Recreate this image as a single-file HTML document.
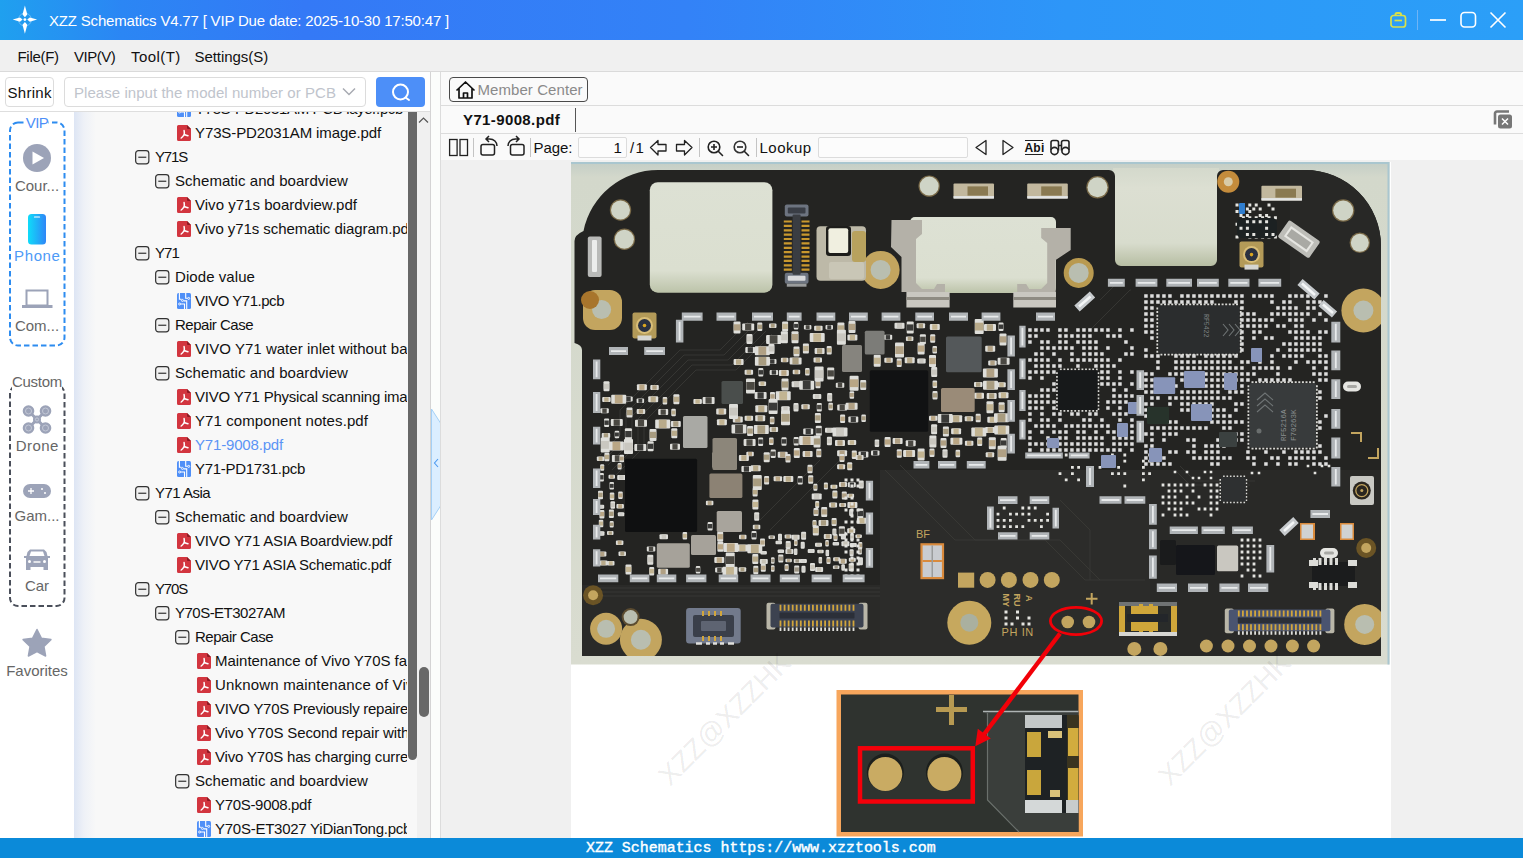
<!DOCTYPE html>
<html><head><meta charset="utf-8"><title>XZZ Schematics</title>
<style>
*{box-sizing:border-box;margin:0;padding:0}
html,body{width:1523px;height:858px;overflow:hidden;background:#f0f0f0;font-family:"Liberation Sans",sans-serif;font-size:15px;color:#111}
.abs{position:absolute}
#title{position:absolute;left:0;top:0;width:1523px;height:40px;background:linear-gradient(90deg,#1fa0ef 0,#2b86f4 8%,#3479f6 20%,#3382f7 45%,#2d96f8 70%,#2b9ff8 100%)}
#title .tx{position:absolute;left:49px;top:12px;color:#fff;font-size:15px;line-height:18px;white-space:nowrap;letter-spacing:-0.186px}
#menu{position:absolute;left:0;top:40px;width:1523px;height:32px;background:#f0f0f0;border-bottom:1px solid #dadada}
#menu span{position:absolute;top:8px;line-height:18px;font-size:15px;white-space:nowrap;color:#111}
#left{position:absolute;left:0;top:72px;width:430px;height:766px;background:#fff;overflow:hidden}
#ltool{position:absolute;left:0;top:0;width:430px;height:40px;background:#fff;border-bottom:1px solid #dedede}
#shrink{position:absolute;left:5px;top:5px;width:49px;height:30px;border:1px solid #dcdcdc;border-radius:4px;background:#fff;font-size:15px;line-height:28px;padding-top:1px;text-align:center;letter-spacing:.25px;text-indent:.25px}
#search{position:absolute;left:64px;top:5px;width:302px;height:30px;border:1px solid #dcdcdc;border-radius:4px;background:#fff}
#search span{position:absolute;left:9px;top:6px;line-height:18px;color:#c0c4cc;white-space:nowrap;letter-spacing:.05px}
#sbtn{position:absolute;left:376px;top:5px;width:49px;height:30px;border-radius:4px;background:#4d8ff8}
#side{position:absolute;left:0;top:40px;width:74px;height:726px;background:#fff}
#side .lbl{position:absolute;left:0;width:74px;text-align:center;font-size:15px;line-height:18px;color:#666;white-space:nowrap}
#tree{position:absolute;left:74px;top:40px;width:333px;height:726px;overflow:hidden;background:linear-gradient(90deg,#dde5f4 0,#eef1f7 10px,#f8f8f8 22px,#f8f8f8 100%)}
.tr{position:absolute;left:0;width:400px;height:24px}
.tr .tt{position:absolute;top:3px;line-height:18px;white-space:nowrap;color:#111}
.tr .tt.sel{color:#5b94f5}
.tr .ex{position:absolute;top:5px}
.tr .fi{position:absolute;top:4px}
#dbar{position:absolute;left:407.500px;top:40px;width:9.800px;height:648px;background:#686868;border-radius:0 0 5px 5px}
#vsb{position:absolute;left:417.300px;top:40px;width:12.700px;height:726px;background:#f0f0f0}
#vsb i{position:absolute;left:1.500px;top:555px;width:10px;height:49.500px;border-radius:5px;background:#686868}
#split{position:absolute;left:430px;top:72px;width:11px;height:766px;background:#fbfdfb;border-left:1px solid #d4d4d4}
#right{position:absolute;left:440px;top:72px;width:1083px;height:766px;background:#fafafa;border-left:1px solid #dcdcdc}
#mc{position:absolute;left:8px;top:5px;width:139px;height:25px;border:1px solid #4a4a4a;border-radius:4px;background:#fafafa}
#mc span{position:absolute;left:27.500px;letter-spacing:.07px;top:3px;line-height:18px;color:#8a8a8a;white-space:nowrap}
#tabs{position:absolute;left:0;top:33px;width:1082px;height:29px;border-top:1px solid #dcdcdc;border-bottom:1px solid #dcdcdc;background:#fafafa}
#tabs b{position:absolute;left:22px;top:5px;line-height:18px;font-size:15px;letter-spacing:.38px;white-space:nowrap;color:#111}
#tabs i{position:absolute;left:134px;top:2px;width:1px;height:24px;background:#555}
#ptool{position:absolute;left:0;top:61px;width:1082px;height:28px}
#ptool .t{position:absolute;top:6px;line-height:18px;white-space:nowrap;color:#111}
#ptool .sep{position:absolute;top:5px;width:1px;height:19px;background:#c8c8c8}
#ptool .inp{position:absolute;top:4px;height:21px;border:1px solid #dcdcdc;border-radius:2px;background:#fcfcfc}
#doc{position:absolute;left:0;top:88px;width:1082px;height:678px;background:#f0f0f0;overflow:hidden}
#page{position:absolute;left:130px;top:2px;width:820px;height:676px;background:#fff}
#status{position:absolute;left:0;top:838px;width:1523px;height:20px;background:#0b8ad9}
#status span{position:absolute;left:586px;top:1px;line-height:18px;font-family:"Liberation Mono",monospace;font-size:14.950px;color:#fff;white-space:pre;-webkit-text-stroke:.4px #fff}
</style></head><body>
<div id="title">
<svg class="abs" style="left:12px;top:5px" width="26" height="30" viewBox="0 0 26 30"><path d="M12.900 .4L15.300 9.500 12.900 12.300 10.500 9.500zM12.900 28.800L15.300 19.700 12.900 16.900 10.500 19.700zM.7 14.600L8 12.500 10.600 14.600 8 16.700zM25.100 14.600L17.800 12.500 15.200 14.600 17.800 16.700z" fill="#fff"/><circle cx="12.900" cy="14.600" r="1.400" fill="#fff"/><circle cx="12.900" cy="14.600" r="6.500" fill="none" stroke="#fff" stroke-opacity=".3" stroke-width="1"/></svg>
<span class="tx">XZZ Schematics V4.77 [ VIP Due date: 2025-10-30 17:50:47 ]</span>
<svg class="abs" style="left:1385px;top:8px" width="130" height="24" viewBox="0 0 130 24" fill="none">
<rect x="6" y="7.500" width="14.500" height="11.500" rx="2.500" stroke="#d8e04a" stroke-width="1.700"/><path d="M10.500 7.500v-1a1.500 1.500 0 0 1 1.500-1.500h2.500a1.500 1.500 0 0 1 1.500 1.500v1" stroke="#d8e04a" stroke-width="2"/><path d="M9.500 12.500h7.500" stroke="#d8e04a" stroke-width="1.700"/>
<path d="M32.500 2v20" stroke="#6fb4f6" stroke-width="1"/>
<path d="M45 12h16" stroke="#fff" stroke-width="1.700"/>
<rect x="76" y="4.500" width="14.500" height="14.500" rx="3.500" stroke="#fff" stroke-width="1.600"/>
<path d="M105.500 4.500l15 15M120.500 4.500l-15 15" stroke="#fff" stroke-width="1.600"/>
</svg>
</div>
<div id="menu"><span style="left:17.500px;letter-spacing:-.3px">File(F)</span><span style="left:74px;letter-spacing:-.5px">VIP(V)</span><span style="left:131px;letter-spacing:.45px">Tool(T)</span><span style="left:194.500px;letter-spacing:-.05px">Settings(S)</span></div>

<div id="left">
 <div id="side">
  <svg class="abs" style="left:0;top:0" width="74" height="600" viewBox="0 0 74 600" fill="none">
   <rect x="10" y="10.500" width="54.500" height="223" rx="8" stroke="#2d8cf0" stroke-width="2" stroke-dasharray="5.500 3"/>
   <rect x="26" y="3" width="22.500" height="14" fill="#fff"/>
   <circle cx="37" cy="46" r="14" fill="#9ca3b8"/><path d="M32.500 39.500L44 46 32.500 52.500z" fill="#fff"/>
   <defs><linearGradient id="pg" x1="0" x2="1"><stop offset="0" stop-color="#0fdcf9"/><stop offset="1" stop-color="#2f86f7"/></linearGradient></defs>
   <rect x="28" y="102" width="18" height="30.500" rx="3.500" fill="url(#pg)"/><path d="M34.500 105h5" stroke="#fff" stroke-width="1.200" stroke-linecap="round"/>
   <path d="M26.500 178.500h21v15h-21z" stroke="#9ca3b8" stroke-width="2"/><path d="M22 194.500h30.500" stroke="#9ca3b8" stroke-width="3"/>
   <rect x="10" y="273.500" width="54.500" height="220.500" rx="8" stroke="#4a4f5a" stroke-width="2" stroke-dasharray="5.500 3"/>
   <rect x="12" y="262" width="50" height="16" fill="#fff"/>
   <g stroke="#9ca3b8" stroke-width="3"><path d="M29 299.500l16 16M45 299.500l-16 16"/></g>
   <g fill="#9ca3b8"><circle cx="28.500" cy="299" r="5.800"/><circle cx="45.500" cy="299" r="5.800"/><circle cx="28.500" cy="316" r="5.800"/><circle cx="45.500" cy="316" r="5.800"/><circle cx="37" cy="307.500" r="4"/></g>
   <g fill="none" stroke="#c3c8d6" stroke-width="1"><circle cx="28.500" cy="299" r="3"/><circle cx="45.500" cy="299" r="3"/><circle cx="28.500" cy="316" r="3"/><circle cx="45.500" cy="316" r="3"/><circle cx="37" cy="307.500" r="1.600"/></g>
   <rect x="23" y="372" width="28" height="14" rx="7" fill="#9ca3b8"/><path d="M28 379h6M31 376v6" stroke="#fff" stroke-width="1.300"/><circle cx="42" cy="377" r="1" fill="#fff"/><circle cx="45" cy="381" r="1" fill="#fff"/>
   <path d="M27.500 440l2.500-2.500h14l2.500 2.500 1 4h2.500v2h-2v12h-4.500v-3h-13v3h-4.500v-12h-2v-2h2.500z" fill="#9ca3b8"/><path d="M29.500 444l1.500-4.500h12l1.500 4.500z" fill="#fff"/><circle cx="29.500" cy="449.500" r="1.500" fill="#fff"/><circle cx="44.500" cy="449.500" r="1.500" fill="#fff"/><path d="M33.500 450h7" stroke="#fafafa" stroke-width="1.500"/>
   <path d="M37 517.500l4.300 8.700 9.600 1.400-7 6.800 1.700 9.600L37 539.500l-8.600 4.500 1.700-9.600-7-6.800 9.600-1.400z" fill="#9ca3b8" stroke="#9ca3b8" stroke-width="1.500" stroke-linejoin="round"/>
  </svg>
  <div class="lbl" style="top:2px;color:#4d8ff8;letter-spacing:-.5px">VIP</div>
  <div class="lbl" style="top:65px">Cour...</div>
  <div class="lbl" style="top:135px;color:#4d9af7;letter-spacing:.6px;text-indent:.6px">Phone</div>
  <div class="lbl" style="top:205px">Com...</div>
  <div class="lbl" style="top:261px;letter-spacing:-.3px">Custom</div>
  <div class="lbl" style="top:325px;letter-spacing:.4px;text-indent:.4px">Drone</div>
  <div class="lbl" style="top:395px">Gam...</div>
  <div class="lbl" style="top:465px">Car</div>
  <div class="lbl" style="top:550px">Favorites</div>
 </div>
 <div id="tree">
<div class="tr" style="top:-15px"><svg class="fi" style="left:103px" width="14" height="16" viewBox="0 0 14 16"><rect width="14" height="16" rx="1.500" fill="#4f8ff7"/><path d="M2.400 0V6.300H4.400M8.700 0V5.200H10.800M3.600 11H7.500V16M6.500 7.900H9.700V16" fill="none" stroke="#fff" stroke-width="1.100"/><g fill="#4f8ff7" stroke="#fff" stroke-width=".9"><circle cx="5.400" cy="7.400" r="1"/><circle cx="11.700" cy="5.400" r="1"/><circle cx="2.600" cy="11" r="1"/></g></svg><span class="tt " style="left:121px;letter-spacing:-0.356px;">Y73S-PD2031AM PCB layer.pcb</span></div>
<div class="tr" style="top:9px"><svg class="fi" style="left:103px" width="14" height="16" viewBox="0 0 14 16"><path d="M1.500 0h8.500L14 4v10.500a1.500 1.500 0 0 1-1.500 1.500h-11A1.500 1.500 0 0 1 0 14.500v-13A1.500 1.500 0 0 1 1.500 0z" fill="#d2353f"/><path d="M10 0L14 4h-3a1 1 0 0 1-1-1z" fill="#8d1a24"/><path d="M7.100 5.600C7.400 7.200 7.400 8.300 7.200 9.300M7.200 9.300C6.500 10.800 5.400 12.200 4.200 13M7.200 9.300C8.400 10 9.700 10.500 11 10.700" fill="none" stroke="#fff" stroke-width="1.500" stroke-linecap="round"/></svg><span class="tt " style="left:121px;letter-spacing:-0.106px;">Y73S-PD2031AM image.pdf</span></div>
<div class="tr" style="top:33px"><svg class="ex" style="left:61px" width="15" height="15" viewBox="0 0 15 15"><rect x=".65" y=".65" width="13.200" height="13.200" rx="2.800" fill="#f0f0f0" stroke="#333" stroke-width="1.200"/><path d="M3.300 7.250h8" stroke="#333" stroke-width="1.200"/></svg><span class="tt " style="left:81px;letter-spacing:-1.173px;">Y71S</span></div>
<div class="tr" style="top:57px"><svg class="ex" style="left:81px" width="15" height="15" viewBox="0 0 15 15"><rect x=".65" y=".65" width="13.200" height="13.200" rx="2.800" fill="#f0f0f0" stroke="#333" stroke-width="1.200"/><path d="M3.300 7.250h8" stroke="#333" stroke-width="1.200"/></svg><span class="tt " style="left:101px;letter-spacing:0.054px;">Schematic and boardview</span></div>
<div class="tr" style="top:81px"><svg class="fi" style="left:103px" width="14" height="16" viewBox="0 0 14 16"><path d="M1.500 0h8.500L14 4v10.500a1.500 1.500 0 0 1-1.500 1.500h-11A1.500 1.500 0 0 1 0 14.500v-13A1.500 1.500 0 0 1 1.500 0z" fill="#d2353f"/><path d="M10 0L14 4h-3a1 1 0 0 1-1-1z" fill="#8d1a24"/><path d="M7.100 5.600C7.400 7.200 7.400 8.300 7.200 9.300M7.200 9.300C6.500 10.800 5.400 12.200 4.200 13M7.200 9.300C8.400 10 9.700 10.500 11 10.700" fill="none" stroke="#fff" stroke-width="1.500" stroke-linecap="round"/></svg><span class="tt " style="left:121px;letter-spacing:0.022px;">Vivo y71s boardview.pdf</span></div>
<div class="tr" style="top:105px"><svg class="fi" style="left:103px" width="14" height="16" viewBox="0 0 14 16"><path d="M1.500 0h8.500L14 4v10.500a1.500 1.500 0 0 1-1.500 1.500h-11A1.500 1.500 0 0 1 0 14.500v-13A1.500 1.500 0 0 1 1.500 0z" fill="#d2353f"/><path d="M10 0L14 4h-3a1 1 0 0 1-1-1z" fill="#8d1a24"/><path d="M7.100 5.600C7.400 7.200 7.400 8.300 7.200 9.300M7.200 9.300C6.500 10.800 5.400 12.200 4.200 13M7.200 9.300C8.400 10 9.700 10.500 11 10.700" fill="none" stroke="#fff" stroke-width="1.500" stroke-linecap="round"/></svg><span class="tt " style="left:121px;letter-spacing:-0.061px;">Vivo y71s schematic diagram.pdf</span></div>
<div class="tr" style="top:129px"><svg class="ex" style="left:61px" width="15" height="15" viewBox="0 0 15 15"><rect x=".65" y=".65" width="13.200" height="13.200" rx="2.800" fill="#f0f0f0" stroke="#333" stroke-width="1.200"/><path d="M3.300 7.250h8" stroke="#333" stroke-width="1.200"/></svg><span class="tt " style="left:81px;letter-spacing:-0.896px;">Y71</span></div>
<div class="tr" style="top:153px"><svg class="ex" style="left:81px" width="15" height="15" viewBox="0 0 15 15"><rect x=".65" y=".65" width="13.200" height="13.200" rx="2.800" fill="#f0f0f0" stroke="#333" stroke-width="1.200"/><path d="M3.300 7.250h8" stroke="#333" stroke-width="1.200"/></svg><span class="tt " style="left:101px;letter-spacing:0.071px;">Diode value</span></div>
<div class="tr" style="top:177px"><svg class="fi" style="left:103px" width="14" height="16" viewBox="0 0 14 16"><rect width="14" height="16" rx="1.500" fill="#4f8ff7"/><path d="M2.400 0V6.300H4.400M8.700 0V5.200H10.800M3.600 11H7.500V16M6.500 7.900H9.700V16" fill="none" stroke="#fff" stroke-width="1.100"/><g fill="#4f8ff7" stroke="#fff" stroke-width=".9"><circle cx="5.400" cy="7.400" r="1"/><circle cx="11.700" cy="5.400" r="1"/><circle cx="2.600" cy="11" r="1"/></g></svg><span class="tt " style="left:121px;letter-spacing:-0.482px;">VIVO Y71.pcb</span></div>
<div class="tr" style="top:201px"><svg class="ex" style="left:81px" width="15" height="15" viewBox="0 0 15 15"><rect x=".65" y=".65" width="13.200" height="13.200" rx="2.800" fill="#f0f0f0" stroke="#333" stroke-width="1.200"/><path d="M3.300 7.250h8" stroke="#333" stroke-width="1.200"/></svg><span class="tt " style="left:101px;letter-spacing:-0.488px;">Repair Case</span></div>
<div class="tr" style="top:225px"><svg class="fi" style="left:103px" width="14" height="16" viewBox="0 0 14 16"><path d="M1.500 0h8.500L14 4v10.500a1.500 1.500 0 0 1-1.500 1.500h-11A1.500 1.500 0 0 1 0 14.500v-13A1.500 1.500 0 0 1 1.500 0z" fill="#d2353f"/><path d="M10 0L14 4h-3a1 1 0 0 1-1-1z" fill="#8d1a24"/><path d="M7.100 5.600C7.400 7.200 7.400 8.300 7.200 9.300M7.200 9.300C6.500 10.800 5.400 12.200 4.200 13M7.200 9.300C8.400 10 9.700 10.500 11 10.700" fill="none" stroke="#fff" stroke-width="1.500" stroke-linecap="round"/></svg><span class="tt " style="left:121px;letter-spacing:0.032px;">VIVO Y71 water inlet without backlight.pdf</span></div>
<div class="tr" style="top:249px"><svg class="ex" style="left:81px" width="15" height="15" viewBox="0 0 15 15"><rect x=".65" y=".65" width="13.200" height="13.200" rx="2.800" fill="#f0f0f0" stroke="#333" stroke-width="1.200"/><path d="M3.300 7.250h8" stroke="#333" stroke-width="1.200"/></svg><span class="tt " style="left:101px;letter-spacing:0.054px;">Schematic and boardview</span></div>
<div class="tr" style="top:273px"><svg class="fi" style="left:103px" width="14" height="16" viewBox="0 0 14 16"><path d="M1.500 0h8.500L14 4v10.500a1.500 1.500 0 0 1-1.500 1.500h-11A1.500 1.500 0 0 1 0 14.500v-13A1.500 1.500 0 0 1 1.500 0z" fill="#d2353f"/><path d="M10 0L14 4h-3a1 1 0 0 1-1-1z" fill="#8d1a24"/><path d="M7.100 5.600C7.400 7.200 7.400 8.300 7.200 9.300M7.200 9.300C6.500 10.800 5.400 12.200 4.200 13M7.200 9.300C8.400 10 9.700 10.500 11 10.700" fill="none" stroke="#fff" stroke-width="1.500" stroke-linecap="round"/></svg><span class="tt " style="left:121px;letter-spacing:-0.217px;">VIVO Y71 Physical scanning image.pdf</span></div>
<div class="tr" style="top:297px"><svg class="fi" style="left:103px" width="14" height="16" viewBox="0 0 14 16"><path d="M1.500 0h8.500L14 4v10.500a1.500 1.500 0 0 1-1.500 1.500h-11A1.500 1.500 0 0 1 0 14.500v-13A1.500 1.500 0 0 1 1.500 0z" fill="#d2353f"/><path d="M10 0L14 4h-3a1 1 0 0 1-1-1z" fill="#8d1a24"/><path d="M7.100 5.600C7.400 7.200 7.400 8.300 7.200 9.300M7.200 9.300C6.500 10.800 5.400 12.200 4.200 13M7.200 9.300C8.400 10 9.700 10.500 11 10.700" fill="none" stroke="#fff" stroke-width="1.500" stroke-linecap="round"/></svg><span class="tt " style="left:121px;letter-spacing:0.089px;">Y71 component notes.pdf</span></div>
<div class="tr" style="top:321px"><svg class="fi" style="left:103px" width="14" height="16" viewBox="0 0 14 16"><path d="M1.500 0h8.500L14 4v10.500a1.500 1.500 0 0 1-1.500 1.500h-11A1.500 1.500 0 0 1 0 14.500v-13A1.500 1.500 0 0 1 1.500 0z" fill="#d2353f"/><path d="M10 0L14 4h-3a1 1 0 0 1-1-1z" fill="#8d1a24"/><path d="M7.100 5.600C7.400 7.200 7.400 8.300 7.200 9.300M7.200 9.300C6.500 10.800 5.400 12.200 4.200 13M7.200 9.300C8.400 10 9.700 10.500 11 10.700" fill="none" stroke="#fff" stroke-width="1.500" stroke-linecap="round"/></svg><span class="tt sel" style="left:121px;letter-spacing:-0.173px;">Y71-9008.pdf</span></div>
<div class="tr" style="top:345px"><svg class="fi" style="left:103px" width="14" height="16" viewBox="0 0 14 16"><rect width="14" height="16" rx="1.500" fill="#4f8ff7"/><path d="M2.400 0V6.300H4.400M8.700 0V5.200H10.800M3.600 11H7.500V16M6.500 7.900H9.700V16" fill="none" stroke="#fff" stroke-width="1.100"/><g fill="#4f8ff7" stroke="#fff" stroke-width=".9"><circle cx="5.400" cy="7.400" r="1"/><circle cx="11.700" cy="5.400" r="1"/><circle cx="2.600" cy="11" r="1"/></g></svg><span class="tt " style="left:121px;letter-spacing:-0.303px;">Y71-PD1731.pcb</span></div>
<div class="tr" style="top:369px"><svg class="ex" style="left:61px" width="15" height="15" viewBox="0 0 15 15"><rect x=".65" y=".65" width="13.200" height="13.200" rx="2.800" fill="#f0f0f0" stroke="#333" stroke-width="1.200"/><path d="M3.300 7.250h8" stroke="#333" stroke-width="1.200"/></svg><span class="tt " style="left:81px;letter-spacing:-0.526px;">Y71 Asia</span></div>
<div class="tr" style="top:393px"><svg class="ex" style="left:81px" width="15" height="15" viewBox="0 0 15 15"><rect x=".65" y=".65" width="13.200" height="13.200" rx="2.800" fill="#f0f0f0" stroke="#333" stroke-width="1.200"/><path d="M3.300 7.250h8" stroke="#333" stroke-width="1.200"/></svg><span class="tt " style="left:101px;letter-spacing:0.054px;">Schematic and boardview</span></div>
<div class="tr" style="top:417px"><svg class="fi" style="left:103px" width="14" height="16" viewBox="0 0 14 16"><path d="M1.500 0h8.500L14 4v10.500a1.500 1.500 0 0 1-1.500 1.500h-11A1.500 1.500 0 0 1 0 14.500v-13A1.500 1.500 0 0 1 1.500 0z" fill="#d2353f"/><path d="M10 0L14 4h-3a1 1 0 0 1-1-1z" fill="#8d1a24"/><path d="M7.100 5.600C7.400 7.200 7.400 8.300 7.200 9.300M7.200 9.300C6.500 10.800 5.400 12.200 4.200 13M7.200 9.300C8.400 10 9.700 10.500 11 10.700" fill="none" stroke="#fff" stroke-width="1.500" stroke-linecap="round"/></svg><span class="tt " style="left:121px;letter-spacing:-0.167px;">VIVO Y71 ASIA Boardview.pdf</span></div>
<div class="tr" style="top:441px"><svg class="fi" style="left:103px" width="14" height="16" viewBox="0 0 14 16"><path d="M1.500 0h8.500L14 4v10.500a1.500 1.500 0 0 1-1.500 1.500h-11A1.500 1.500 0 0 1 0 14.500v-13A1.500 1.500 0 0 1 1.500 0z" fill="#d2353f"/><path d="M10 0L14 4h-3a1 1 0 0 1-1-1z" fill="#8d1a24"/><path d="M7.100 5.600C7.400 7.200 7.400 8.300 7.200 9.300M7.200 9.300C6.500 10.800 5.400 12.200 4.200 13M7.200 9.300C8.400 10 9.700 10.500 11 10.700" fill="none" stroke="#fff" stroke-width="1.500" stroke-linecap="round"/></svg><span class="tt " style="left:121px;letter-spacing:-0.235px;">VIVO Y71 ASIA Schematic.pdf</span></div>
<div class="tr" style="top:465px"><svg class="ex" style="left:61px" width="15" height="15" viewBox="0 0 15 15"><rect x=".65" y=".65" width="13.200" height="13.200" rx="2.800" fill="#f0f0f0" stroke="#333" stroke-width="1.200"/><path d="M3.300 7.250h8" stroke="#333" stroke-width="1.200"/></svg><span class="tt " style="left:81px;letter-spacing:-1.173px;">Y70S</span></div>
<div class="tr" style="top:489px"><svg class="ex" style="left:81px" width="15" height="15" viewBox="0 0 15 15"><rect x=".65" y=".65" width="13.200" height="13.200" rx="2.800" fill="#f0f0f0" stroke="#333" stroke-width="1.200"/><path d="M3.300 7.250h8" stroke="#333" stroke-width="1.200"/></svg><span class="tt " style="left:101px;letter-spacing:-0.517px;">Y70S-ET3027AM</span></div>
<div class="tr" style="top:513px"><svg class="ex" style="left:101px" width="15" height="15" viewBox="0 0 15 15"><rect x=".65" y=".65" width="13.200" height="13.200" rx="2.800" fill="#f0f0f0" stroke="#333" stroke-width="1.200"/><path d="M3.300 7.250h8" stroke="#333" stroke-width="1.200"/></svg><span class="tt " style="left:121px;letter-spacing:-0.488px;">Repair Case</span></div>
<div class="tr" style="top:537px"><svg class="fi" style="left:123px" width="14" height="16" viewBox="0 0 14 16"><path d="M1.500 0h8.500L14 4v10.500a1.500 1.500 0 0 1-1.500 1.500h-11A1.500 1.500 0 0 1 0 14.500v-13A1.500 1.500 0 0 1 1.500 0z" fill="#d2353f"/><path d="M10 0L14 4h-3a1 1 0 0 1-1-1z" fill="#8d1a24"/><path d="M7.100 5.600C7.400 7.200 7.400 8.300 7.200 9.300M7.200 9.300C6.500 10.800 5.400 12.200 4.200 13M7.200 9.300C8.400 10 9.700 10.500 11 10.700" fill="none" stroke="#fff" stroke-width="1.500" stroke-linecap="round"/></svg><span class="tt " style="left:141px;letter-spacing:-0.034px;">Maintenance of Vivo Y70S fault.pdf</span></div>
<div class="tr" style="top:561px"><svg class="fi" style="left:123px" width="14" height="16" viewBox="0 0 14 16"><path d="M1.500 0h8.500L14 4v10.500a1.500 1.500 0 0 1-1.500 1.500h-11A1.500 1.500 0 0 1 0 14.500v-13A1.500 1.500 0 0 1 1.500 0z" fill="#d2353f"/><path d="M10 0L14 4h-3a1 1 0 0 1-1-1z" fill="#8d1a24"/><path d="M7.100 5.600C7.400 7.200 7.400 8.300 7.200 9.300M7.200 9.300C6.500 10.800 5.400 12.200 4.200 13M7.200 9.300C8.400 10 9.700 10.500 11 10.700" fill="none" stroke="#fff" stroke-width="1.500" stroke-linecap="round"/></svg><span class="tt " style="left:141px;letter-spacing:0.180px;">Unknown maintenance of Vivo.pdf</span></div>
<div class="tr" style="top:585px"><svg class="fi" style="left:123px" width="14" height="16" viewBox="0 0 14 16"><path d="M1.500 0h8.500L14 4v10.500a1.500 1.500 0 0 1-1.500 1.500h-11A1.500 1.500 0 0 1 0 14.500v-13A1.500 1.500 0 0 1 1.500 0z" fill="#d2353f"/><path d="M10 0L14 4h-3a1 1 0 0 1-1-1z" fill="#8d1a24"/><path d="M7.100 5.600C7.400 7.200 7.400 8.300 7.200 9.300M7.200 9.300C6.500 10.800 5.400 12.200 4.200 13M7.200 9.300C8.400 10 9.700 10.500 11 10.700" fill="none" stroke="#fff" stroke-width="1.500" stroke-linecap="round"/></svg><span class="tt " style="left:141px;letter-spacing:-0.271px;">VIVO Y70S Previously repaired.pdf</span></div>
<div class="tr" style="top:609px"><svg class="fi" style="left:123px" width="14" height="16" viewBox="0 0 14 16"><path d="M1.500 0h8.500L14 4v10.500a1.500 1.500 0 0 1-1.500 1.500h-11A1.500 1.500 0 0 1 0 14.500v-13A1.500 1.500 0 0 1 1.500 0z" fill="#d2353f"/><path d="M10 0L14 4h-3a1 1 0 0 1-1-1z" fill="#8d1a24"/><path d="M7.100 5.600C7.400 7.200 7.400 8.300 7.200 9.300M7.200 9.300C6.500 10.800 5.400 12.200 4.200 13M7.200 9.300C8.400 10 9.700 10.500 11 10.700" fill="none" stroke="#fff" stroke-width="1.500" stroke-linecap="round"/></svg><span class="tt " style="left:141px;letter-spacing:-0.132px;">Vivo Y70S Second repair without.pdf</span></div>
<div class="tr" style="top:633px"><svg class="fi" style="left:123px" width="14" height="16" viewBox="0 0 14 16"><path d="M1.500 0h8.500L14 4v10.500a1.500 1.500 0 0 1-1.500 1.500h-11A1.500 1.500 0 0 1 0 14.500v-13A1.500 1.500 0 0 1 1.500 0z" fill="#d2353f"/><path d="M10 0L14 4h-3a1 1 0 0 1-1-1z" fill="#8d1a24"/><path d="M7.100 5.600C7.400 7.200 7.400 8.300 7.200 9.300M7.200 9.300C6.500 10.800 5.400 12.200 4.200 13M7.200 9.300C8.400 10 9.700 10.500 11 10.700" fill="none" stroke="#fff" stroke-width="1.500" stroke-linecap="round"/></svg><span class="tt " style="left:141px;letter-spacing:-0.169px;">Vivo Y70S has charging current.pdf</span></div>
<div class="tr" style="top:657px"><svg class="ex" style="left:101px" width="15" height="15" viewBox="0 0 15 15"><rect x=".65" y=".65" width="13.200" height="13.200" rx="2.800" fill="#f0f0f0" stroke="#333" stroke-width="1.200"/><path d="M3.300 7.250h8" stroke="#333" stroke-width="1.200"/></svg><span class="tt " style="left:121px;letter-spacing:0.054px;">Schematic and boardview</span></div>
<div class="tr" style="top:681px"><svg class="fi" style="left:123px" width="14" height="16" viewBox="0 0 14 16"><path d="M1.500 0h8.500L14 4v10.500a1.500 1.500 0 0 1-1.500 1.500h-11A1.500 1.500 0 0 1 0 14.500v-13A1.500 1.500 0 0 1 1.500 0z" fill="#d2353f"/><path d="M10 0L14 4h-3a1 1 0 0 1-1-1z" fill="#8d1a24"/><path d="M7.100 5.600C7.400 7.200 7.400 8.300 7.200 9.300M7.200 9.300C6.500 10.800 5.400 12.200 4.200 13M7.200 9.300C8.400 10 9.700 10.500 11 10.700" fill="none" stroke="#fff" stroke-width="1.500" stroke-linecap="round"/></svg><span class="tt " style="left:141px;letter-spacing:-0.314px;">Y70S-9008.pdf</span></div>
<div class="tr" style="top:705px"><svg class="fi" style="left:123px" width="14" height="16" viewBox="0 0 14 16"><rect width="14" height="16" rx="1.500" fill="#4f8ff7"/><path d="M2.400 0V6.300H4.400M8.700 0V5.200H10.800M3.600 11H7.500V16M6.500 7.900H9.700V16" fill="none" stroke="#fff" stroke-width="1.100"/><g fill="#4f8ff7" stroke="#fff" stroke-width=".9"><circle cx="5.400" cy="7.400" r="1"/><circle cx="11.700" cy="5.400" r="1"/><circle cx="2.600" cy="11" r="1"/></g></svg><span class="tt " style="left:141px;letter-spacing:-0.252px;">Y70S-ET3027 YiDianTong.pcb</span></div>
 </div>
 <div class="abs" style="left:407px;top:40px;width:11px;height:726px;background:#f8f8f8"></div>
 <div id="dbar"></div>
 <div id="vsb"><svg class="abs" style="left:1px;top:4px" width="11" height="8" viewBox="0 0 11 8"><path d="M1 6.500L5.500 2 10 6.500" fill="none" stroke="#555" stroke-width="1.200"/></svg><i></i></div>
 <div id="ltool">
  <div id="shrink">Shrink</div>
  <div id="search"><span>Please input the model number or PCB</span><svg class="abs" style="left:277px;top:9px" width="14" height="9" viewBox="0 0 14 9"><path d="M1 1.500l6 6 6-6" fill="none" stroke="#a8abb2" stroke-width="1.500"/></svg></div>
  <div id="sbtn"><svg class="abs" style="left:14px;top:5px" width="22" height="21" viewBox="0 0 22 21"><circle cx="10.500" cy="10" r="7.500" fill="none" stroke="#fff" stroke-width="2"/><path d="M15.500 15.500l3.500 2.500" stroke="#fff" stroke-width="2" stroke-linecap="round"/></svg></div>
 </div>
</div>
<div id="split"><svg class="abs" style="left:0;top:337px" width="11" height="111" viewBox="0 0 11 111"><path d="M.5 0L9.500 14v83L.5 111z" fill="#dbeeff" stroke="#a4d0f6" stroke-width="1"/><path d="M7 50l-3.500 4 3.500 4" fill="none" stroke="#4d9af0" stroke-width="1.100"/></svg></div>
<div id="right">
 <div id="mc"><svg class="abs" style="left:5px;top:2px" width="21" height="20" viewBox="0 0 21 20"><path d="M1.500 10.500L10.500 2l9 8.500M4 8.500v9.500h13v-9.500M8.500 18v-5h4v5" fill="none" stroke="#111" stroke-width="1.700" stroke-linejoin="round"/></svg><span>Member Center</span></div>
 <div id="tabs"><b>Y71-9008.pdf</b><i></i><svg class="abs" style="left:1052px;top:4px" width="20" height="19" viewBox="0 0 20 19" fill="none"><path d="M2 14.500v-11a2 2 0 0 1 2-2h12" stroke="#777" stroke-width="2.600"/><rect x="5" y="4.500" width="14" height="14" rx="2.500" fill="#777"/><path d="M9 8.500l6 6M15 8.500l-6 6" stroke="#fff" stroke-width="1.500"/></svg></div>
 <div id="ptool">
  <svg class="abs" style="left:0;top:0" width="640" height="28" viewBox="441 133 640 28" fill="none" stroke="#222" stroke-width="1.300">
<rect x="449.600" y="139.500" width="7.500" height="16"/><rect x="460" y="139.500" width="7.500" height="16"/>
<path d="M473.500 138v19M530.500 138v19M699.500 138v19M756.500 138v19" stroke="#c4c4c4" stroke-width="1"/>
<g stroke-width="1.500"><rect x="481" y="144.500" width="13.500" height="10.500" rx="2"/><path d="M497 146c0-4-3-7-7.500-7h-3M489 136l-3 3 3 3"/>
<rect x="510.500" y="144.500" width="13.500" height="10.500" rx="2"/><path d="M508 146c0-4 3-7 7.500-7h3M516 136l3 3-3 3"/></g>
<path d="M650.500 147.500l7.500-7v4h8v6.500h-8v4z" stroke-linejoin="round"/>
<path d="M692 147.500l-7.500-7v4h-8v6.500h8v4z" stroke-linejoin="round"/>
<g stroke-width="1.600"><circle cx="714" cy="147" r="5.800"/><path d="M718.500 151.500l4 4" stroke-linecap="round"/><path d="M711 147h6M714 144v6"/>
<circle cx="740" cy="147" r="5.800" stroke="#333"/><path d="M744.500 151.500l4 4" stroke-linecap="round"/><path d="M737 147h6"/></g>
<path d="M986 140.500v14l-10-7z" stroke-linejoin="round"/><path d="M1003 140.500v14l10-7z" stroke-linejoin="round"/>
<path d="M1025 140.500h18M1025 154.500h18" stroke-width="1"/>
<g stroke-width="1.600"><circle cx="1054.500" cy="151" r="3.600"/><circle cx="1065.500" cy="151" r="3.600"/><path d="M1051 150v-7.500a2 2 0 0 1 2-2h3.500a2 2 0 0 1 2 2v8M1069 150v-7.500a2 2 0 0 0-2-2h-3.500a2 2 0 0 0-2 2v8M1058.500 145.500h3"/></g>
</svg>
<span class="t" style="left:92.500px;letter-spacing:-.05px">Page:</span>
<div class="inp" style="left:137px;width:49px"></div>
<span class="t" style="left:172.500px">1</span>
<span class="t" style="left:189px;letter-spacing:1.300px">/1</span>
<span class="t" style="left:318.500px;letter-spacing:.5px">Lookup</span>
<div class="inp" style="left:377px;width:150px"></div>
<span class="t" style="left:583.500px;top:7px;font-size:12px;font-weight:bold;letter-spacing:.2px;line-height:16px">Abi</span>

 </div>
 <div id="doc"><div id="page">
<svg class="abs" style="left:0;top:0" width="820" height="676" viewBox="571 162 820 676">
<defs><linearGradient id="cut" x1="0" x2="0" y1="0" y2="1"><stop offset="0" stop-color="#dde1d4"/><stop offset=".8" stop-color="#dbdfd0"/><stop offset="1" stop-color="#bcc3a9"/></linearGradient><linearGradient id="notch" x1="0" x2="0" y1="0" y2="1"><stop offset="0" stop-color="#d4d9cc"/><stop offset=".2" stop-color="#dcdfd2"/><stop offset=".75" stop-color="#d8dccd"/><stop offset="1" stop-color="#b4bb9f"/></linearGradient><linearGradient id="bed" x1="0" x2="0" y1="0" y2="1"><stop offset="0" stop-color="#c3cdc6"/><stop offset=".03" stop-color="#d3d8cb"/><stop offset="1" stop-color="#d9dcd0"/></linearGradient><clipPath id="bc"><path d="M658 170H1109a6 6 0 0 1 6 6V260a6 6 0 0 0 6 6h90a6 6 0 0 0 6-6V176a6 6 0 0 1 6-6h82A76 76 0 0 1 1381 246V656H582V350q0-5-7.500-7V241q0-6 9-10A76 76 0 0 1 658 170z"/></clipPath></defs>
<rect x="571" y="162" width="818.5" height="502.5" fill="url(#bed)"/>
<rect x="1113" y="168" width="106" height="100" fill="url(#notch)"/>
<path d="M571 163H1388.500V664.500" fill="none" stroke="#a9c6cf" stroke-width="2"/>
<path d="M658 170H1109a6 6 0 0 1 6 6V260a6 6 0 0 0 6 6h90a6 6 0 0 0 6-6V176a6 6 0 0 1 6-6h82A76 76 0 0 1 1381 246V656H582V350q0-5-7.500-7V241q0-6 9-10A76 76 0 0 1 658 170z" fill="#242422"/>
<g clip-path="url(#bc)">
<rect x="880" y="470" width="270" height="186" fill="#2c2c2a"/>
<rect x="1150" y="470" width="231" height="186" fill="#292927"/>
<rect x="582" y="585" width="298" height="71" fill="#2a2a28"/>
<rect x="1290" y="170" width="91" height="160" fill="#282826"/>
<g fill="none" stroke="#3b3b37" stroke-width=".8"><path d="M600 455l20-20v-25l60-60h40l28-28M604 460l22-22v-25l58-58h40l30-30M608 465l24-24v-25l56-56h40l32-32M612 470l26-26v-25l54-54h40l34-34M616 475l28-28v-25l52-52h40l36-36"/><path d="M590 588h290M596 592h284M602 596h278"/><path d="M885 470l70 70h90l40 40h60M900 465l75 75h85l40 40M1100 300l20-20M1090 330l40-40h1M760 520l60-60M770 530l70-70"/><path d="M1175 470l15 15h60M1180 466l15 15h60M1060 500l30 30v50"/></g>
<rect x="733.5" y="321.5" width="7" height="12" fill="#dededa" rx="1"/>
<rect x="733.8" y="324.3" width="6.4" height="6.2" fill="#b0a084"/>
<rect x="742.2" y="323.5" width="12" height="7" fill="#dededa" rx="1"/>
<rect x="745.1" y="323.8" width="6.2" height="6.4" fill="#4a4842"/>
<rect x="757.3" y="322.5" width="5" height="8.5" fill="#dededa" rx="1"/>
<rect x="757.6" y="324.6" width="4.4" height="4.4" fill="#a89c80"/>
<rect x="769" y="323.4" width="7.5" height="4.5" fill="#dededa" rx="1"/>
<rect x="770.8" y="323.7" width="3.9" height="3.9" fill="#a89c80"/>
<rect x="782.1" y="321.4" width="6" height="10" fill="#dededa" rx="1"/>
<rect x="782.4" y="323.8" width="5.4" height="5.2" fill="#c2b492"/>
<rect x="793.8" y="322.1" width="4.5" height="7.5" fill="#dededa" rx="1"/>
<rect x="794.1" y="323.9" width="3.9" height="3.9" fill="#3a3a38"/>
<rect x="803.9" y="324.9" width="7.5" height="4.5" fill="#dededa" rx="1"/>
<rect x="805.7" y="325.2" width="3.9" height="3.9" fill="#4a4842"/>
<rect x="814.1" y="325.8" width="8.5" height="5" fill="#dededa" rx="1"/>
<rect x="816.2" y="326.1" width="4.4" height="4.4" fill="#b8aa8a"/>
<rect x="825.5" y="325" width="7.5" height="4.5" fill="#dededa" rx="1"/>
<rect x="827.3" y="325.3" width="3.9" height="3.9" fill="#3a3a38"/>
<rect x="837.4" y="322.4" width="7" height="12" fill="#dededa" rx="1"/>
<rect x="837.7" y="325.3" width="6.4" height="6.2" fill="#b8aa8a"/>
<rect x="848.5" y="321" width="7" height="12" fill="#dededa" rx="1"/>
<rect x="848.8" y="323.8" width="6.4" height="6.2" fill="#b0a084"/>
<rect x="894.5" y="322.7" width="10" height="6" fill="#dededa" rx="1"/>
<rect x="896.9" y="323" width="5.2" height="5.4" fill="#c9c7c0"/>
<rect x="906.7" y="321.5" width="7" height="12" fill="#dededa" rx="1"/>
<rect x="907" y="324.4" width="6.4" height="6.2" fill="#3a3a38"/>
<rect x="916.6" y="323.2" width="8.5" height="5" fill="#dededa" rx="1"/>
<rect x="918.6" y="323.5" width="4.4" height="4.4" fill="#a89c80"/>
<rect x="929.8" y="324" width="10" height="6" fill="#dededa" rx="1"/>
<rect x="932.2" y="324.3" width="5.2" height="5.4" fill="#c2b492"/>
<rect x="974.7" y="319.1" width="9" height="15" fill="#dededa" rx="1"/>
<rect x="975" y="322.7" width="8.4" height="7.8" fill="#b8aa8a"/>
<rect x="984" y="324" width="12" height="7" fill="#dededa" rx="1"/>
<rect x="986.8" y="324.3" width="6.2" height="6.4" fill="#b8aa8a"/>
<rect x="998.5" y="322.5" width="5" height="8.5" fill="#dededa" rx="1"/>
<rect x="998.8" y="324.5" width="4.4" height="4.4" fill="#3a3a38"/>
<rect x="746.5" y="333.9" width="6" height="10" fill="#dededa" rx="1"/>
<rect x="746.8" y="336.3" width="5.4" height="5.2" fill="#c9c7c0"/>
<rect x="766.1" y="334.9" width="15" height="9" fill="#dededa" rx="1"/>
<rect x="769.7" y="335.2" width="7.8" height="8.4" fill="#4a4842"/>
<rect x="780.9" y="331.2" width="7" height="12" fill="#dededa" rx="1"/>
<rect x="781.2" y="334.1" width="6.4" height="6.2" fill="#c9c7c0"/>
<rect x="791.5" y="331.2" width="7" height="12" fill="#dededa" rx="1"/>
<rect x="791.8" y="334" width="6.4" height="6.2" fill="#b0a084"/>
<rect x="809.7" y="333.1" width="15" height="9" fill="#dededa" rx="1"/>
<rect x="813.3" y="333.4" width="7.8" height="8.4" fill="#c2b492"/>
<rect x="836.9" y="329.8" width="9" height="15" fill="#dededa" rx="1"/>
<rect x="837.2" y="333.4" width="8.4" height="7.8" fill="#c9c7c0"/>
<rect x="847.4" y="334.4" width="10" height="6" fill="#dededa" rx="1"/>
<rect x="849.8" y="334.7" width="5.2" height="5.4" fill="#c2b492"/>
<rect x="883.7" y="334.8" width="8.5" height="5" fill="#dededa" rx="1"/>
<rect x="885.7" y="335.1" width="4.4" height="4.4" fill="#3a3a38"/>
<rect x="905.9" y="336.4" width="7.5" height="4.5" fill="#dededa" rx="1"/>
<rect x="907.7" y="336.7" width="3.9" height="3.9" fill="#a89c80"/>
<rect x="919.9" y="334.3" width="6" height="10" fill="#dededa" rx="1"/>
<rect x="920.2" y="336.7" width="5.4" height="5.2" fill="#4a4842"/>
<rect x="930.2" y="334.3" width="5" height="8.5" fill="#dededa" rx="1"/>
<rect x="930.5" y="336.3" width="4.4" height="4.4" fill="#b9a685"/>
<rect x="999.5" y="333.4" width="7" height="12" fill="#dededa" rx="1"/>
<rect x="999.8" y="336.3" width="6.4" height="6.2" fill="#b0a084"/>
<rect x="745.3" y="346.9" width="10" height="6" fill="#dededa" rx="1"/>
<rect x="747.7" y="347.2" width="5.2" height="5.4" fill="#3a3a38"/>
<rect x="754.8" y="346.2" width="15" height="9" fill="#dededa" rx="1"/>
<rect x="758.4" y="346.5" width="7.8" height="8.4" fill="#b0a084"/>
<rect x="768.5" y="343.9" width="6" height="10" fill="#dededa" rx="1"/>
<rect x="768.8" y="346.3" width="5.4" height="5.2" fill="#c9c7c0"/>
<rect x="793.5" y="346.4" width="6" height="10" fill="#dededa" rx="1"/>
<rect x="793.8" y="348.8" width="5.4" height="5.2" fill="#b8aa8a"/>
<rect x="802.9" y="343.5" width="6" height="10" fill="#dededa" rx="1"/>
<rect x="803.2" y="345.9" width="5.4" height="5.2" fill="#b8aa8a"/>
<rect x="814.6" y="348" width="10" height="6" fill="#dededa" rx="1"/>
<rect x="817" y="348.3" width="5.2" height="5.4" fill="#a89c80"/>
<rect x="826.7" y="346" width="5" height="8.5" fill="#dededa" rx="1"/>
<rect x="827" y="348" width="4.4" height="4.4" fill="#b8aa8a"/>
<rect x="895" y="342.6" width="9" height="15" fill="#dededa" rx="1"/>
<rect x="895.3" y="346.2" width="8.4" height="7.8" fill="#b0a084"/>
<rect x="917.6" y="342.6" width="7" height="12" fill="#dededa" rx="1"/>
<rect x="917.9" y="345.5" width="6.4" height="6.2" fill="#b9a685"/>
<rect x="932.5" y="346.1" width="4.5" height="7.5" fill="#dededa" rx="1"/>
<rect x="932.8" y="347.9" width="3.9" height="3.9" fill="#a89c80"/>
<rect x="985.2" y="345.7" width="10" height="6" fill="#dededa" rx="1"/>
<rect x="987.6" y="346" width="5.2" height="5.4" fill="#b0a084"/>
<rect x="733.6" y="359" width="10" height="6" fill="#dededa" rx="1"/>
<rect x="736" y="359.3" width="5.2" height="5.4" fill="#b8aa8a"/>
<rect x="754.9" y="356.7" width="15" height="9" fill="#dededa" rx="1"/>
<rect x="758.5" y="357" width="7.8" height="8.4" fill="#a89c80"/>
<rect x="768" y="359" width="8.5" height="5" fill="#dededa" rx="1"/>
<rect x="770.1" y="359.3" width="4.4" height="4.4" fill="#3a3a38"/>
<rect x="780.9" y="357.8" width="7.5" height="4.5" fill="#dededa" rx="1"/>
<rect x="782.7" y="358.1" width="3.9" height="3.9" fill="#b9a685"/>
<rect x="789.6" y="357.4" width="12" height="7" fill="#dededa" rx="1"/>
<rect x="792.4" y="357.7" width="6.2" height="6.4" fill="#a89c80"/>
<rect x="813.5" y="357.6" width="8.5" height="5" fill="#dededa" rx="1"/>
<rect x="815.6" y="357.9" width="4.4" height="4.4" fill="#b8aa8a"/>
<rect x="873.7" y="354.8" width="7" height="12" fill="#dededa" rx="1"/>
<rect x="874" y="357.7" width="6.4" height="6.2" fill="#c2b492"/>
<rect x="884.3" y="357.7" width="8.5" height="5" fill="#dededa" rx="1"/>
<rect x="886.4" y="358" width="4.4" height="4.4" fill="#b9a685"/>
<rect x="896.7" y="358.5" width="5" height="8.5" fill="#dededa" rx="1"/>
<rect x="897" y="360.6" width="4.4" height="4.4" fill="#b9a685"/>
<rect x="904.7" y="357.3" width="10" height="6" fill="#dededa" rx="1"/>
<rect x="907.1" y="357.6" width="5.2" height="5.4" fill="#b8aa8a"/>
<rect x="917.2" y="358.4" width="8.5" height="5" fill="#dededa" rx="1"/>
<rect x="919.2" y="358.7" width="4.4" height="4.4" fill="#c9c7c0"/>
<rect x="929" y="355" width="7" height="12" fill="#dededa" rx="1"/>
<rect x="929.3" y="357.9" width="6.4" height="6.2" fill="#b9a685"/>
<rect x="988.2" y="360.4" width="8.5" height="5" fill="#dededa" rx="1"/>
<rect x="990.3" y="360.7" width="4.4" height="4.4" fill="#b0a084"/>
<rect x="997.6" y="357.8" width="12" height="7" fill="#dededa" rx="1"/>
<rect x="1000.5" y="358.1" width="6.2" height="6.4" fill="#4a4842"/>
<rect x="744.6" y="369.7" width="8.5" height="5" fill="#dededa" rx="1"/>
<rect x="746.6" y="370" width="4.4" height="4.4" fill="#b8aa8a"/>
<rect x="758.3" y="368" width="5" height="8.5" fill="#dededa" rx="1"/>
<rect x="758.6" y="370.1" width="4.4" height="4.4" fill="#3a3a38"/>
<rect x="769.6" y="369.9" width="8.5" height="5" fill="#dededa" rx="1"/>
<rect x="771.7" y="370.2" width="4.4" height="4.4" fill="#3a3a38"/>
<rect x="778.9" y="370" width="10" height="6" fill="#dededa" rx="1"/>
<rect x="781.3" y="370.3" width="5.2" height="5.4" fill="#b9a685"/>
<rect x="792.7" y="369.7" width="7.5" height="4.5" fill="#dededa" rx="1"/>
<rect x="794.5" y="370" width="3.9" height="3.9" fill="#b9a685"/>
<rect x="805.1" y="368" width="4.5" height="7.5" fill="#dededa" rx="1"/>
<rect x="805.4" y="369.8" width="3.9" height="3.9" fill="#b8aa8a"/>
<rect x="814.6" y="366.6" width="9" height="15" fill="#dededa" rx="1"/>
<rect x="814.9" y="370.2" width="8.4" height="7.8" fill="#c9c7c0"/>
<rect x="827.2" y="367.4" width="7" height="12" fill="#dededa" rx="1"/>
<rect x="827.5" y="370.3" width="6.4" height="6.2" fill="#4a4842"/>
<rect x="931.2" y="367.1" width="6" height="10" fill="#dededa" rx="1"/>
<rect x="931.5" y="369.5" width="5.4" height="5.2" fill="#c9c7c0"/>
<rect x="982.9" y="368.5" width="15" height="9" fill="#dededa" rx="1"/>
<rect x="986.5" y="368.8" width="7.8" height="8.4" fill="#b0a084"/>
<rect x="746" y="378.4" width="9" height="15" fill="#dededa" rx="1"/>
<rect x="746.3" y="382" width="8.4" height="7.8" fill="#4a4842"/>
<rect x="758.6" y="381.4" width="7.5" height="4.5" fill="#dededa" rx="1"/>
<rect x="760.4" y="381.7" width="3.9" height="3.9" fill="#c2b492"/>
<rect x="781.5" y="378.5" width="7" height="12" fill="#dededa" rx="1"/>
<rect x="781.8" y="381.4" width="6.4" height="6.2" fill="#a89c80"/>
<rect x="791.6" y="381.2" width="10" height="6" fill="#dededa" rx="1"/>
<rect x="794" y="381.5" width="5.2" height="5.4" fill="#c9c7c0"/>
<rect x="799.2" y="380.7" width="15" height="9" fill="#dededa" rx="1"/>
<rect x="802.8" y="381" width="7.8" height="8.4" fill="#3a3a38"/>
<rect x="815.5" y="379.7" width="5" height="8.5" fill="#dededa" rx="1"/>
<rect x="815.8" y="381.8" width="4.4" height="4.4" fill="#b0a084"/>
<rect x="835.8" y="382.7" width="8.5" height="5" fill="#dededa" rx="1"/>
<rect x="837.8" y="383" width="4.4" height="4.4" fill="#4a4842"/>
<rect x="849.6" y="375.7" width="9" height="15" fill="#dededa" rx="1"/>
<rect x="849.9" y="379.3" width="8.4" height="7.8" fill="#b9a685"/>
<rect x="860.2" y="380" width="6" height="10" fill="#dededa" rx="1"/>
<rect x="860.5" y="382.4" width="5.4" height="5.2" fill="#a89c80"/>
<rect x="932.6" y="380.5" width="4.5" height="7.5" fill="#dededa" rx="1"/>
<rect x="932.9" y="382.3" width="3.9" height="3.9" fill="#c2b492"/>
<rect x="974" y="382" width="8.5" height="5" fill="#dededa" rx="1"/>
<rect x="976" y="382.3" width="4.4" height="4.4" fill="#a89c80"/>
<rect x="983" y="380.8" width="15" height="9" fill="#dededa" rx="1"/>
<rect x="986.6" y="381.1" width="7.8" height="8.4" fill="#a89c80"/>
<rect x="997.3" y="382.2" width="8.5" height="5" fill="#dededa" rx="1"/>
<rect x="999.3" y="382.5" width="4.4" height="4.4" fill="#c2b492"/>
<rect x="754.6" y="392" width="12" height="7" fill="#dededa" rx="1"/>
<rect x="757.5" y="392.3" width="6.2" height="6.4" fill="#3a3a38"/>
<rect x="770" y="392.1" width="5" height="8.5" fill="#dededa" rx="1"/>
<rect x="770.3" y="394.2" width="4.4" height="4.4" fill="#b0a084"/>
<rect x="775.7" y="391.2" width="15" height="9" fill="#dededa" rx="1"/>
<rect x="779.3" y="391.5" width="7.8" height="8.4" fill="#c2b492"/>
<rect x="812.8" y="394.1" width="8.5" height="5" fill="#dededa" rx="1"/>
<rect x="814.9" y="394.4" width="4.4" height="4.4" fill="#c9c7c0"/>
<rect x="827.2" y="393" width="5" height="8.5" fill="#dededa" rx="1"/>
<rect x="827.5" y="395.1" width="4.4" height="4.4" fill="#c9c7c0"/>
<rect x="849.6" y="391.2" width="4.5" height="7.5" fill="#dededa" rx="1"/>
<rect x="849.9" y="393" width="3.9" height="3.9" fill="#b0a084"/>
<rect x="932.5" y="391.1" width="5" height="8.5" fill="#dededa" rx="1"/>
<rect x="932.8" y="393.1" width="4.4" height="4.4" fill="#a89c80"/>
<rect x="974" y="392.8" width="10" height="6" fill="#dededa" rx="1"/>
<rect x="976.4" y="393.1" width="5.2" height="5.4" fill="#b9a685"/>
<rect x="986.7" y="393" width="10" height="6" fill="#dededa" rx="1"/>
<rect x="989.1" y="393.3" width="5.2" height="5.4" fill="#a89c80"/>
<rect x="998.5" y="392.2" width="10" height="6" fill="#dededa" rx="1"/>
<rect x="1000.9" y="392.5" width="5.2" height="5.4" fill="#c2b492"/>
<rect x="755.3" y="405.3" width="12" height="7" fill="#dededa" rx="1"/>
<rect x="758.2" y="405.6" width="6.2" height="6.4" fill="#b8aa8a"/>
<rect x="768.6" y="399.1" width="9" height="15" fill="#dededa" rx="1"/>
<rect x="768.9" y="402.7" width="8.4" height="7.8" fill="#3a3a38"/>
<rect x="781.2" y="406.3" width="8.5" height="5" fill="#dededa" rx="1"/>
<rect x="783.3" y="406.6" width="4.4" height="4.4" fill="#c9c7c0"/>
<rect x="793.5" y="402.9" width="5" height="8.5" fill="#dededa" rx="1"/>
<rect x="793.8" y="404.9" width="4.4" height="4.4" fill="#c9c7c0"/>
<rect x="801.3" y="404.3" width="8.5" height="5" fill="#dededa" rx="1"/>
<rect x="803.3" y="404.6" width="4.4" height="4.4" fill="#b0a084"/>
<rect x="816.8" y="402.9" width="5" height="8.5" fill="#dededa" rx="1"/>
<rect x="817.1" y="404.9" width="4.4" height="4.4" fill="#4a4842"/>
<rect x="828.4" y="402.8" width="4.5" height="7.5" fill="#dededa" rx="1"/>
<rect x="828.7" y="404.6" width="3.9" height="3.9" fill="#a89c80"/>
<rect x="837.2" y="404.4" width="10" height="6" fill="#dededa" rx="1"/>
<rect x="839.6" y="404.7" width="5.2" height="5.4" fill="#4a4842"/>
<rect x="845.6" y="402.7" width="12" height="7" fill="#dededa" rx="1"/>
<rect x="848.5" y="403" width="6.2" height="6.4" fill="#b0a084"/>
<rect x="986.5" y="401.3" width="7" height="12" fill="#dededa" rx="1"/>
<rect x="986.8" y="404.2" width="6.4" height="6.2" fill="#c2b492"/>
<rect x="998.6" y="402.3" width="6" height="10" fill="#dededa" rx="1"/>
<rect x="998.9" y="404.7" width="5.4" height="5.2" fill="#b8aa8a"/>
<rect x="732.8" y="416.4" width="10" height="6" fill="#dededa" rx="1"/>
<rect x="735.2" y="416.7" width="5.2" height="5.4" fill="#b0a084"/>
<rect x="744.6" y="415.8" width="8.5" height="5" fill="#dededa" rx="1"/>
<rect x="746.7" y="416.1" width="4.4" height="4.4" fill="#c2b492"/>
<rect x="755.2" y="415.2" width="10" height="6" fill="#dededa" rx="1"/>
<rect x="757.6" y="415.5" width="5.2" height="5.4" fill="#a89c80"/>
<rect x="769.9" y="416.7" width="4.5" height="7.5" fill="#dededa" rx="1"/>
<rect x="770.2" y="418.5" width="3.9" height="3.9" fill="#b0a084"/>
<rect x="781" y="410.3" width="9" height="15" fill="#dededa" rx="1"/>
<rect x="781.3" y="413.9" width="8.4" height="7.8" fill="#a89c80"/>
<rect x="814.9" y="412.9" width="6" height="10" fill="#dededa" rx="1"/>
<rect x="815.2" y="415.3" width="5.4" height="5.2" fill="#a89c80"/>
<rect x="840.1" y="414.6" width="5" height="8.5" fill="#dededa" rx="1"/>
<rect x="840.4" y="416.6" width="4.4" height="4.4" fill="#b9a685"/>
<rect x="848.3" y="416.4" width="10" height="6" fill="#dededa" rx="1"/>
<rect x="850.7" y="416.7" width="5.2" height="5.4" fill="#3a3a38"/>
<rect x="861.4" y="414.5" width="4.5" height="7.5" fill="#dededa" rx="1"/>
<rect x="861.7" y="416.3" width="3.9" height="3.9" fill="#a89c80"/>
<rect x="929" y="415.8" width="8.5" height="5" fill="#dededa" rx="1"/>
<rect x="931" y="416.1" width="4.4" height="4.4" fill="#b9a685"/>
<rect x="937.7" y="414.1" width="15" height="9" fill="#dededa" rx="1"/>
<rect x="941.3" y="414.4" width="7.8" height="8.4" fill="#3a3a38"/>
<rect x="950.2" y="415.2" width="12" height="7" fill="#dededa" rx="1"/>
<rect x="953.1" y="415.5" width="6.2" height="6.4" fill="#b8aa8a"/>
<rect x="964.7" y="416.2" width="8.5" height="5" fill="#dededa" rx="1"/>
<rect x="966.8" y="416.5" width="4.4" height="4.4" fill="#b8aa8a"/>
<rect x="975.7" y="413.7" width="5" height="8.5" fill="#dededa" rx="1"/>
<rect x="976" y="415.7" width="4.4" height="4.4" fill="#b0a084"/>
<rect x="987.3" y="416.7" width="10" height="6" fill="#dededa" rx="1"/>
<rect x="989.7" y="417" width="5.2" height="5.4" fill="#c2b492"/>
<rect x="994" y="413.2" width="15" height="9" fill="#dededa" rx="1"/>
<rect x="997.6" y="413.5" width="7.8" height="8.4" fill="#a89c80"/>
<rect x="731.5" y="424.6" width="15" height="9" fill="#dededa" rx="1"/>
<rect x="735.1" y="424.9" width="7.8" height="8.4" fill="#4a4842"/>
<rect x="747.1" y="426.1" width="6" height="10" fill="#dededa" rx="1"/>
<rect x="747.4" y="428.5" width="5.4" height="5.2" fill="#a89c80"/>
<rect x="753.8" y="425.1" width="15" height="9" fill="#dededa" rx="1"/>
<rect x="757.4" y="425.4" width="7.8" height="8.4" fill="#a89c80"/>
<rect x="769.6" y="427" width="8.5" height="5" fill="#dededa" rx="1"/>
<rect x="771.6" y="427.3" width="4.4" height="4.4" fill="#a89c80"/>
<rect x="803.2" y="428.5" width="10" height="6" fill="#dededa" rx="1"/>
<rect x="805.6" y="428.8" width="5.2" height="5.4" fill="#3a3a38"/>
<rect x="815.8" y="425.7" width="6" height="10" fill="#dededa" rx="1"/>
<rect x="816.1" y="428.1" width="5.4" height="5.2" fill="#4a4842"/>
<rect x="825" y="427.7" width="8.5" height="5" fill="#dededa" rx="1"/>
<rect x="827" y="428" width="4.4" height="4.4" fill="#c9c7c0"/>
<rect x="832.5" y="427.5" width="15" height="9" fill="#dededa" rx="1"/>
<rect x="836.1" y="427.8" width="7.8" height="8.4" fill="#c9c7c0"/>
<rect x="931.1" y="424.3" width="6" height="10" fill="#dededa" rx="1"/>
<rect x="931.4" y="426.7" width="5.4" height="5.2" fill="#c9c7c0"/>
<rect x="942.9" y="426.4" width="6" height="10" fill="#dededa" rx="1"/>
<rect x="943.2" y="428.8" width="5.4" height="5.2" fill="#a89c80"/>
<rect x="951.1" y="428.3" width="10" height="6" fill="#dededa" rx="1"/>
<rect x="953.5" y="428.6" width="5.2" height="5.4" fill="#c2b492"/>
<rect x="971.3" y="427.4" width="15" height="9" fill="#dededa" rx="1"/>
<rect x="974.9" y="427.7" width="7.8" height="8.4" fill="#c2b492"/>
<rect x="985.2" y="427.1" width="10" height="6" fill="#dededa" rx="1"/>
<rect x="987.6" y="427.4" width="5.2" height="5.4" fill="#b8aa8a"/>
<rect x="994.3" y="425.5" width="15" height="9" fill="#dededa" rx="1"/>
<rect x="997.9" y="425.8" width="7.8" height="8.4" fill="#c2b492"/>
<rect x="743.6" y="439.1" width="12" height="7" fill="#dededa" rx="1"/>
<rect x="746.4" y="439.4" width="6.2" height="6.4" fill="#4a4842"/>
<rect x="758.1" y="437.4" width="5" height="8.5" fill="#dededa" rx="1"/>
<rect x="758.4" y="439.4" width="4.4" height="4.4" fill="#3a3a38"/>
<rect x="769" y="437.4" width="4.5" height="7.5" fill="#dededa" rx="1"/>
<rect x="769.3" y="439.2" width="3.9" height="3.9" fill="#b9a685"/>
<rect x="781.5" y="437.2" width="5" height="8.5" fill="#dededa" rx="1"/>
<rect x="781.8" y="439.2" width="4.4" height="4.4" fill="#3a3a38"/>
<rect x="793.7" y="436.9" width="5" height="8.5" fill="#dededa" rx="1"/>
<rect x="794" y="439" width="4.4" height="4.4" fill="#4a4842"/>
<rect x="799.1" y="436.1" width="15" height="9" fill="#dededa" rx="1"/>
<rect x="802.7" y="436.4" width="7.8" height="8.4" fill="#b9a685"/>
<rect x="813.5" y="435.6" width="7" height="12" fill="#dededa" rx="1"/>
<rect x="813.8" y="438.4" width="6.4" height="6.2" fill="#a89c80"/>
<rect x="826.9" y="436.7" width="5" height="8.5" fill="#dededa" rx="1"/>
<rect x="827.2" y="438.7" width="4.4" height="4.4" fill="#c9c7c0"/>
<rect x="835" y="439.9" width="10" height="6" fill="#dededa" rx="1"/>
<rect x="837.4" y="440.2" width="5.2" height="5.4" fill="#b0a084"/>
<rect x="847.7" y="440" width="8.5" height="5" fill="#dededa" rx="1"/>
<rect x="849.7" y="440.3" width="4.4" height="4.4" fill="#c2b492"/>
<rect x="874.7" y="439.4" width="4.5" height="7.5" fill="#dededa" rx="1"/>
<rect x="875" y="441.2" width="3.9" height="3.9" fill="#c9c7c0"/>
<rect x="884.6" y="437" width="6" height="10" fill="#dededa" rx="1"/>
<rect x="884.9" y="439.4" width="5.4" height="5.2" fill="#b9a685"/>
<rect x="892.6" y="438.1" width="10" height="6" fill="#dededa" rx="1"/>
<rect x="895" y="438.4" width="5.2" height="5.4" fill="#b0a084"/>
<rect x="905.7" y="440.3" width="10" height="6" fill="#dededa" rx="1"/>
<rect x="908.1" y="440.6" width="5.2" height="5.4" fill="#4a4842"/>
<rect x="929.4" y="435.4" width="7" height="12" fill="#dededa" rx="1"/>
<rect x="929.7" y="438.3" width="6.4" height="6.2" fill="#c9c7c0"/>
<rect x="940.5" y="438" width="6" height="10" fill="#dededa" rx="1"/>
<rect x="940.8" y="440.4" width="5.4" height="5.2" fill="#b0a084"/>
<rect x="950.4" y="437.7" width="12" height="7" fill="#dededa" rx="1"/>
<rect x="953.2" y="438" width="6.2" height="6.4" fill="#b9a685"/>
<rect x="964.9" y="440.8" width="8.5" height="5" fill="#dededa" rx="1"/>
<rect x="967" y="441.1" width="4.4" height="4.4" fill="#b9a685"/>
<rect x="977.2" y="437.6" width="5" height="8.5" fill="#dededa" rx="1"/>
<rect x="977.5" y="439.6" width="4.4" height="4.4" fill="#c2b492"/>
<rect x="988.8" y="437.2" width="7" height="12" fill="#dededa" rx="1"/>
<rect x="989.1" y="440.1" width="6.4" height="6.2" fill="#b9a685"/>
<rect x="1000.7" y="438" width="6" height="10" fill="#dededa" rx="1"/>
<rect x="1001" y="440.4" width="5.4" height="5.2" fill="#3a3a38"/>
<rect x="746.3" y="451.7" width="7.5" height="4.5" fill="#dededa" rx="1"/>
<rect x="748.1" y="452" width="3.9" height="3.9" fill="#b9a685"/>
<rect x="770.7" y="449.5" width="5" height="8.5" fill="#dededa" rx="1"/>
<rect x="771" y="451.5" width="4.4" height="4.4" fill="#4a4842"/>
<rect x="777.7" y="451.7" width="10" height="6" fill="#dededa" rx="1"/>
<rect x="780.1" y="452" width="5.2" height="5.4" fill="#b0a084"/>
<rect x="793.8" y="448" width="6" height="10" fill="#dededa" rx="1"/>
<rect x="794.1" y="450.4" width="5.4" height="5.2" fill="#b9a685"/>
<rect x="802.6" y="450.9" width="10" height="6" fill="#dededa" rx="1"/>
<rect x="805" y="451.2" width="5.2" height="5.4" fill="#b9a685"/>
<rect x="816.3" y="448.8" width="5" height="8.5" fill="#dededa" rx="1"/>
<rect x="816.6" y="450.9" width="4.4" height="4.4" fill="#b0a084"/>
<rect x="837.1" y="450.2" width="10" height="6" fill="#dededa" rx="1"/>
<rect x="839.5" y="450.5" width="5.2" height="5.4" fill="#b0a084"/>
<rect x="851.8" y="450.5" width="5" height="8.5" fill="#dededa" rx="1"/>
<rect x="852.1" y="452.5" width="4.4" height="4.4" fill="#c2b492"/>
<rect x="858.4" y="451.4" width="10" height="6" fill="#dededa" rx="1"/>
<rect x="860.8" y="451.7" width="5.2" height="5.4" fill="#3a3a38"/>
<rect x="871" y="450.6" width="8.5" height="5" fill="#dededa" rx="1"/>
<rect x="873.1" y="450.9" width="4.4" height="4.4" fill="#3a3a38"/>
<rect x="896.8" y="449.2" width="5" height="8.5" fill="#dededa" rx="1"/>
<rect x="897.1" y="451.2" width="4.4" height="4.4" fill="#b9a685"/>
<rect x="903.1" y="450.1" width="12" height="7" fill="#dededa" rx="1"/>
<rect x="906" y="450.4" width="6.2" height="6.4" fill="#b9a685"/>
<rect x="917.6" y="448.6" width="7" height="12" fill="#dededa" rx="1"/>
<rect x="917.9" y="451.5" width="6.4" height="6.2" fill="#c2b492"/>
<rect x="929.5" y="448.4" width="5" height="8.5" fill="#dededa" rx="1"/>
<rect x="929.8" y="450.4" width="4.4" height="4.4" fill="#b9a685"/>
<rect x="942.5" y="449.2" width="5" height="8.5" fill="#dededa" rx="1"/>
<rect x="942.8" y="451.3" width="4.4" height="4.4" fill="#c9c7c0"/>
<rect x="955.6" y="449.8" width="4.5" height="7.5" fill="#dededa" rx="1"/>
<rect x="955.9" y="451.6" width="3.9" height="3.9" fill="#c2b492"/>
<rect x="985.7" y="452.3" width="8.5" height="5" fill="#dededa" rx="1"/>
<rect x="987.8" y="452.6" width="4.4" height="4.4" fill="#b0a084"/>
<rect x="997.6" y="445.7" width="9" height="15" fill="#dededa" rx="1"/>
<rect x="997.9" y="449.3" width="8.4" height="7.8" fill="#b0a084"/>
<rect x="602.2" y="397.1" width="8.5" height="5" fill="#dededa" rx="1"/>
<rect x="604.2" y="397.4" width="4.4" height="4.4" fill="#b8aa8a"/>
<rect x="611.2" y="394.7" width="15" height="9" fill="#dededa" rx="1"/>
<rect x="614.8" y="395" width="7.8" height="8.4" fill="#b9a685"/>
<rect x="624.2" y="396.5" width="8.5" height="5" fill="#dededa" rx="1"/>
<rect x="626.3" y="396.8" width="4.4" height="4.4" fill="#3a3a38"/>
<rect x="636.6" y="398.6" width="7.5" height="4.5" fill="#dededa" rx="1"/>
<rect x="638.4" y="398.9" width="3.9" height="3.9" fill="#3a3a38"/>
<rect x="648.2" y="396.2" width="10" height="6" fill="#dededa" rx="1"/>
<rect x="650.6" y="396.5" width="5.2" height="5.4" fill="#b8aa8a"/>
<rect x="662.7" y="396.9" width="4.5" height="7.5" fill="#dededa" rx="1"/>
<rect x="663" y="398.7" width="3.9" height="3.9" fill="#b8aa8a"/>
<rect x="673.4" y="394.3" width="6" height="10" fill="#dededa" rx="1"/>
<rect x="673.7" y="396.7" width="5.4" height="5.2" fill="#b8aa8a"/>
<rect x="693.4" y="399" width="8.5" height="5" fill="#dededa" rx="1"/>
<rect x="695.4" y="399.3" width="4.4" height="4.4" fill="#c2b492"/>
<rect x="702.6" y="396.9" width="12" height="7" fill="#dededa" rx="1"/>
<rect x="705.5" y="397.2" width="6.2" height="6.4" fill="#4a4842"/>
<rect x="600.3" y="408.2" width="8.5" height="5" fill="#dededa" rx="1"/>
<rect x="602.3" y="408.5" width="4.4" height="4.4" fill="#4a4842"/>
<rect x="626.5" y="407.6" width="6" height="10" fill="#dededa" rx="1"/>
<rect x="626.8" y="410" width="5.4" height="5.2" fill="#a89c80"/>
<rect x="636.7" y="408.9" width="8.5" height="5" fill="#dededa" rx="1"/>
<rect x="638.7" y="409.2" width="4.4" height="4.4" fill="#b0a084"/>
<rect x="658.2" y="409.1" width="10" height="6" fill="#dededa" rx="1"/>
<rect x="660.6" y="409.4" width="5.2" height="5.4" fill="#4a4842"/>
<rect x="671.3" y="408.8" width="4.5" height="7.5" fill="#dededa" rx="1"/>
<rect x="671.6" y="410.6" width="3.9" height="3.9" fill="#b8aa8a"/>
<rect x="716.2" y="408.6" width="10" height="6" fill="#dededa" rx="1"/>
<rect x="718.6" y="408.9" width="5.2" height="5.4" fill="#b9a685"/>
<rect x="729" y="404.1" width="9" height="15" fill="#dededa" rx="1"/>
<rect x="729.3" y="407.7" width="8.4" height="7.8" fill="#c9c7c0"/>
<rect x="604.1" y="418.4" width="5" height="8.5" fill="#dededa" rx="1"/>
<rect x="604.4" y="420.5" width="4.4" height="4.4" fill="#3a3a38"/>
<rect x="610.8" y="419.1" width="12" height="7" fill="#dededa" rx="1"/>
<rect x="613.6" y="419.4" width="6.2" height="6.4" fill="#4a4842"/>
<rect x="635" y="419.7" width="12" height="7" fill="#dededa" rx="1"/>
<rect x="637.9" y="420" width="6.2" height="6.4" fill="#4a4842"/>
<rect x="655.2" y="419.4" width="15" height="9" fill="#dededa" rx="1"/>
<rect x="658.8" y="419.7" width="7.8" height="8.4" fill="#b8aa8a"/>
<rect x="670.8" y="420.9" width="10" height="6" fill="#dededa" rx="1"/>
<rect x="673.2" y="421.2" width="5.2" height="5.4" fill="#a89c80"/>
<rect x="716.9" y="419.2" width="10" height="6" fill="#dededa" rx="1"/>
<rect x="719.3" y="419.5" width="5.2" height="5.4" fill="#c2b492"/>
<rect x="601.7" y="432.9" width="8.5" height="5" fill="#dededa" rx="1"/>
<rect x="603.7" y="433.2" width="4.4" height="4.4" fill="#a89c80"/>
<rect x="614.7" y="430.7" width="4.5" height="7.5" fill="#dededa" rx="1"/>
<rect x="615" y="432.5" width="3.9" height="3.9" fill="#3a3a38"/>
<rect x="624.9" y="428.2" width="7" height="12" fill="#dededa" rx="1"/>
<rect x="625.2" y="431" width="6.4" height="6.2" fill="#3a3a38"/>
<rect x="649.5" y="428.9" width="7" height="12" fill="#dededa" rx="1"/>
<rect x="649.8" y="431.8" width="6.4" height="6.2" fill="#a89c80"/>
<rect x="671.3" y="428.3" width="6" height="10" fill="#dededa" rx="1"/>
<rect x="671.6" y="430.7" width="5.4" height="5.2" fill="#b8aa8a"/>
<rect x="600.7" y="437.4" width="9" height="15" fill="#dededa" rx="1"/>
<rect x="601" y="441" width="8.4" height="7.8" fill="#c9c7c0"/>
<rect x="608.9" y="441.5" width="15" height="9" fill="#dededa" rx="1"/>
<rect x="612.5" y="441.8" width="7.8" height="8.4" fill="#b9a685"/>
<rect x="624" y="439.1" width="9" height="15" fill="#dededa" rx="1"/>
<rect x="624.3" y="442.7" width="8.4" height="7.8" fill="#c9c7c0"/>
<rect x="634.3" y="443.9" width="12" height="7" fill="#dededa" rx="1"/>
<rect x="637.1" y="444.2" width="6.2" height="6.4" fill="#3a3a38"/>
<rect x="647.6" y="441.3" width="6" height="10" fill="#dededa" rx="1"/>
<rect x="647.9" y="443.7" width="5.4" height="5.2" fill="#3a3a38"/>
<rect x="670" y="443.8" width="10" height="6" fill="#dededa" rx="1"/>
<rect x="672.4" y="444.1" width="5.2" height="5.4" fill="#4a4842"/>
<rect x="604.4" y="452.7" width="5" height="8.5" fill="#dededa" rx="1"/>
<rect x="604.7" y="454.8" width="4.4" height="4.4" fill="#b8aa8a"/>
<rect x="611.9" y="454.9" width="12" height="7" fill="#dededa" rx="1"/>
<rect x="614.8" y="455.2" width="6.2" height="6.4" fill="#4a4842"/>
<rect x="603.5" y="381.3" width="6" height="10" fill="#dededa" rx="1"/>
<rect x="603.8" y="383.7" width="5.4" height="5.2" fill="#c9c7c0"/>
<rect x="636.9" y="384.2" width="10" height="6" fill="#dededa" rx="1"/>
<rect x="639.3" y="384.5" width="5.2" height="5.4" fill="#b9a685"/>
<rect x="650.3" y="385" width="8.5" height="5" fill="#dededa" rx="1"/>
<rect x="652.3" y="385.3" width="4.4" height="4.4" fill="#b0a084"/>
<rect x="596.8" y="456.4" width="7.5" height="4.5" fill="#dededa" rx="1"/>
<rect x="598.6" y="456.7" width="3.9" height="3.9" fill="#b8aa8a"/>
<rect x="619.5" y="454.8" width="4.5" height="7.5" fill="#dededa" rx="1"/>
<rect x="619.8" y="456.6" width="3.9" height="3.9" fill="#b0a084"/>
<rect x="600.2" y="464.2" width="4" height="6.5" fill="#dededa" rx="1"/>
<rect x="600.5" y="465.8" width="3.4" height="3.3" fill="#c2b492"/>
<rect x="617.6" y="462.9" width="4" height="6.5" fill="#dededa" rx="1"/>
<rect x="617.9" y="464.5" width="3.4" height="3.3" fill="#b0a084"/>
<rect x="598.9" y="473.1" width="5" height="8.5" fill="#dededa" rx="1"/>
<rect x="599.2" y="475.1" width="4.4" height="4.4" fill="#3a3a38"/>
<rect x="608.5" y="474.8" width="6.5" height="4" fill="#dededa" rx="1"/>
<rect x="610.1" y="475.1" width="3.3" height="3.4" fill="#b0a084"/>
<rect x="617.2" y="474.9" width="8.5" height="5" fill="#dededa" rx="1"/>
<rect x="619.2" y="475.2" width="4.4" height="4.4" fill="#c9c7c0"/>
<rect x="609.5" y="482.1" width="4.5" height="7.5" fill="#dededa" rx="1"/>
<rect x="609.8" y="483.9" width="3.9" height="3.9" fill="#3a3a38"/>
<rect x="598" y="490.7" width="5" height="8.5" fill="#dededa" rx="1"/>
<rect x="598.3" y="492.7" width="4.4" height="4.4" fill="#a89c80"/>
<rect x="609.8" y="492.6" width="4.5" height="7.5" fill="#dededa" rx="1"/>
<rect x="610.1" y="494.4" width="3.9" height="3.9" fill="#c2b492"/>
<rect x="618.2" y="491.6" width="4.5" height="7.5" fill="#dededa" rx="1"/>
<rect x="618.5" y="493.4" width="3.9" height="3.9" fill="#b9a685"/>
<rect x="597.7" y="504.7" width="6.5" height="4" fill="#dededa" rx="1"/>
<rect x="599.3" y="505" width="3.3" height="3.4" fill="#d0d0cc"/>
<rect x="610.5" y="501.3" width="4.5" height="7.5" fill="#dededa" rx="1"/>
<rect x="610.8" y="503.1" width="3.9" height="3.9" fill="#c9c7c0"/>
<rect x="616.4" y="504" width="7.5" height="4.5" fill="#dededa" rx="1"/>
<rect x="618.2" y="504.3" width="3.9" height="3.9" fill="#b9a685"/>
<rect x="599.4" y="509.9" width="5" height="8.5" fill="#dededa" rx="1"/>
<rect x="599.7" y="511.9" width="4.4" height="4.4" fill="#b9a685"/>
<rect x="608.9" y="509.5" width="5" height="8.5" fill="#dededa" rx="1"/>
<rect x="609.2" y="511.6" width="4.4" height="4.4" fill="#a89c80"/>
<rect x="617.8" y="512.3" width="6.5" height="4" fill="#dededa" rx="1"/>
<rect x="619.4" y="512.6" width="3.3" height="3.4" fill="#d0d0cc"/>
<rect x="598.8" y="519.8" width="4.5" height="7.5" fill="#dededa" rx="1"/>
<rect x="599.1" y="521.6" width="3.9" height="3.9" fill="#c2b492"/>
<rect x="609.7" y="521" width="4" height="6.5" fill="#dededa" rx="1"/>
<rect x="610" y="522.6" width="3.4" height="3.3" fill="#a89c80"/>
<rect x="597" y="531.2" width="7.5" height="4.5" fill="#dededa" rx="1"/>
<rect x="598.8" y="531.5" width="3.9" height="3.9" fill="#d0d0cc"/>
<rect x="607" y="531.1" width="6.5" height="4" fill="#dededa" rx="1"/>
<rect x="608.6" y="531.4" width="3.3" height="3.4" fill="#a89c80"/>
<rect x="615.9" y="540.4" width="7.5" height="4.5" fill="#dededa" rx="1"/>
<rect x="617.7" y="540.7" width="3.9" height="3.9" fill="#b9a685"/>
<rect x="597.9" y="551.6" width="8.5" height="5" fill="#dededa" rx="1"/>
<rect x="600" y="551.9" width="4.4" height="4.4" fill="#b0a084"/>
<rect x="618.5" y="551.4" width="7.5" height="4.5" fill="#dededa" rx="1"/>
<rect x="620.3" y="551.7" width="3.9" height="3.9" fill="#a89c80"/>
<rect x="599.1" y="560.5" width="8.5" height="5" fill="#dededa" rx="1"/>
<rect x="601.2" y="560.8" width="4.4" height="4.4" fill="#b8aa8a"/>
<rect x="607" y="560.9" width="7.5" height="4.5" fill="#dededa" rx="1"/>
<rect x="608.8" y="561.2" width="3.9" height="3.9" fill="#c2b492"/>
<rect x="738.9" y="454.9" width="10" height="6" fill="#dededa" rx="1"/>
<rect x="741.3" y="455.2" width="5.2" height="5.4" fill="#b8aa8a"/>
<rect x="741.4" y="466" width="10" height="6" fill="#dededa" rx="1"/>
<rect x="743.8" y="466.3" width="5.2" height="5.4" fill="#3a3a38"/>
<rect x="750.7" y="465.2" width="10" height="6" fill="#dededa" rx="1"/>
<rect x="753.1" y="465.5" width="5.2" height="5.4" fill="#b8aa8a"/>
<rect x="752.8" y="474.9" width="9" height="15" fill="#dededa" rx="1"/>
<rect x="753.1" y="478.5" width="8.4" height="7.8" fill="#a89c80"/>
<rect x="752.6" y="488" width="5" height="8.5" fill="#dededa" rx="1"/>
<rect x="752.9" y="490" width="4.4" height="4.4" fill="#b8aa8a"/>
<rect x="705.9" y="500.8" width="7.5" height="4.5" fill="#dededa" rx="1"/>
<rect x="707.7" y="501.1" width="3.9" height="3.9" fill="#b0a084"/>
<rect x="752.4" y="499.5" width="6" height="10" fill="#dededa" rx="1"/>
<rect x="752.7" y="501.9" width="5.4" height="5.2" fill="#c2b492"/>
<rect x="754.2" y="512.3" width="5" height="8.5" fill="#dededa" rx="1"/>
<rect x="754.5" y="514.4" width="4.4" height="4.4" fill="#c9c7c0"/>
<rect x="707.6" y="522" width="5" height="8.5" fill="#dededa" rx="1"/>
<rect x="707.9" y="524" width="4.4" height="4.4" fill="#3a3a38"/>
<rect x="752.8" y="524.8" width="7.5" height="4.5" fill="#dededa" rx="1"/>
<rect x="754.6" y="525.1" width="3.9" height="3.9" fill="#a89c80"/>
<rect x="659.5" y="534.2" width="8.5" height="5" fill="#dededa" rx="1"/>
<rect x="661.6" y="534.5" width="4.4" height="4.4" fill="#c9c7c0"/>
<rect x="682.6" y="532.1" width="4.5" height="7.5" fill="#dededa" rx="1"/>
<rect x="682.9" y="533.9" width="3.9" height="3.9" fill="#c2b492"/>
<rect x="717.2" y="531.7" width="6" height="10" fill="#dededa" rx="1"/>
<rect x="717.5" y="534.1" width="5.4" height="5.2" fill="#b9a685"/>
<rect x="739" y="534.8" width="7.5" height="4.5" fill="#dededa" rx="1"/>
<rect x="740.8" y="535.1" width="3.9" height="3.9" fill="#b9a685"/>
<rect x="751.5" y="531" width="5" height="8.5" fill="#dededa" rx="1"/>
<rect x="751.8" y="533" width="4.4" height="4.4" fill="#3a3a38"/>
<rect x="646.8" y="546.4" width="8.5" height="5" fill="#dededa" rx="1"/>
<rect x="648.8" y="546.7" width="4.4" height="4.4" fill="#4a4842"/>
<rect x="717.4" y="541.8" width="6" height="10" fill="#dededa" rx="1"/>
<rect x="717.7" y="544.2" width="5.4" height="5.2" fill="#b9a685"/>
<rect x="723.3" y="543.1" width="15" height="9" fill="#dededa" rx="1"/>
<rect x="726.9" y="543.4" width="7.8" height="8.4" fill="#b9a685"/>
<rect x="736.4" y="544.4" width="12" height="7" fill="#dededa" rx="1"/>
<rect x="739.3" y="544.7" width="6.2" height="6.4" fill="#c2b492"/>
<rect x="747.3" y="544.3" width="15" height="9" fill="#dededa" rx="1"/>
<rect x="750.9" y="544.6" width="7.8" height="8.4" fill="#b8aa8a"/>
<rect x="647.3" y="554.7" width="6" height="10" fill="#dededa" rx="1"/>
<rect x="647.6" y="557.1" width="5.4" height="5.2" fill="#c9c7c0"/>
<rect x="714.3" y="557.1" width="10" height="6" fill="#dededa" rx="1"/>
<rect x="716.7" y="557.4" width="5.2" height="5.4" fill="#b9a685"/>
<rect x="725.7" y="552.6" width="9" height="15" fill="#dededa" rx="1"/>
<rect x="726" y="556.2" width="8.4" height="7.8" fill="#4a4842"/>
<rect x="752.3" y="554.1" width="6" height="10" fill="#dededa" rx="1"/>
<rect x="752.6" y="556.5" width="5.4" height="5.2" fill="#b8aa8a"/>
<rect x="625.5" y="564.4" width="6" height="10" fill="#dededa" rx="1"/>
<rect x="625.8" y="566.8" width="5.4" height="5.2" fill="#c2b492"/>
<rect x="649.2" y="567" width="5" height="8.5" fill="#dededa" rx="1"/>
<rect x="649.5" y="569" width="4.4" height="4.4" fill="#c2b492"/>
<rect x="658.1" y="568.7" width="10" height="6" fill="#dededa" rx="1"/>
<rect x="660.5" y="569" width="5.2" height="5.4" fill="#b0a084"/>
<rect x="695.8" y="566.1" width="4.5" height="7.5" fill="#dededa" rx="1"/>
<rect x="696.1" y="567.9" width="3.9" height="3.9" fill="#4a4842"/>
<rect x="715.1" y="567.6" width="8.5" height="5" fill="#dededa" rx="1"/>
<rect x="717.2" y="567.9" width="4.4" height="4.4" fill="#4a4842"/>
<rect x="722.5" y="566.7" width="15" height="9" fill="#dededa" rx="1"/>
<rect x="726.1" y="567" width="7.8" height="8.4" fill="#c2b492"/>
<rect x="738.7" y="567.2" width="7.5" height="4.5" fill="#dededa" rx="1"/>
<rect x="740.5" y="567.5" width="3.9" height="3.9" fill="#a89c80"/>
<rect x="753.3" y="565.7" width="5" height="8.5" fill="#dededa" rx="1"/>
<rect x="753.6" y="567.8" width="4.4" height="4.4" fill="#a89c80"/>
<rect x="768.5" y="535.5" width="6.5" height="3.5" fill="#dededa" rx="1"/>
<rect x="770.1" y="535.8" width="3.3" height="2.9" fill="#9c9484"/>
<rect x="778" y="533.8" width="4" height="7" fill="#dededa" rx="1"/>
<rect x="778.3" y="535.4" width="3.4" height="3.6" fill="#d4d4d0"/>
<rect x="784.6" y="534.6" width="7" height="4" fill="#dededa" rx="1"/>
<rect x="786.2" y="534.9" width="3.6" height="3.4" fill="#b7a78a"/>
<rect x="791.6" y="534.8" width="8" height="5" fill="#dededa" rx="1"/>
<rect x="793.5" y="535.1" width="4.2" height="4.4" fill="#c8c4b8"/>
<rect x="801.1" y="531.7" width="5" height="8" fill="#dededa" rx="1"/>
<rect x="801.4" y="533.6" width="4.4" height="4.2" fill="#c8c4b8"/>
<rect x="823.8" y="533.9" width="8" height="5" fill="#dededa" rx="1"/>
<rect x="825.7" y="534.2" width="4.2" height="4.4" fill="#b7a78a"/>
<rect x="833.5" y="533.9" width="4" height="7" fill="#dededa" rx="1"/>
<rect x="833.8" y="535.6" width="3.4" height="3.6" fill="#b7a78a"/>
<rect x="840.9" y="531.5" width="5" height="8" fill="#dededa" rx="1"/>
<rect x="841.2" y="533.5" width="4.4" height="4.2" fill="#d4d4d0"/>
<rect x="850.3" y="533.7" width="3.5" height="6.5" fill="#dededa" rx="1"/>
<rect x="850.6" y="535.3" width="2.9" height="3.3" fill="#c8c4b8"/>
<rect x="855.4" y="534.4" width="6.5" height="3.5" fill="#dededa" rx="1"/>
<rect x="857" y="534.7" width="3.3" height="2.9" fill="#b7a78a"/>
<rect x="760" y="538.5" width="5" height="8" fill="#dededa" rx="1"/>
<rect x="760.3" y="540.4" width="4.4" height="4.2" fill="#b7a78a"/>
<rect x="775.5" y="540.8" width="6.5" height="3.5" fill="#dededa" rx="1"/>
<rect x="777.1" y="541.1" width="3.3" height="2.9" fill="#d4d4d0"/>
<rect x="785.7" y="541.1" width="5" height="8" fill="#dededa" rx="1"/>
<rect x="786" y="543" width="4.4" height="4.2" fill="#c8c4b8"/>
<rect x="794" y="539.6" width="3.5" height="6.5" fill="#dededa" rx="1"/>
<rect x="794.3" y="541.2" width="2.9" height="3.3" fill="#b7a78a"/>
<rect x="800.7" y="541.8" width="4" height="7" fill="#dededa" rx="1"/>
<rect x="801" y="543.5" width="3.4" height="3.6" fill="#d4d4d0"/>
<rect x="815" y="542.8" width="7" height="4" fill="#dededa" rx="1"/>
<rect x="816.7" y="543.1" width="3.6" height="3.4" fill="#c8c4b8"/>
<rect x="825.3" y="540" width="3.5" height="6.5" fill="#dededa" rx="1"/>
<rect x="825.6" y="541.6" width="2.9" height="3.3" fill="#b7a78a"/>
<rect x="832.6" y="541.9" width="6.5" height="3.5" fill="#dededa" rx="1"/>
<rect x="834.2" y="542.2" width="3.3" height="2.9" fill="#d4d4d0"/>
<rect x="841.4" y="541.3" width="8" height="5" fill="#dededa" rx="1"/>
<rect x="843.3" y="541.6" width="4.2" height="4.4" fill="#c8c4b8"/>
<rect x="849.8" y="543.1" width="7" height="4" fill="#dededa" rx="1"/>
<rect x="851.5" y="543.4" width="3.6" height="3.4" fill="#d4d4d0"/>
<rect x="858.3" y="541.9" width="4" height="7" fill="#dededa" rx="1"/>
<rect x="858.6" y="543.6" width="3.4" height="3.6" fill="#b7a78a"/>
<rect x="760.4" y="550.9" width="6.5" height="3.5" fill="#dededa" rx="1"/>
<rect x="762" y="551.2" width="3.3" height="2.9" fill="#d4d4d0"/>
<rect x="777.6" y="549.5" width="6.5" height="3.5" fill="#dededa" rx="1"/>
<rect x="779.2" y="549.8" width="3.3" height="2.9" fill="#d4d4d0"/>
<rect x="785.4" y="548.9" width="8" height="5" fill="#dededa" rx="1"/>
<rect x="787.3" y="549.2" width="4.2" height="4.4" fill="#9c9484"/>
<rect x="793.9" y="548.5" width="3.5" height="6.5" fill="#dededa" rx="1"/>
<rect x="794.2" y="550.1" width="2.9" height="3.3" fill="#d4d4d0"/>
<rect x="807.7" y="549.1" width="7" height="4" fill="#dededa" rx="1"/>
<rect x="809.4" y="549.4" width="3.6" height="3.4" fill="#d4d4d0"/>
<rect x="817.2" y="549.8" width="6.5" height="3.5" fill="#dededa" rx="1"/>
<rect x="818.8" y="550.1" width="3.3" height="2.9" fill="#c8c4b8"/>
<rect x="825.6" y="549.8" width="3.5" height="6.5" fill="#dededa" rx="1"/>
<rect x="825.9" y="551.4" width="2.9" height="3.3" fill="#d4d4d0"/>
<rect x="849.6" y="549.2" width="4" height="7" fill="#dededa" rx="1"/>
<rect x="849.9" y="550.8" width="3.4" height="3.6" fill="#c8c4b8"/>
<rect x="857.9" y="547.6" width="4" height="7" fill="#dededa" rx="1"/>
<rect x="858.2" y="549.3" width="3.4" height="3.6" fill="#9c9484"/>
<rect x="759.8" y="559" width="8" height="5" fill="#dededa" rx="1"/>
<rect x="761.7" y="559.3" width="4.2" height="4.4" fill="#c8c4b8"/>
<rect x="771" y="557.3" width="3.5" height="6.5" fill="#dededa" rx="1"/>
<rect x="771.3" y="558.9" width="2.9" height="3.3" fill="#9c9484"/>
<rect x="778.3" y="554.6" width="5" height="8" fill="#dededa" rx="1"/>
<rect x="778.6" y="556.5" width="4.4" height="4.2" fill="#9c9484"/>
<rect x="785.4" y="558.8" width="6.5" height="3.5" fill="#dededa" rx="1"/>
<rect x="787" y="559.1" width="3.3" height="2.9" fill="#b7a78a"/>
<rect x="793.7" y="558.9" width="7" height="4" fill="#dededa" rx="1"/>
<rect x="795.4" y="559.2" width="3.6" height="3.4" fill="#9c9484"/>
<rect x="799.9" y="559" width="7" height="4" fill="#dededa" rx="1"/>
<rect x="801.5" y="559.3" width="3.6" height="3.4" fill="#d4d4d0"/>
<rect x="818.6" y="557.1" width="3.5" height="6.5" fill="#dededa" rx="1"/>
<rect x="818.9" y="558.7" width="2.9" height="3.3" fill="#c8c4b8"/>
<rect x="826.5" y="557" width="4" height="7" fill="#dededa" rx="1"/>
<rect x="826.8" y="558.7" width="3.4" height="3.6" fill="#b7a78a"/>
<rect x="833.1" y="557.2" width="7" height="4" fill="#dededa" rx="1"/>
<rect x="834.8" y="557.5" width="3.6" height="3.4" fill="#b7a78a"/>
<rect x="838.8" y="558.7" width="8" height="5" fill="#dededa" rx="1"/>
<rect x="840.8" y="559" width="4.2" height="4.4" fill="#b7a78a"/>
<rect x="848.8" y="557.8" width="7" height="4" fill="#dededa" rx="1"/>
<rect x="850.5" y="558.1" width="3.6" height="3.4" fill="#b7a78a"/>
<rect x="857.9" y="557.3" width="5" height="8" fill="#dededa" rx="1"/>
<rect x="858.2" y="559.2" width="4.4" height="4.2" fill="#d4d4d0"/>
<rect x="760.8" y="563.8" width="5" height="8" fill="#dededa" rx="1"/>
<rect x="761.1" y="565.7" width="4.4" height="4.2" fill="#b7a78a"/>
<rect x="771" y="565.2" width="3.5" height="6.5" fill="#dededa" rx="1"/>
<rect x="771.3" y="566.8" width="2.9" height="3.3" fill="#b7a78a"/>
<rect x="784.6" y="564" width="4" height="7" fill="#dededa" rx="1"/>
<rect x="784.9" y="565.6" width="3.4" height="3.6" fill="#b7a78a"/>
<rect x="794.2" y="565.5" width="5" height="8" fill="#dededa" rx="1"/>
<rect x="794.5" y="567.4" width="4.4" height="4.2" fill="#9c9484"/>
<rect x="801.5" y="565.8" width="4" height="7" fill="#dededa" rx="1"/>
<rect x="801.8" y="567.5" width="3.4" height="3.6" fill="#d4d4d0"/>
<rect x="810" y="563.1" width="5" height="8" fill="#dededa" rx="1"/>
<rect x="810.3" y="565" width="4.4" height="4.2" fill="#c8c4b8"/>
<rect x="815.1" y="566.9" width="8" height="5" fill="#dededa" rx="1"/>
<rect x="817" y="567.2" width="4.2" height="4.4" fill="#c8c4b8"/>
<rect x="832.9" y="565.5" width="6.5" height="3.5" fill="#dededa" rx="1"/>
<rect x="834.5" y="565.8" width="3.3" height="2.9" fill="#9c9484"/>
<rect x="841.4" y="564.2" width="3.5" height="6.5" fill="#dededa" rx="1"/>
<rect x="841.7" y="565.8" width="2.9" height="3.3" fill="#d4d4d0"/>
<rect x="848.7" y="563.2" width="5" height="8" fill="#dededa" rx="1"/>
<rect x="849" y="565.1" width="4.4" height="4.2" fill="#c8c4b8"/>
<rect x="813.4" y="483.7" width="4" height="7" fill="#dededa" rx="1"/>
<rect x="813.7" y="485.3" width="3.4" height="3.6" fill="#a89c80"/>
<rect x="823.9" y="482.6" width="4" height="7" fill="#dededa" rx="1"/>
<rect x="824.2" y="484.3" width="3.4" height="3.6" fill="#b8aa8a"/>
<rect x="830.4" y="484.8" width="7" height="4" fill="#dededa" rx="1"/>
<rect x="832.1" y="485.1" width="3.6" height="3.4" fill="#c2b492"/>
<rect x="839" y="482.1" width="8" height="5" fill="#dededa" rx="1"/>
<rect x="840.9" y="482.4" width="4.2" height="4.4" fill="#b0a084"/>
<rect x="847.8" y="482.3" width="8" height="5" fill="#dededa" rx="1"/>
<rect x="849.8" y="482.6" width="4.2" height="4.4" fill="#3a3a38"/>
<rect x="858.7" y="480.6" width="5" height="8" fill="#dededa" rx="1"/>
<rect x="859" y="482.6" width="4.4" height="4.2" fill="#c9c7c0"/>
<rect x="811.7" y="493.4" width="10" height="6" fill="#dededa" rx="1"/>
<rect x="814.1" y="493.7" width="5.2" height="5.4" fill="#c9c7c0"/>
<rect x="832.4" y="490.5" width="5" height="8" fill="#dededa" rx="1"/>
<rect x="832.7" y="492.4" width="4.4" height="4.2" fill="#c2b492"/>
<rect x="841.8" y="491.5" width="5" height="8" fill="#dededa" rx="1"/>
<rect x="842.1" y="493.4" width="4.4" height="4.2" fill="#b0a084"/>
<rect x="847.1" y="493.8" width="7" height="4" fill="#dededa" rx="1"/>
<rect x="848.8" y="494.1" width="3.6" height="3.4" fill="#b8aa8a"/>
<rect x="815.2" y="501" width="4" height="7" fill="#dededa" rx="1"/>
<rect x="815.5" y="502.7" width="3.4" height="3.6" fill="#c2b492"/>
<rect x="829.1" y="502.5" width="8" height="5" fill="#dededa" rx="1"/>
<rect x="831" y="502.8" width="4.2" height="4.4" fill="#b8aa8a"/>
<rect x="839.1" y="503" width="7" height="4" fill="#dededa" rx="1"/>
<rect x="840.8" y="503.3" width="3.6" height="3.4" fill="#b0a084"/>
<rect x="847.4" y="502" width="10" height="6" fill="#dededa" rx="1"/>
<rect x="849.8" y="502.3" width="5.2" height="5.4" fill="#b9a685"/>
<rect x="813.5" y="508" width="5" height="8" fill="#dededa" rx="1"/>
<rect x="813.8" y="509.9" width="4.4" height="4.2" fill="#b0a084"/>
<rect x="821.2" y="506.9" width="6" height="10" fill="#dededa" rx="1"/>
<rect x="821.5" y="509.3" width="5.4" height="5.2" fill="#b0a084"/>
<rect x="849.2" y="509.1" width="4" height="7" fill="#dededa" rx="1"/>
<rect x="849.5" y="510.8" width="3.4" height="3.6" fill="#d0d0cc"/>
<rect x="857.3" y="508.5" width="6" height="10" fill="#dededa" rx="1"/>
<rect x="857.6" y="510.9" width="5.4" height="5.2" fill="#3a3a38"/>
<rect x="812.5" y="519.9" width="4" height="7" fill="#dededa" rx="1"/>
<rect x="812.8" y="521.5" width="3.4" height="3.6" fill="#b8aa8a"/>
<rect x="818.5" y="519.9" width="10" height="6" fill="#dededa" rx="1"/>
<rect x="820.9" y="520.2" width="5.2" height="5.4" fill="#a89c80"/>
<rect x="831.6" y="518.1" width="5" height="8" fill="#dededa" rx="1"/>
<rect x="831.9" y="520" width="4.4" height="4.2" fill="#b8aa8a"/>
<rect x="856.9" y="517.7" width="10" height="6" fill="#dededa" rx="1"/>
<rect x="859.3" y="518" width="5.2" height="5.4" fill="#c2b492"/>
<rect x="812.8" y="525.6" width="6" height="10" fill="#dededa" rx="1"/>
<rect x="813.1" y="528" width="5.4" height="5.2" fill="#c2b492"/>
<rect x="832.4" y="528.5" width="4" height="7" fill="#dededa" rx="1"/>
<rect x="832.7" y="530.2" width="3.4" height="3.6" fill="#c9c7c0"/>
<rect x="838.9" y="526.2" width="6" height="10" fill="#dededa" rx="1"/>
<rect x="839.2" y="528.6" width="5.4" height="5.2" fill="#4a4842"/>
<rect x="847.2" y="528.3" width="8" height="5" fill="#dededa" rx="1"/>
<rect x="849.1" y="528.6" width="4.2" height="4.4" fill="#b8aa8a"/>
<rect x="763.7" y="452.2" width="6" height="10" fill="#dededa" rx="1"/>
<rect x="764" y="454.6" width="5.4" height="5.2" fill="#a89c80"/>
<rect x="785.5" y="453.9" width="5" height="8.5" fill="#dededa" rx="1"/>
<rect x="785.8" y="456" width="4.4" height="4.4" fill="#b0a084"/>
<rect x="807.5" y="464.8" width="5" height="8.5" fill="#dededa" rx="1"/>
<rect x="807.8" y="466.8" width="4.4" height="4.4" fill="#b0a084"/>
<rect x="764.1" y="475.9" width="5" height="8.5" fill="#dededa" rx="1"/>
<rect x="764.4" y="477.9" width="4.4" height="4.4" fill="#b0a084"/>
<rect x="773.6" y="476.2" width="8.5" height="5" fill="#dededa" rx="1"/>
<rect x="775.6" y="476.5" width="4.4" height="4.4" fill="#b9a685"/>
<rect x="783.3" y="476.1" width="10" height="6" fill="#dededa" rx="1"/>
<rect x="785.7" y="476.4" width="5.2" height="5.4" fill="#b8aa8a"/>
<rect x="797.7" y="476.1" width="5" height="8.5" fill="#dededa" rx="1"/>
<rect x="798" y="478.2" width="4.4" height="4.4" fill="#3a3a38"/>
<rect x="808.2" y="475.3" width="5" height="8.5" fill="#dededa" rx="1"/>
<rect x="808.5" y="477.3" width="4.4" height="4.4" fill="#b0a084"/>
<rect x="839.5" y="454.1" width="5" height="8" fill="#dededa" rx="1"/>
<rect x="839.8" y="456" width="4.4" height="4.2" fill="#b9a685"/>
<rect x="855.6" y="455" width="8" height="5" fill="#dededa" rx="1"/>
<rect x="857.5" y="455.3" width="4.2" height="4.4" fill="#a89c80"/>
<rect x="837.1" y="464.3" width="8" height="5" fill="#dededa" rx="1"/>
<rect x="839" y="464.6" width="4.2" height="4.4" fill="#b9a685"/>
<rect x="847.2" y="462.3" width="5" height="8" fill="#dededa" rx="1"/>
<rect x="847.5" y="464.2" width="4.4" height="4.2" fill="#c2b492"/>
<path d="M1028.2 328.2h3.5v3.5h-3.5zM1034.2 328.2h3.5v3.5h-3.5zM1040.2 328.2h3.5v3.5h-3.5zM1046.2 328.2h3.5v3.5h-3.5zM1058.2 328.2h3.5v3.5h-3.5zM1064.2 328.2h3.5v3.5h-3.5zM1076.2 328.2h3.5v3.5h-3.5zM1082.2 328.2h3.5v3.5h-3.5zM1088.2 328.2h3.5v3.5h-3.5zM1094.2 328.2h3.5v3.5h-3.5zM1100.2 328.2h3.5v3.5h-3.5zM1106.2 328.2h3.5v3.5h-3.5zM1118.2 328.2h3.5v3.5h-3.5zM1130.2 328.2h3.5v3.5h-3.5z" fill="#dedede"/>
<path d="M1028.2 334.2h3.5v3.5h-3.5zM1034.2 334.2h3.5v3.5h-3.5zM1058.2 334.2h3.5v3.5h-3.5zM1064.2 334.2h3.5v3.5h-3.5zM1070.2 334.2h3.5v3.5h-3.5zM1076.2 334.2h3.5v3.5h-3.5zM1082.2 334.2h3.5v3.5h-3.5zM1088.2 334.2h3.5v3.5h-3.5zM1106.2 334.2h3.5v3.5h-3.5zM1112.2 334.2h3.5v3.5h-3.5zM1118.2 334.2h3.5v3.5h-3.5z" fill="#dedede"/>
<path d="M1028.2 340.2h3.5v3.5h-3.5zM1040.2 340.2h3.5v3.5h-3.5zM1046.2 340.2h3.5v3.5h-3.5zM1058.2 340.2h3.5v3.5h-3.5zM1064.2 340.2h3.5v3.5h-3.5zM1076.2 340.2h3.5v3.5h-3.5zM1082.2 340.2h3.5v3.5h-3.5zM1088.2 340.2h3.5v3.5h-3.5zM1094.2 340.2h3.5v3.5h-3.5zM1124.2 340.2h3.5v3.5h-3.5z" fill="#dedede"/>
<path d="M1040.2 346.2h3.5v3.5h-3.5zM1046.2 346.2h3.5v3.5h-3.5zM1052.2 346.2h3.5v3.5h-3.5zM1058.2 346.2h3.5v3.5h-3.5zM1064.2 346.2h3.5v3.5h-3.5zM1070.2 346.2h3.5v3.5h-3.5zM1082.2 346.2h3.5v3.5h-3.5zM1088.2 346.2h3.5v3.5h-3.5zM1094.2 346.2h3.5v3.5h-3.5zM1106.2 346.2h3.5v3.5h-3.5zM1130.2 346.2h3.5v3.5h-3.5z" fill="#dedede"/>
<path d="M1034.2 352.2h3.5v3.5h-3.5zM1040.2 352.2h3.5v3.5h-3.5zM1052.2 352.2h3.5v3.5h-3.5zM1070.2 352.2h3.5v3.5h-3.5zM1082.2 352.2h3.5v3.5h-3.5zM1088.2 352.2h3.5v3.5h-3.5zM1094.2 352.2h3.5v3.5h-3.5zM1100.2 352.2h3.5v3.5h-3.5zM1124.2 352.2h3.5v3.5h-3.5zM1130.2 352.2h3.5v3.5h-3.5z" fill="#dedede"/>
<path d="M1028.2 358.2h3.5v3.5h-3.5zM1034.2 358.2h3.5v3.5h-3.5zM1040.2 358.2h3.5v3.5h-3.5zM1046.2 358.2h3.5v3.5h-3.5zM1058.2 358.2h3.5v3.5h-3.5zM1070.2 358.2h3.5v3.5h-3.5zM1076.2 358.2h3.5v3.5h-3.5zM1082.2 358.2h3.5v3.5h-3.5zM1088.2 358.2h3.5v3.5h-3.5zM1094.2 358.2h3.5v3.5h-3.5zM1100.2 358.2h3.5v3.5h-3.5zM1106.2 358.2h3.5v3.5h-3.5zM1118.2 358.2h3.5v3.5h-3.5z" fill="#dedede"/>
<path d="M1034.2 364.2h3.5v3.5h-3.5zM1040.2 364.2h3.5v3.5h-3.5zM1046.2 364.2h3.5v3.5h-3.5zM1052.2 364.2h3.5v3.5h-3.5zM1058.2 364.2h3.5v3.5h-3.5zM1076.2 364.2h3.5v3.5h-3.5zM1094.2 364.2h3.5v3.5h-3.5zM1100.2 364.2h3.5v3.5h-3.5zM1106.2 364.2h3.5v3.5h-3.5zM1112.2 364.2h3.5v3.5h-3.5z" fill="#dedede"/>
<path d="M1028.2 370.2h3.5v3.5h-3.5zM1034.2 370.2h3.5v3.5h-3.5zM1040.2 370.2h3.5v3.5h-3.5zM1046.2 370.2h3.5v3.5h-3.5zM1052.2 370.2h3.5v3.5h-3.5zM1100.2 370.2h3.5v3.5h-3.5zM1106.2 370.2h3.5v3.5h-3.5zM1118.2 370.2h3.5v3.5h-3.5zM1130.2 370.2h3.5v3.5h-3.5z" fill="#dedede"/>
<path d="M1028.2 376.2h3.5v3.5h-3.5zM1040.2 376.2h3.5v3.5h-3.5zM1100.2 376.2h3.5v3.5h-3.5zM1106.2 376.2h3.5v3.5h-3.5zM1118.2 376.2h3.5v3.5h-3.5z" fill="#dedede"/>
<path d="M1052.2 382.2h3.5v3.5h-3.5zM1100.2 382.2h3.5v3.5h-3.5zM1106.2 382.2h3.5v3.5h-3.5zM1112.2 382.2h3.5v3.5h-3.5zM1118.2 382.2h3.5v3.5h-3.5zM1130.2 382.2h3.5v3.5h-3.5z" fill="#dedede"/>
<path d="M1040.2 388.2h3.5v3.5h-3.5zM1046.2 388.2h3.5v3.5h-3.5zM1052.2 388.2h3.5v3.5h-3.5zM1112.2 388.2h3.5v3.5h-3.5zM1124.2 388.2h3.5v3.5h-3.5z" fill="#dedede"/>
<path d="M1028.2 394.2h3.5v3.5h-3.5zM1034.2 394.2h3.5v3.5h-3.5zM1040.2 394.2h3.5v3.5h-3.5zM1046.2 394.2h3.5v3.5h-3.5zM1112.2 394.2h3.5v3.5h-3.5zM1118.2 394.2h3.5v3.5h-3.5zM1124.2 394.2h3.5v3.5h-3.5zM1130.2 394.2h3.5v3.5h-3.5z" fill="#dedede"/>
<path d="M1028.2 400.2h3.5v3.5h-3.5zM1034.2 400.2h3.5v3.5h-3.5zM1040.2 400.2h3.5v3.5h-3.5zM1046.2 400.2h3.5v3.5h-3.5zM1052.2 400.2h3.5v3.5h-3.5zM1106.2 400.2h3.5v3.5h-3.5zM1112.2 400.2h3.5v3.5h-3.5zM1118.2 400.2h3.5v3.5h-3.5zM1124.2 400.2h3.5v3.5h-3.5z" fill="#dedede"/>
<path d="M1028.2 406.2h3.5v3.5h-3.5zM1034.2 406.2h3.5v3.5h-3.5zM1040.2 406.2h3.5v3.5h-3.5zM1052.2 406.2h3.5v3.5h-3.5zM1106.2 406.2h3.5v3.5h-3.5zM1118.2 406.2h3.5v3.5h-3.5z" fill="#dedede"/>
<path d="M1028.2 412.2h3.5v3.5h-3.5zM1040.2 412.2h3.5v3.5h-3.5zM1052.2 412.2h3.5v3.5h-3.5zM1058.2 412.2h3.5v3.5h-3.5zM1070.2 412.2h3.5v3.5h-3.5zM1076.2 412.2h3.5v3.5h-3.5zM1088.2 412.2h3.5v3.5h-3.5zM1094.2 412.2h3.5v3.5h-3.5zM1112.2 412.2h3.5v3.5h-3.5zM1118.2 412.2h3.5v3.5h-3.5zM1124.2 412.2h3.5v3.5h-3.5z" fill="#dedede"/>
<path d="M1028.2 418.2h3.5v3.5h-3.5zM1040.2 418.2h3.5v3.5h-3.5zM1046.2 418.2h3.5v3.5h-3.5zM1058.2 418.2h3.5v3.5h-3.5zM1082.2 418.2h3.5v3.5h-3.5zM1088.2 418.2h3.5v3.5h-3.5zM1100.2 418.2h3.5v3.5h-3.5zM1118.2 418.2h3.5v3.5h-3.5zM1130.2 418.2h3.5v3.5h-3.5z" fill="#dedede"/>
<path d="M1034.2 424.2h3.5v3.5h-3.5zM1040.2 424.2h3.5v3.5h-3.5zM1046.2 424.2h3.5v3.5h-3.5zM1052.2 424.2h3.5v3.5h-3.5zM1064.2 424.2h3.5v3.5h-3.5zM1070.2 424.2h3.5v3.5h-3.5zM1076.2 424.2h3.5v3.5h-3.5zM1082.2 424.2h3.5v3.5h-3.5zM1088.2 424.2h3.5v3.5h-3.5zM1094.2 424.2h3.5v3.5h-3.5zM1100.2 424.2h3.5v3.5h-3.5zM1106.2 424.2h3.5v3.5h-3.5zM1118.2 424.2h3.5v3.5h-3.5zM1130.2 424.2h3.5v3.5h-3.5z" fill="#dedede"/>
<path d="M1028.2 430.2h3.5v3.5h-3.5zM1040.2 430.2h3.5v3.5h-3.5zM1052.2 430.2h3.5v3.5h-3.5zM1058.2 430.2h3.5v3.5h-3.5zM1064.2 430.2h3.5v3.5h-3.5zM1076.2 430.2h3.5v3.5h-3.5zM1082.2 430.2h3.5v3.5h-3.5zM1094.2 430.2h3.5v3.5h-3.5zM1106.2 430.2h3.5v3.5h-3.5zM1112.2 430.2h3.5v3.5h-3.5zM1118.2 430.2h3.5v3.5h-3.5zM1124.2 430.2h3.5v3.5h-3.5zM1130.2 430.2h3.5v3.5h-3.5z" fill="#dedede"/>
<path d="M1028.2 436.2h3.5v3.5h-3.5zM1046.2 436.2h3.5v3.5h-3.5zM1058.2 436.2h3.5v3.5h-3.5zM1064.2 436.2h3.5v3.5h-3.5zM1076.2 436.2h3.5v3.5h-3.5zM1082.2 436.2h3.5v3.5h-3.5zM1088.2 436.2h3.5v3.5h-3.5zM1094.2 436.2h3.5v3.5h-3.5zM1100.2 436.2h3.5v3.5h-3.5zM1112.2 436.2h3.5v3.5h-3.5zM1118.2 436.2h3.5v3.5h-3.5zM1124.2 436.2h3.5v3.5h-3.5zM1130.2 436.2h3.5v3.5h-3.5z" fill="#dedede"/>
<path d="M1028.2 442.2h3.5v3.5h-3.5zM1034.2 442.2h3.5v3.5h-3.5zM1040.2 442.2h3.5v3.5h-3.5zM1046.2 442.2h3.5v3.5h-3.5zM1052.2 442.2h3.5v3.5h-3.5zM1058.2 442.2h3.5v3.5h-3.5zM1064.2 442.2h3.5v3.5h-3.5zM1070.2 442.2h3.5v3.5h-3.5zM1076.2 442.2h3.5v3.5h-3.5zM1082.2 442.2h3.5v3.5h-3.5zM1088.2 442.2h3.5v3.5h-3.5zM1094.2 442.2h3.5v3.5h-3.5zM1100.2 442.2h3.5v3.5h-3.5zM1112.2 442.2h3.5v3.5h-3.5zM1118.2 442.2h3.5v3.5h-3.5zM1124.2 442.2h3.5v3.5h-3.5zM1130.2 442.2h3.5v3.5h-3.5z" fill="#dedede"/>
<path d="M1028.2 448.2h3.5v3.5h-3.5zM1040.2 448.2h3.5v3.5h-3.5zM1046.2 448.2h3.5v3.5h-3.5zM1052.2 448.2h3.5v3.5h-3.5zM1058.2 448.2h3.5v3.5h-3.5zM1064.2 448.2h3.5v3.5h-3.5zM1070.2 448.2h3.5v3.5h-3.5zM1076.2 448.2h3.5v3.5h-3.5zM1082.2 448.2h3.5v3.5h-3.5zM1088.2 448.2h3.5v3.5h-3.5zM1094.2 448.2h3.5v3.5h-3.5zM1100.2 448.2h3.5v3.5h-3.5zM1106.2 448.2h3.5v3.5h-3.5zM1112.2 448.2h3.5v3.5h-3.5zM1118.2 448.2h3.5v3.5h-3.5zM1130.2 448.2h3.5v3.5h-3.5z" fill="#dedede"/>
<path d="M1144.2 294.2h3.5v3.5h-3.5zM1150.2 294.2h3.5v3.5h-3.5zM1156.2 294.2h3.5v3.5h-3.5zM1162.2 294.2h3.5v3.5h-3.5zM1168.2 294.2h3.5v3.5h-3.5zM1180.2 294.2h3.5v3.5h-3.5zM1186.2 294.2h3.5v3.5h-3.5zM1192.2 294.2h3.5v3.5h-3.5zM1198.2 294.2h3.5v3.5h-3.5zM1204.2 294.2h3.5v3.5h-3.5zM1210.2 294.2h3.5v3.5h-3.5zM1216.2 294.2h3.5v3.5h-3.5zM1222.2 294.2h3.5v3.5h-3.5zM1228.2 294.2h3.5v3.5h-3.5zM1234.2 294.2h3.5v3.5h-3.5zM1240.2 294.2h3.5v3.5h-3.5zM1252.2 294.2h3.5v3.5h-3.5zM1258.2 294.2h3.5v3.5h-3.5zM1264.2 294.2h3.5v3.5h-3.5zM1270.2 294.2h3.5v3.5h-3.5zM1288.2 294.2h3.5v3.5h-3.5zM1294.2 294.2h3.5v3.5h-3.5zM1300.2 294.2h3.5v3.5h-3.5zM1306.2 294.2h3.5v3.5h-3.5zM1312.2 294.2h3.5v3.5h-3.5zM1324.2 294.2h3.5v3.5h-3.5z" fill="#dedede"/>
<path d="M1144.2 300.2h3.5v3.5h-3.5zM1150.2 300.2h3.5v3.5h-3.5zM1156.2 300.2h3.5v3.5h-3.5zM1162.2 300.2h3.5v3.5h-3.5zM1168.2 300.2h3.5v3.5h-3.5zM1174.2 300.2h3.5v3.5h-3.5zM1180.2 300.2h3.5v3.5h-3.5zM1186.2 300.2h3.5v3.5h-3.5zM1192.2 300.2h3.5v3.5h-3.5zM1198.2 300.2h3.5v3.5h-3.5zM1204.2 300.2h3.5v3.5h-3.5zM1210.2 300.2h3.5v3.5h-3.5zM1234.2 300.2h3.5v3.5h-3.5zM1240.2 300.2h3.5v3.5h-3.5zM1270.2 300.2h3.5v3.5h-3.5zM1282.2 300.2h3.5v3.5h-3.5zM1288.2 300.2h3.5v3.5h-3.5zM1306.2 300.2h3.5v3.5h-3.5zM1312.2 300.2h3.5v3.5h-3.5zM1318.2 300.2h3.5v3.5h-3.5z" fill="#dedede"/>
<path d="M1144.2 306.2h3.5v3.5h-3.5zM1150.2 306.2h3.5v3.5h-3.5zM1240.2 306.2h3.5v3.5h-3.5zM1276.2 306.2h3.5v3.5h-3.5zM1282.2 306.2h3.5v3.5h-3.5zM1288.2 306.2h3.5v3.5h-3.5zM1294.2 306.2h3.5v3.5h-3.5zM1306.2 306.2h3.5v3.5h-3.5zM1312.2 306.2h3.5v3.5h-3.5z" fill="#dedede"/>
<path d="M1144.2 312.2h3.5v3.5h-3.5zM1150.2 312.2h3.5v3.5h-3.5zM1240.2 312.2h3.5v3.5h-3.5zM1246.2 312.2h3.5v3.5h-3.5zM1252.2 312.2h3.5v3.5h-3.5zM1270.2 312.2h3.5v3.5h-3.5zM1276.2 312.2h3.5v3.5h-3.5zM1282.2 312.2h3.5v3.5h-3.5zM1288.2 312.2h3.5v3.5h-3.5zM1294.2 312.2h3.5v3.5h-3.5zM1300.2 312.2h3.5v3.5h-3.5zM1306.2 312.2h3.5v3.5h-3.5zM1318.2 312.2h3.5v3.5h-3.5z" fill="#dedede"/>
<path d="M1144.2 318.2h3.5v3.5h-3.5zM1150.2 318.2h3.5v3.5h-3.5zM1240.2 318.2h3.5v3.5h-3.5zM1246.2 318.2h3.5v3.5h-3.5zM1252.2 318.2h3.5v3.5h-3.5zM1258.2 318.2h3.5v3.5h-3.5zM1264.2 318.2h3.5v3.5h-3.5zM1270.2 318.2h3.5v3.5h-3.5zM1288.2 318.2h3.5v3.5h-3.5zM1294.2 318.2h3.5v3.5h-3.5zM1300.2 318.2h3.5v3.5h-3.5zM1312.2 318.2h3.5v3.5h-3.5zM1324.2 318.2h3.5v3.5h-3.5z" fill="#dedede"/>
<path d="M1144.2 324.2h3.5v3.5h-3.5zM1150.2 324.2h3.5v3.5h-3.5zM1240.2 324.2h3.5v3.5h-3.5zM1246.2 324.2h3.5v3.5h-3.5zM1252.2 324.2h3.5v3.5h-3.5zM1258.2 324.2h3.5v3.5h-3.5zM1264.2 324.2h3.5v3.5h-3.5zM1276.2 324.2h3.5v3.5h-3.5zM1282.2 324.2h3.5v3.5h-3.5zM1294.2 324.2h3.5v3.5h-3.5zM1300.2 324.2h3.5v3.5h-3.5z" fill="#dedede"/>
<path d="M1144.2 330.2h3.5v3.5h-3.5zM1150.2 330.2h3.5v3.5h-3.5zM1240.2 330.2h3.5v3.5h-3.5zM1252.2 330.2h3.5v3.5h-3.5zM1258.2 330.2h3.5v3.5h-3.5zM1288.2 330.2h3.5v3.5h-3.5zM1294.2 330.2h3.5v3.5h-3.5zM1300.2 330.2h3.5v3.5h-3.5zM1306.2 330.2h3.5v3.5h-3.5zM1318.2 330.2h3.5v3.5h-3.5zM1324.2 330.2h3.5v3.5h-3.5z" fill="#dedede"/>
<path d="M1150.2 336.2h3.5v3.5h-3.5zM1240.2 336.2h3.5v3.5h-3.5zM1252.2 336.2h3.5v3.5h-3.5zM1264.2 336.2h3.5v3.5h-3.5zM1270.2 336.2h3.5v3.5h-3.5zM1294.2 336.2h3.5v3.5h-3.5zM1300.2 336.2h3.5v3.5h-3.5zM1306.2 336.2h3.5v3.5h-3.5zM1312.2 336.2h3.5v3.5h-3.5zM1318.2 336.2h3.5v3.5h-3.5z" fill="#dedede"/>
<path d="M1240.2 342.2h3.5v3.5h-3.5zM1282.2 342.2h3.5v3.5h-3.5zM1288.2 342.2h3.5v3.5h-3.5zM1294.2 342.2h3.5v3.5h-3.5zM1300.2 342.2h3.5v3.5h-3.5zM1306.2 342.2h3.5v3.5h-3.5zM1312.2 342.2h3.5v3.5h-3.5zM1318.2 342.2h3.5v3.5h-3.5z" fill="#dedede"/>
<path d="M1144.2 348.2h3.5v3.5h-3.5zM1240.2 348.2h3.5v3.5h-3.5zM1258.2 348.2h3.5v3.5h-3.5zM1276.2 348.2h3.5v3.5h-3.5zM1288.2 348.2h3.5v3.5h-3.5zM1294.2 348.2h3.5v3.5h-3.5zM1300.2 348.2h3.5v3.5h-3.5zM1306.2 348.2h3.5v3.5h-3.5zM1312.2 348.2h3.5v3.5h-3.5zM1318.2 348.2h3.5v3.5h-3.5z" fill="#dedede"/>
<path d="M1144.2 354.2h3.5v3.5h-3.5zM1150.2 354.2h3.5v3.5h-3.5zM1156.2 354.2h3.5v3.5h-3.5zM1174.2 354.2h3.5v3.5h-3.5zM1180.2 354.2h3.5v3.5h-3.5zM1186.2 354.2h3.5v3.5h-3.5zM1192.2 354.2h3.5v3.5h-3.5zM1204.2 354.2h3.5v3.5h-3.5zM1210.2 354.2h3.5v3.5h-3.5zM1216.2 354.2h3.5v3.5h-3.5zM1222.2 354.2h3.5v3.5h-3.5zM1228.2 354.2h3.5v3.5h-3.5zM1234.2 354.2h3.5v3.5h-3.5zM1270.2 354.2h3.5v3.5h-3.5zM1282.2 354.2h3.5v3.5h-3.5zM1288.2 354.2h3.5v3.5h-3.5zM1294.2 354.2h3.5v3.5h-3.5zM1300.2 354.2h3.5v3.5h-3.5zM1318.2 354.2h3.5v3.5h-3.5zM1324.2 354.2h3.5v3.5h-3.5z" fill="#dedede"/>
<path d="M1156.2 360.2h3.5v3.5h-3.5zM1174.2 360.2h3.5v3.5h-3.5zM1180.2 360.2h3.5v3.5h-3.5zM1186.2 360.2h3.5v3.5h-3.5zM1192.2 360.2h3.5v3.5h-3.5zM1198.2 360.2h3.5v3.5h-3.5zM1204.2 360.2h3.5v3.5h-3.5zM1210.2 360.2h3.5v3.5h-3.5zM1216.2 360.2h3.5v3.5h-3.5zM1222.2 360.2h3.5v3.5h-3.5zM1228.2 360.2h3.5v3.5h-3.5zM1240.2 360.2h3.5v3.5h-3.5zM1246.2 360.2h3.5v3.5h-3.5zM1258.2 360.2h3.5v3.5h-3.5zM1270.2 360.2h3.5v3.5h-3.5zM1294.2 360.2h3.5v3.5h-3.5zM1306.2 360.2h3.5v3.5h-3.5zM1312.2 360.2h3.5v3.5h-3.5zM1318.2 360.2h3.5v3.5h-3.5zM1324.2 360.2h3.5v3.5h-3.5z" fill="#dedede"/>
<path d="M1156.2 366.2h3.5v3.5h-3.5zM1174.2 366.2h3.5v3.5h-3.5zM1180.2 366.2h3.5v3.5h-3.5zM1186.2 366.2h3.5v3.5h-3.5zM1192.2 366.2h3.5v3.5h-3.5zM1198.2 366.2h3.5v3.5h-3.5zM1204.2 366.2h3.5v3.5h-3.5zM1210.2 366.2h3.5v3.5h-3.5zM1216.2 366.2h3.5v3.5h-3.5zM1222.2 366.2h3.5v3.5h-3.5zM1228.2 366.2h3.5v3.5h-3.5zM1234.2 366.2h3.5v3.5h-3.5zM1240.2 366.2h3.5v3.5h-3.5zM1252.2 366.2h3.5v3.5h-3.5zM1258.2 366.2h3.5v3.5h-3.5zM1264.2 366.2h3.5v3.5h-3.5zM1270.2 366.2h3.5v3.5h-3.5zM1276.2 366.2h3.5v3.5h-3.5zM1288.2 366.2h3.5v3.5h-3.5zM1312.2 366.2h3.5v3.5h-3.5zM1324.2 366.2h3.5v3.5h-3.5z" fill="#dedede"/>
<path d="M1144.2 372.2h3.5v3.5h-3.5zM1150.2 372.2h3.5v3.5h-3.5zM1168.2 372.2h3.5v3.5h-3.5zM1174.2 372.2h3.5v3.5h-3.5zM1180.2 372.2h3.5v3.5h-3.5zM1186.2 372.2h3.5v3.5h-3.5zM1192.2 372.2h3.5v3.5h-3.5zM1198.2 372.2h3.5v3.5h-3.5zM1204.2 372.2h3.5v3.5h-3.5zM1210.2 372.2h3.5v3.5h-3.5zM1216.2 372.2h3.5v3.5h-3.5zM1222.2 372.2h3.5v3.5h-3.5zM1228.2 372.2h3.5v3.5h-3.5zM1234.2 372.2h3.5v3.5h-3.5zM1240.2 372.2h3.5v3.5h-3.5zM1246.2 372.2h3.5v3.5h-3.5zM1252.2 372.2h3.5v3.5h-3.5zM1276.2 372.2h3.5v3.5h-3.5zM1312.2 372.2h3.5v3.5h-3.5zM1318.2 372.2h3.5v3.5h-3.5zM1324.2 372.2h3.5v3.5h-3.5z" fill="#dedede"/>
<path d="M1144.2 378.2h3.5v3.5h-3.5zM1150.2 378.2h3.5v3.5h-3.5zM1156.2 378.2h3.5v3.5h-3.5zM1180.2 378.2h3.5v3.5h-3.5zM1186.2 378.2h3.5v3.5h-3.5zM1192.2 378.2h3.5v3.5h-3.5zM1204.2 378.2h3.5v3.5h-3.5zM1210.2 378.2h3.5v3.5h-3.5zM1216.2 378.2h3.5v3.5h-3.5zM1222.2 378.2h3.5v3.5h-3.5zM1234.2 378.2h3.5v3.5h-3.5zM1240.2 378.2h3.5v3.5h-3.5zM1246.2 378.2h3.5v3.5h-3.5zM1258.2 378.2h3.5v3.5h-3.5zM1264.2 378.2h3.5v3.5h-3.5zM1270.2 378.2h3.5v3.5h-3.5zM1276.2 378.2h3.5v3.5h-3.5zM1282.2 378.2h3.5v3.5h-3.5zM1288.2 378.2h3.5v3.5h-3.5zM1318.2 378.2h3.5v3.5h-3.5zM1324.2 378.2h3.5v3.5h-3.5z" fill="#dedede"/>
<path d="M1144.2 384.2h3.5v3.5h-3.5zM1150.2 384.2h3.5v3.5h-3.5zM1156.2 384.2h3.5v3.5h-3.5zM1168.2 384.2h3.5v3.5h-3.5zM1174.2 384.2h3.5v3.5h-3.5zM1186.2 384.2h3.5v3.5h-3.5zM1204.2 384.2h3.5v3.5h-3.5zM1210.2 384.2h3.5v3.5h-3.5zM1216.2 384.2h3.5v3.5h-3.5zM1222.2 384.2h3.5v3.5h-3.5zM1228.2 384.2h3.5v3.5h-3.5zM1240.2 384.2h3.5v3.5h-3.5z" fill="#dedede"/>
<path d="M1144.2 390.2h3.5v3.5h-3.5zM1150.2 390.2h3.5v3.5h-3.5zM1156.2 390.2h3.5v3.5h-3.5zM1168.2 390.2h3.5v3.5h-3.5zM1180.2 390.2h3.5v3.5h-3.5zM1186.2 390.2h3.5v3.5h-3.5zM1192.2 390.2h3.5v3.5h-3.5zM1198.2 390.2h3.5v3.5h-3.5zM1204.2 390.2h3.5v3.5h-3.5zM1210.2 390.2h3.5v3.5h-3.5zM1216.2 390.2h3.5v3.5h-3.5zM1228.2 390.2h3.5v3.5h-3.5zM1234.2 390.2h3.5v3.5h-3.5zM1240.2 390.2h3.5v3.5h-3.5zM1318.2 390.2h3.5v3.5h-3.5z" fill="#dedede"/>
<path d="M1150.2 396.2h3.5v3.5h-3.5zM1156.2 396.2h3.5v3.5h-3.5zM1168.2 396.2h3.5v3.5h-3.5zM1174.2 396.2h3.5v3.5h-3.5zM1180.2 396.2h3.5v3.5h-3.5zM1186.2 396.2h3.5v3.5h-3.5zM1192.2 396.2h3.5v3.5h-3.5zM1198.2 396.2h3.5v3.5h-3.5zM1204.2 396.2h3.5v3.5h-3.5zM1210.2 396.2h3.5v3.5h-3.5zM1216.2 396.2h3.5v3.5h-3.5zM1222.2 396.2h3.5v3.5h-3.5zM1228.2 396.2h3.5v3.5h-3.5zM1318.2 396.2h3.5v3.5h-3.5z" fill="#dedede"/>
<path d="M1144.2 402.2h3.5v3.5h-3.5zM1150.2 402.2h3.5v3.5h-3.5zM1168.2 402.2h3.5v3.5h-3.5zM1180.2 402.2h3.5v3.5h-3.5zM1186.2 402.2h3.5v3.5h-3.5zM1192.2 402.2h3.5v3.5h-3.5zM1198.2 402.2h3.5v3.5h-3.5zM1204.2 402.2h3.5v3.5h-3.5zM1210.2 402.2h3.5v3.5h-3.5zM1234.2 402.2h3.5v3.5h-3.5zM1240.2 402.2h3.5v3.5h-3.5z" fill="#dedede"/>
<path d="M1144.2 408.2h3.5v3.5h-3.5zM1150.2 408.2h3.5v3.5h-3.5zM1156.2 408.2h3.5v3.5h-3.5zM1180.2 408.2h3.5v3.5h-3.5zM1186.2 408.2h3.5v3.5h-3.5zM1192.2 408.2h3.5v3.5h-3.5zM1210.2 408.2h3.5v3.5h-3.5zM1216.2 408.2h3.5v3.5h-3.5zM1222.2 408.2h3.5v3.5h-3.5zM1234.2 408.2h3.5v3.5h-3.5z" fill="#dedede"/>
<path d="M1144.2 414.2h3.5v3.5h-3.5zM1150.2 414.2h3.5v3.5h-3.5zM1156.2 414.2h3.5v3.5h-3.5zM1162.2 414.2h3.5v3.5h-3.5zM1204.2 414.2h3.5v3.5h-3.5zM1210.2 414.2h3.5v3.5h-3.5zM1216.2 414.2h3.5v3.5h-3.5zM1222.2 414.2h3.5v3.5h-3.5zM1228.2 414.2h3.5v3.5h-3.5zM1324.2 414.2h3.5v3.5h-3.5z" fill="#dedede"/>
<path d="M1150.2 420.2h3.5v3.5h-3.5zM1156.2 420.2h3.5v3.5h-3.5zM1162.2 420.2h3.5v3.5h-3.5zM1168.2 420.2h3.5v3.5h-3.5zM1174.2 420.2h3.5v3.5h-3.5zM1210.2 420.2h3.5v3.5h-3.5zM1216.2 420.2h3.5v3.5h-3.5zM1222.2 420.2h3.5v3.5h-3.5zM1228.2 420.2h3.5v3.5h-3.5zM1234.2 420.2h3.5v3.5h-3.5zM1240.2 420.2h3.5v3.5h-3.5zM1318.2 420.2h3.5v3.5h-3.5z" fill="#dedede"/>
<path d="M1150.2 426.2h3.5v3.5h-3.5zM1156.2 426.2h3.5v3.5h-3.5zM1162.2 426.2h3.5v3.5h-3.5zM1168.2 426.2h3.5v3.5h-3.5zM1174.2 426.2h3.5v3.5h-3.5zM1180.2 426.2h3.5v3.5h-3.5zM1186.2 426.2h3.5v3.5h-3.5zM1192.2 426.2h3.5v3.5h-3.5zM1198.2 426.2h3.5v3.5h-3.5zM1204.2 426.2h3.5v3.5h-3.5zM1222.2 426.2h3.5v3.5h-3.5zM1228.2 426.2h3.5v3.5h-3.5zM1318.2 426.2h3.5v3.5h-3.5z" fill="#dedede"/>
<path d="M1144.2 432.2h3.5v3.5h-3.5zM1150.2 432.2h3.5v3.5h-3.5zM1162.2 432.2h3.5v3.5h-3.5zM1168.2 432.2h3.5v3.5h-3.5zM1174.2 432.2h3.5v3.5h-3.5zM1222.2 432.2h3.5v3.5h-3.5zM1228.2 432.2h3.5v3.5h-3.5zM1234.2 432.2h3.5v3.5h-3.5zM1240.2 432.2h3.5v3.5h-3.5z" fill="#dedede"/>
<path d="M1150.2 438.2h3.5v3.5h-3.5zM1162.2 438.2h3.5v3.5h-3.5zM1186.2 438.2h3.5v3.5h-3.5zM1192.2 438.2h3.5v3.5h-3.5zM1216.2 438.2h3.5v3.5h-3.5zM1228.2 438.2h3.5v3.5h-3.5zM1234.2 438.2h3.5v3.5h-3.5zM1240.2 438.2h3.5v3.5h-3.5z" fill="#dedede"/>
<path d="M1144.2 444.2h3.5v3.5h-3.5zM1150.2 444.2h3.5v3.5h-3.5zM1192.2 444.2h3.5v3.5h-3.5zM1204.2 444.2h3.5v3.5h-3.5zM1210.2 444.2h3.5v3.5h-3.5zM1216.2 444.2h3.5v3.5h-3.5zM1222.2 444.2h3.5v3.5h-3.5zM1318.2 444.2h3.5v3.5h-3.5z" fill="#dedede"/>
<path d="M1144.2 450.2h3.5v3.5h-3.5zM1150.2 450.2h3.5v3.5h-3.5zM1168.2 450.2h3.5v3.5h-3.5zM1174.2 450.2h3.5v3.5h-3.5zM1186.2 450.2h3.5v3.5h-3.5zM1192.2 450.2h3.5v3.5h-3.5zM1204.2 450.2h3.5v3.5h-3.5zM1210.2 450.2h3.5v3.5h-3.5zM1216.2 450.2h3.5v3.5h-3.5zM1246.2 450.2h3.5v3.5h-3.5zM1264.2 450.2h3.5v3.5h-3.5zM1282.2 450.2h3.5v3.5h-3.5zM1294.2 450.2h3.5v3.5h-3.5zM1300.2 450.2h3.5v3.5h-3.5zM1306.2 450.2h3.5v3.5h-3.5zM1312.2 450.2h3.5v3.5h-3.5zM1318.2 450.2h3.5v3.5h-3.5z" fill="#dedede"/>
<path d="M1144.2 456.2h3.5v3.5h-3.5zM1150.2 456.2h3.5v3.5h-3.5zM1156.2 456.2h3.5v3.5h-3.5zM1162.2 456.2h3.5v3.5h-3.5zM1192.2 456.2h3.5v3.5h-3.5zM1198.2 456.2h3.5v3.5h-3.5zM1204.2 456.2h3.5v3.5h-3.5zM1210.2 456.2h3.5v3.5h-3.5zM1216.2 456.2h3.5v3.5h-3.5zM1222.2 456.2h3.5v3.5h-3.5zM1228.2 456.2h3.5v3.5h-3.5zM1246.2 456.2h3.5v3.5h-3.5zM1252.2 456.2h3.5v3.5h-3.5zM1270.2 456.2h3.5v3.5h-3.5zM1276.2 456.2h3.5v3.5h-3.5zM1288.2 456.2h3.5v3.5h-3.5zM1294.2 456.2h3.5v3.5h-3.5zM1300.2 456.2h3.5v3.5h-3.5zM1306.2 456.2h3.5v3.5h-3.5zM1312.2 456.2h3.5v3.5h-3.5zM1324.2 456.2h3.5v3.5h-3.5z" fill="#dedede"/>
<path d="M1144.2 462.2h3.5v3.5h-3.5zM1150.2 462.2h3.5v3.5h-3.5zM1156.2 462.2h3.5v3.5h-3.5zM1162.2 462.2h3.5v3.5h-3.5zM1168.2 462.2h3.5v3.5h-3.5zM1210.2 462.2h3.5v3.5h-3.5zM1216.2 462.2h3.5v3.5h-3.5zM1252.2 462.2h3.5v3.5h-3.5zM1264.2 462.2h3.5v3.5h-3.5zM1276.2 462.2h3.5v3.5h-3.5zM1288.2 462.2h3.5v3.5h-3.5zM1294.2 462.2h3.5v3.5h-3.5zM1312.2 462.2h3.5v3.5h-3.5zM1318.2 462.2h3.5v3.5h-3.5zM1324.2 462.2h3.5v3.5h-3.5z" fill="#dedede"/>
<path d="M1161.6 483.6h2.8v2.8h-2.8zM1167.6 483.6h2.8v2.8h-2.8zM1173.6 483.6h2.8v2.8h-2.8zM1179.6 483.6h2.8v2.8h-2.8zM1185.6 483.6h2.8v2.8h-2.8zM1191.6 483.6h2.8v2.8h-2.8zM1203.6 483.6h2.8v2.8h-2.8zM1209.6 483.6h2.8v2.8h-2.8zM1215.6 483.6h2.8v2.8h-2.8z" fill="#e4e4e0"/>
<path d="M1167.6 489.6h2.8v2.8h-2.8zM1173.6 489.6h2.8v2.8h-2.8zM1179.6 489.6h2.8v2.8h-2.8zM1191.6 489.6h2.8v2.8h-2.8zM1209.6 489.6h2.8v2.8h-2.8zM1215.6 489.6h2.8v2.8h-2.8z" fill="#e4e4e0"/>
<path d="M1161.6 495.6h2.8v2.8h-2.8zM1167.6 495.6h2.8v2.8h-2.8zM1173.6 495.6h2.8v2.8h-2.8zM1185.6 495.6h2.8v2.8h-2.8zM1197.6 495.6h2.8v2.8h-2.8zM1209.6 495.6h2.8v2.8h-2.8zM1215.6 495.6h2.8v2.8h-2.8z" fill="#e4e4e0"/>
<path d="M1161.6 501.6h2.8v2.8h-2.8zM1167.6 501.6h2.8v2.8h-2.8zM1173.6 501.6h2.8v2.8h-2.8zM1179.6 501.6h2.8v2.8h-2.8zM1185.6 501.6h2.8v2.8h-2.8zM1191.6 501.6h2.8v2.8h-2.8zM1209.6 501.6h2.8v2.8h-2.8zM1215.6 501.6h2.8v2.8h-2.8z" fill="#e4e4e0"/>
<path d="M1167.6 507.6h2.8v2.8h-2.8zM1173.6 507.6h2.8v2.8h-2.8zM1179.6 507.6h2.8v2.8h-2.8zM1197.6 507.6h2.8v2.8h-2.8zM1203.6 507.6h2.8v2.8h-2.8zM1209.6 507.6h2.8v2.8h-2.8zM1215.6 507.6h2.8v2.8h-2.8z" fill="#e4e4e0"/>
<path d="M1161.6 513.6h2.8v2.8h-2.8zM1173.6 513.6h2.8v2.8h-2.8zM1179.6 513.6h2.8v2.8h-2.8zM1185.6 513.6h2.8v2.8h-2.8zM1209.6 513.6h2.8v2.8h-2.8z" fill="#e4e4e0"/>
<path d="M1240.6 538.6h2.8v2.8h-2.8zM1246.6 538.6h2.8v2.8h-2.8zM1252.6 538.6h2.8v2.8h-2.8zM1258.6 538.6h2.8v2.8h-2.8z" fill="#e4e4e0"/>
<path d="M1240.6 544.6h2.8v2.8h-2.8zM1246.6 544.6h2.8v2.8h-2.8zM1252.6 544.6h2.8v2.8h-2.8zM1258.6 544.6h2.8v2.8h-2.8z" fill="#e4e4e0"/>
<path d="M1240.6 550.6h2.8v2.8h-2.8zM1246.6 550.6h2.8v2.8h-2.8zM1252.6 550.6h2.8v2.8h-2.8zM1258.6 550.6h2.8v2.8h-2.8z" fill="#e4e4e0"/>
<path d="M1240.6 556.6h2.8v2.8h-2.8zM1246.6 556.6h2.8v2.8h-2.8zM1252.6 556.6h2.8v2.8h-2.8zM1258.6 556.6h2.8v2.8h-2.8z" fill="#e4e4e0"/>
<path d="M1240.6 562.6h2.8v2.8h-2.8zM1246.6 562.6h2.8v2.8h-2.8zM1252.6 562.6h2.8v2.8h-2.8z" fill="#e4e4e0"/>
<path d="M1246.6 568.6h2.8v2.8h-2.8zM1252.6 568.6h2.8v2.8h-2.8z" fill="#e4e4e0"/>
<path d="M1240.6 574.6h2.8v2.8h-2.8zM1252.6 574.6h2.8v2.8h-2.8zM1258.6 574.6h2.8v2.8h-2.8z" fill="#e4e4e0"/>
<path d="M844.5 478.5h3v3h-3zM850.5 478.5h3v3h-3zM856.5 478.5h3v3h-3z" fill="#e4e4e0"/>
<path d="M850.5 484.5h3v3h-3zM856.5 484.5h3v3h-3z" fill="#e4e4e0"/>
<path d="M844.5 496.5h3v3h-3zM850.5 496.5h3v3h-3z" fill="#e4e4e0"/>
<path d="M850.5 502.5h3v3h-3z" fill="#e4e4e0"/>
<path d="M844.5 508.5h3v3h-3zM850.5 508.5h3v3h-3zM856.5 508.5h3v3h-3z" fill="#e4e4e0"/>
<path d="M850.5 514.5h3v3h-3z" fill="#e4e4e0"/>
<path d="M844.5 520.5h3v3h-3zM850.5 520.5h3v3h-3zM856.5 520.5h3v3h-3z" fill="#e4e4e0"/>
<path d="M850.5 526.5h3v3h-3z" fill="#e4e4e0"/>
<path d="M844.5 532.5h3v3h-3zM850.5 532.5h3v3h-3z" fill="#e4e4e0"/>
<path d="M844.5 538.5h3v3h-3zM850.5 538.5h3v3h-3zM856.5 538.5h3v3h-3z" fill="#e4e4e0"/>
<path d="M844.5 544.5h3v3h-3zM850.5 544.5h3v3h-3zM856.5 544.5h3v3h-3z" fill="#e4e4e0"/>
<path d="M844.5 550.5h3v3h-3zM856.5 550.5h3v3h-3z" fill="#e4e4e0"/>
<path d="M850.5 556.5h3v3h-3zM856.5 556.5h3v3h-3z" fill="#e4e4e0"/>
<path d="M850.5 562.5h3v3h-3zM856.5 562.5h3v3h-3z" fill="#e4e4e0"/>
<path d="M844.5 568.5h3v3h-3zM850.5 568.5h3v3h-3zM856.5 568.5h3v3h-3z" fill="#e4e4e0"/>
<path d="M844.5 574.5h3v3h-3zM850.5 574.5h3v3h-3zM856.5 574.5h3v3h-3z" fill="#e4e4e0"/>
<path d="M1002.8 506.6h2.8v2.8h-2.8zM1021.4 506.6h2.8v2.8h-2.8zM1027.6 506.6h2.8v2.8h-2.8zM1033.8 506.6h2.8v2.8h-2.8z" fill="#e4e4e0"/>
<path d="M996.6 512.8h2.8v2.8h-2.8zM1009 512.8h2.8v2.8h-2.8zM1015.2 512.8h2.8v2.8h-2.8zM1021.4 512.8h2.8v2.8h-2.8zM1027.6 512.8h2.8v2.8h-2.8zM1046.2 512.8h2.8v2.8h-2.8z" fill="#e4e4e0"/>
<path d="M996.6 519h2.8v2.8h-2.8zM1002.8 519h2.8v2.8h-2.8zM1009 519h2.8v2.8h-2.8zM1027.6 519h2.8v2.8h-2.8zM1033.8 519h2.8v2.8h-2.8zM1040 519h2.8v2.8h-2.8zM1046.2 519h2.8v2.8h-2.8z" fill="#e4e4e0"/>
<path d="M996.6 525.2h2.8v2.8h-2.8zM1002.8 525.2h2.8v2.8h-2.8zM1009 525.2h2.8v2.8h-2.8zM1015.2 525.2h2.8v2.8h-2.8zM1021.4 525.2h2.8v2.8h-2.8zM1040 525.2h2.8v2.8h-2.8z" fill="#e4e4e0"/>
<path d="M1235.5 203.5h3v3h-3zM1241.9 203.5h3v3h-3zM1248.3 203.5h3v3h-3zM1254.7 203.5h3v3h-3zM1267.5 203.5h3v3h-3z" fill="#e4e4e0"/>
<path d="M1235.5 209.9h3v3h-3zM1241.9 209.9h3v3h-3zM1248.3 209.9h3v3h-3z" fill="#e4e4e0"/>
<path d="M1241.9 216.3h3v3h-3zM1248.3 216.3h3v3h-3zM1254.7 216.3h3v3h-3zM1261.1 216.3h3v3h-3zM1267.5 216.3h3v3h-3zM1273.9 216.3h3v3h-3z" fill="#e4e4e0"/>
<path d="M1235.5 222.7h3v3h-3zM1241.9 222.7h3v3h-3zM1254.7 222.7h3v3h-3zM1261.1 222.7h3v3h-3z" fill="#e4e4e0"/>
<path d="M1241.9 229.1h3v3h-3zM1248.3 229.1h3v3h-3zM1254.7 229.1h3v3h-3zM1267.5 229.1h3v3h-3z" fill="#e4e4e0"/>
<path d="M1235.5 235.5h3v3h-3zM1248.3 235.5h3v3h-3zM1254.7 235.5h3v3h-3zM1261.1 235.5h3v3h-3zM1267.5 235.5h3v3h-3zM1273.9 235.5h3v3h-3z" fill="#e4e4e0"/>
<path d="M1173.7 470.7h2.6v2.6h-2.6zM1185.7 470.7h2.6v2.6h-2.6zM1203.7 470.7h2.6v2.6h-2.6zM1209.7 470.7h2.6v2.6h-2.6z" fill="#e4e4e0"/>
<path d="M1191.7 476.7h2.6v2.6h-2.6zM1197.7 476.7h2.6v2.6h-2.6zM1209.7 476.7h2.6v2.6h-2.6z" fill="#e4e4e0"/>
<path d="M1306.7 464.7h2.6v2.6h-2.6zM1320.7 464.7h2.6v2.6h-2.6zM1327.7 464.7h2.6v2.6h-2.6z" fill="#e4e4e0"/>
<path d="M1250.7 471.7h2.6v2.6h-2.6zM1257.7 471.7h2.6v2.6h-2.6zM1313.7 471.7h2.6v2.6h-2.6z" fill="#e4e4e0"/>
<path d="M1064.8 453.6h2.8v2.8h-2.8z" fill="#e4e4e0"/>
<path d="M1071 466h2.8v2.8h-2.8zM1077.2 466h2.8v2.8h-2.8z" fill="#e4e4e0"/>
<path d="M1058.6 472.2h2.8v2.8h-2.8zM1071 472.2h2.8v2.8h-2.8z" fill="#e4e4e0"/>
<path d="M1064.8 478.4h2.8v2.8h-2.8zM1077.2 478.4h2.8v2.8h-2.8z" fill="#e4e4e0"/>
<path d="M1111 453.6h2.8v2.8h-2.8zM1123.4 453.6h2.8v2.8h-2.8zM1148.2 453.6h2.8v2.8h-2.8z" fill="#e4e4e0"/>
<path d="M1123.4 459.8h2.8v2.8h-2.8zM1142 459.8h2.8v2.8h-2.8zM1148.2 459.8h2.8v2.8h-2.8z" fill="#e4e4e0"/>
<path d="M1098.6 466h2.8v2.8h-2.8zM1117.2 466h2.8v2.8h-2.8zM1142 466h2.8v2.8h-2.8z" fill="#e4e4e0"/>
<path d="M1111 472.2h2.8v2.8h-2.8zM1117.2 472.2h2.8v2.8h-2.8zM1123.4 472.2h2.8v2.8h-2.8zM1142 472.2h2.8v2.8h-2.8zM1148.2 472.2h2.8v2.8h-2.8z" fill="#e4e4e0"/>
<path d="M1142 478.4h2.8v2.8h-2.8z" fill="#e4e4e0"/>
<path d="M1123.4 484.6h2.8v2.8h-2.8z" fill="#e4e4e0"/>
<path d="M1160.4 303.5h2v2h-2zM1160.4 353.5h2v2h-2zM1164 303.5h2v2h-2zM1164 353.5h2v2h-2zM1167.6 303.5h2v2h-2zM1167.6 353.5h2v2h-2zM1171.2 303.5h2v2h-2zM1171.2 353.5h2v2h-2zM1174.8 303.5h2v2h-2zM1174.8 353.5h2v2h-2zM1178.4 303.5h2v2h-2zM1178.4 353.5h2v2h-2zM1182 303.5h2v2h-2zM1182 353.5h2v2h-2zM1185.6 303.5h2v2h-2zM1185.6 353.5h2v2h-2zM1189.2 303.5h2v2h-2zM1189.2 353.5h2v2h-2zM1192.8 303.5h2v2h-2zM1192.8 353.5h2v2h-2zM1196.4 303.5h2v2h-2zM1196.4 353.5h2v2h-2zM1200 303.5h2v2h-2zM1200 353.5h2v2h-2zM1203.6 303.5h2v2h-2zM1203.6 353.5h2v2h-2zM1207.2 303.5h2v2h-2zM1207.2 353.5h2v2h-2zM1210.8 303.5h2v2h-2zM1210.8 353.5h2v2h-2zM1214.4 303.5h2v2h-2zM1214.4 353.5h2v2h-2zM1218 303.5h2v2h-2zM1218 353.5h2v2h-2zM1221.6 303.5h2v2h-2zM1221.6 353.5h2v2h-2zM1225.2 303.5h2v2h-2zM1225.2 353.5h2v2h-2zM1228.8 303.5h2v2h-2zM1228.8 353.5h2v2h-2zM1232.4 303.5h2v2h-2zM1232.4 353.5h2v2h-2zM1236 303.5h2v2h-2zM1236 353.5h2v2h-2zM1156.4 307.5h2v2h-2zM1239.6 307.5h2v2h-2zM1156.4 311.1h2v2h-2zM1239.6 311.1h2v2h-2zM1156.4 314.7h2v2h-2zM1239.6 314.7h2v2h-2zM1156.4 318.3h2v2h-2zM1239.6 318.3h2v2h-2zM1156.4 321.9h2v2h-2zM1239.6 321.9h2v2h-2zM1156.4 325.5h2v2h-2zM1239.6 325.5h2v2h-2zM1156.4 329.1h2v2h-2zM1239.6 329.1h2v2h-2zM1156.4 332.7h2v2h-2zM1239.6 332.7h2v2h-2zM1156.4 336.3h2v2h-2zM1239.6 336.3h2v2h-2zM1156.4 339.9h2v2h-2zM1239.6 339.9h2v2h-2zM1156.4 343.5h2v2h-2zM1239.6 343.5h2v2h-2zM1156.4 347.1h2v2h-2zM1239.6 347.1h2v2h-2zM1156.4 350.7h2v2h-2zM1239.6 350.7h2v2h-2z" fill="#d8d8d4"/>
<path d="M1251.5 381.2h2v2h-2zM1251.5 447.5h2v2h-2zM1255.1 381.2h2v2h-2zM1255.1 447.5h2v2h-2zM1258.7 381.2h2v2h-2zM1258.7 447.5h2v2h-2zM1262.3 381.2h2v2h-2zM1262.3 447.5h2v2h-2zM1265.9 381.2h2v2h-2zM1265.9 447.5h2v2h-2zM1269.5 381.2h2v2h-2zM1269.5 447.5h2v2h-2zM1273.1 381.2h2v2h-2zM1273.1 447.5h2v2h-2zM1276.7 381.2h2v2h-2zM1276.7 447.5h2v2h-2zM1280.3 381.2h2v2h-2zM1280.3 447.5h2v2h-2zM1283.9 381.2h2v2h-2zM1283.9 447.5h2v2h-2zM1287.5 381.2h2v2h-2zM1287.5 447.5h2v2h-2zM1291.1 381.2h2v2h-2zM1291.1 447.5h2v2h-2zM1294.7 381.2h2v2h-2zM1294.7 447.5h2v2h-2zM1298.3 381.2h2v2h-2zM1298.3 447.5h2v2h-2zM1301.9 381.2h2v2h-2zM1301.9 447.5h2v2h-2zM1305.5 381.2h2v2h-2zM1305.5 447.5h2v2h-2zM1309.1 381.2h2v2h-2zM1309.1 447.5h2v2h-2zM1312.7 381.2h2v2h-2zM1312.7 447.5h2v2h-2zM1247.5 385.2h2v2h-2zM1315.8 385.2h2v2h-2zM1247.5 388.8h2v2h-2zM1315.8 388.8h2v2h-2zM1247.5 392.4h2v2h-2zM1315.8 392.4h2v2h-2zM1247.5 396h2v2h-2zM1315.8 396h2v2h-2zM1247.5 399.6h2v2h-2zM1315.8 399.6h2v2h-2zM1247.5 403.2h2v2h-2zM1315.8 403.2h2v2h-2zM1247.5 406.8h2v2h-2zM1315.8 406.8h2v2h-2zM1247.5 410.4h2v2h-2zM1315.8 410.4h2v2h-2zM1247.5 414h2v2h-2zM1315.8 414h2v2h-2zM1247.5 417.6h2v2h-2zM1315.8 417.6h2v2h-2zM1247.5 421.2h2v2h-2zM1315.8 421.2h2v2h-2zM1247.5 424.8h2v2h-2zM1315.8 424.8h2v2h-2zM1247.5 428.4h2v2h-2zM1315.8 428.4h2v2h-2zM1247.5 432h2v2h-2zM1315.8 432h2v2h-2zM1247.5 435.6h2v2h-2zM1315.8 435.6h2v2h-2zM1247.5 439.2h2v2h-2zM1315.8 439.2h2v2h-2zM1247.5 442.8h2v2h-2zM1315.8 442.8h2v2h-2zM1247.5 446.4h2v2h-2zM1315.8 446.4h2v2h-2z" fill="#d8d8d4"/>
<path d="M1059.9 368.5h1.8v1.8h-1.8zM1059.9 409.9h1.8v1.8h-1.8zM1063.5 368.5h1.8v1.8h-1.8zM1063.5 409.9h1.8v1.8h-1.8zM1067.1 368.5h1.8v1.8h-1.8zM1067.1 409.9h1.8v1.8h-1.8zM1070.7 368.5h1.8v1.8h-1.8zM1070.7 409.9h1.8v1.8h-1.8zM1074.3 368.5h1.8v1.8h-1.8zM1074.3 409.9h1.8v1.8h-1.8zM1077.9 368.5h1.8v1.8h-1.8zM1077.9 409.9h1.8v1.8h-1.8zM1081.5 368.5h1.8v1.8h-1.8zM1081.5 409.9h1.8v1.8h-1.8zM1085.1 368.5h1.8v1.8h-1.8zM1085.1 409.9h1.8v1.8h-1.8zM1088.7 368.5h1.8v1.8h-1.8zM1088.7 409.9h1.8v1.8h-1.8zM1092.3 368.5h1.8v1.8h-1.8zM1092.3 409.9h1.8v1.8h-1.8zM1095.9 368.5h1.8v1.8h-1.8zM1095.9 409.9h1.8v1.8h-1.8zM1056.1 372.3h1.8v1.8h-1.8zM1097.5 372.3h1.8v1.8h-1.8zM1056.1 375.9h1.8v1.8h-1.8zM1097.5 375.9h1.8v1.8h-1.8zM1056.1 379.5h1.8v1.8h-1.8zM1097.5 379.5h1.8v1.8h-1.8zM1056.1 383.1h1.8v1.8h-1.8zM1097.5 383.1h1.8v1.8h-1.8zM1056.1 386.7h1.8v1.8h-1.8zM1097.5 386.7h1.8v1.8h-1.8zM1056.1 390.3h1.8v1.8h-1.8zM1097.5 390.3h1.8v1.8h-1.8zM1056.1 393.9h1.8v1.8h-1.8zM1097.5 393.9h1.8v1.8h-1.8zM1056.1 397.5h1.8v1.8h-1.8zM1097.5 397.5h1.8v1.8h-1.8zM1056.1 401.1h1.8v1.8h-1.8zM1097.5 401.1h1.8v1.8h-1.8zM1056.1 404.7h1.8v1.8h-1.8zM1097.5 404.7h1.8v1.8h-1.8zM1056.1 408.3h1.8v1.8h-1.8zM1097.5 408.3h1.8v1.8h-1.8z" fill="#d8d8d4"/>
<path d="M1223.1 475.5h1.6v1.6h-1.6zM1223.1 501.6h1.6v1.6h-1.6zM1226.5 475.5h1.6v1.6h-1.6zM1226.5 501.6h1.6v1.6h-1.6zM1229.9 475.5h1.6v1.6h-1.6zM1229.9 501.6h1.6v1.6h-1.6zM1233.3 475.5h1.6v1.6h-1.6zM1233.3 501.6h1.6v1.6h-1.6zM1236.7 475.5h1.6v1.6h-1.6zM1236.7 501.6h1.6v1.6h-1.6zM1240.1 475.5h1.6v1.6h-1.6zM1240.1 501.6h1.6v1.6h-1.6zM1243.5 475.5h1.6v1.6h-1.6zM1243.5 501.6h1.6v1.6h-1.6zM1219.5 479.1h1.6v1.6h-1.6zM1245.6 479.1h1.6v1.6h-1.6zM1219.5 482.5h1.6v1.6h-1.6zM1245.6 482.5h1.6v1.6h-1.6zM1219.5 485.9h1.6v1.6h-1.6zM1245.6 485.9h1.6v1.6h-1.6zM1219.5 489.3h1.6v1.6h-1.6zM1245.6 489.3h1.6v1.6h-1.6zM1219.5 492.7h1.6v1.6h-1.6zM1245.6 492.7h1.6v1.6h-1.6zM1219.5 496.1h1.6v1.6h-1.6zM1245.6 496.1h1.6v1.6h-1.6zM1219.5 499.5h1.6v1.6h-1.6zM1245.6 499.5h1.6v1.6h-1.6z" fill="#d8d8d4"/>
<rect x="869.8" y="370.3" width="58.4" height="61.4" fill="#111213" rx="1.5"/>
<rect x="946" y="336.6" width="35.7" height="35.7" fill="#54585a" rx="1.5"/>
<rect x="941" y="388.1" width="33.7" height="23.8" fill="#9a8b78" rx="1.5"/>
<rect x="864.8" y="330.7" width="19.8" height="23.8" fill="#7c7c78" rx="1.5"/>
<rect x="845" y="345.5" width="16.8" height="24.8" fill="#7c7a74" rx="1.5"/>
<rect x="1057.9" y="370.3" width="39.6" height="39.6" fill="#17191a" rx="1.5"/>
<rect x="1158.4" y="305.5" width="81.2" height="48" fill="#2b2d2e" rx="1.5"/>
<rect x="1249.5" y="383.2" width="66.3" height="64.3" fill="#383b3c" rx="1.5"/>
<rect x="625" y="458.7" width="72.1" height="73.3" fill="#0f1011" rx="1.5"/>
<rect x="709.4" y="473.5" width="33" height="24.5" fill="#8c8274" rx="1.5"/>
<rect x="712" y="452" width="23" height="16" fill="#8a867c" rx="1.5"/>
<rect x="716.7" y="511" width="25.3" height="21" fill="#a8a49c" rx="1.5"/>
<rect x="656.8" y="543.2" width="33" height="24.5" fill="#a6a29a" rx="1.5"/>
<rect x="691" y="535" width="25" height="20" fill="#a6a29a" rx="1.5"/>
<rect x="721.5" y="381" width="21.5" height="23" fill="#4a4e4c" rx="1.5"/>
<rect x="683" y="416" width="24.5" height="32" fill="#a9a9a4" rx="1.5"/>
<rect x="712.5" y="438" width="24.5" height="32" fill="#8c867a" rx="1.5"/>
<rect x="842" y="345" width="20" height="27" fill="#86847e" rx="1.5"/>
<rect x="1221.1" y="477.1" width="24.5" height="24.5" fill="#2e3031" rx="1.5"/>
<rect x="1160" y="540" width="16" height="25" fill="#1a1b1c" rx="1.5"/>
<rect x="1176" y="545" width="39" height="30" fill="#15161a" rx="1.5"/>
<rect x="1217" y="545.6" width="21.2" height="25.7" fill="#c9c7c0" rx="1.5"/>
<rect x="1312" y="562" width="43" height="24" fill="#1b1c1d" rx="1.5"/>
<rect x="1153.5" y="377.2" width="21.7" height="16.8" fill="#8794b9" rx="1"/>
<rect x="1184" y="371" width="21" height="17" fill="#8794b9" rx="1"/>
<rect x="1224" y="373" width="13" height="17" fill="#8794b9" rx="1"/>
<rect x="1191" y="404" width="21" height="17" fill="#8794b9" rx="1"/>
<rect x="1251" y="348" width="11" height="14" fill="#8794b9" rx="1"/>
<rect x="1117" y="423" width="11" height="14" fill="#8794b9" rx="1"/>
<rect x="1101" y="455" width="15" height="13" fill="#8794b9" rx="1"/>
<rect x="1149" y="448" width="13" height="14" fill="#8794b9" rx="1"/>
<rect x="1047" y="438" width="12" height="10" fill="#8794b9" rx="1"/>
<rect x="1128" y="402" width="11" height="12" fill="#8794b9" rx="1"/>
<rect x="1147" y="407" width="22" height="17" fill="#27332b" rx="1"/>
<rect x="1219" y="432" width="18" height="15" fill="#3b4140" rx="1"/>
<g fill="none" stroke="#6f7475" stroke-width="1.100"><path d="M1225 326l6-5 6 5M1225 332l6-5 6 5M1225 338l6-5 6 5" transform="rotate(90 1231 330)"/><path d="M1257 400l8-7 8 7M1257 406l8-7 8 7M1257 412l8-7 8 7"/></g>
<text font-family="Liberation Mono,monospace" font-size="6.500" fill="#7d8283" transform="translate(1204 314) rotate(90)">RF5422</text>
<text font-family="Liberation Mono,monospace" font-size="7.500" fill="#8a8f90" transform="translate(1286 441) rotate(-90)">RF5216A</text>
<text font-family="Liberation Mono,monospace" font-size="7.500" fill="#8a8f90" transform="translate(1296 441) rotate(-90)">F70263K</text>
<circle cx="1259" cy="431" r="2.5" fill="#6a6e6e"/>
<path d="M681.8 312.5h20.8v8.3h-20.8zM716.5 312.5h19.8v8.3h-19.8zM752 312.5h21v8.3h-21zM786.8 312.5h14.8v8.3h-14.8zM816.5 312.5h18.8v8.3h-18.8zM849 312.5h18.8v8.3h-18.8zM881.6 312.5h18.8v8.3h-18.8zM915.3 312.5h18.7v8.3h-18.7zM949 312.5h19v8.3h-19zM981.6 312.5h18.8v8.3h-18.8zM1036 312.5h19v8.3h-19zM675.9 319.8h7.5v22.8h-7.5zM609 347.1h19v7.9h-19zM644.2 347.1h20.8v7.9h-20.8zM593 359.4h7.3v19.8h-7.3zM593 392h7.3v20.9h-7.3zM593 426.7h7.3v17.9h-7.3zM593 468.6h7.3v19.5h-7.3zM593 499.1h7.3v15.9h-7.3zM593 524.8h7.3v14.7h-7.3zM593 549.3h7.3v17.1h-7.3zM598 574.5h20.3v7.8h-20.3zM629.8 574.5h19.6v7.8h-19.6zM656.8 574.5h19.5v7.8h-19.5zM686.1 574.5h20.3v7.8h-20.3zM718.7 574.5h19.5v7.8h-19.5zM750.5 574.5h20v7.8h-20zM779.8 574.5h20.1v7.8h-20.1zM811.6 574.5h20.1v7.8h-20.1zM842.7 574.5h21.9v7.8h-21.9zM865.8 480.8h7.3v19.6h-7.3zM865.8 512.6h7.3v22h-7.3zM865.8 548h7.3v19.7h-7.3zM913.5 461h15.9v7.6h-15.9zM938 461h18.3v7.6h-18.3zM966.8 461h18.9v7.6h-18.9zM1086 466h8v21h-8zM1099.5 496.2h22v7.6h-22zM1124.5 496.2h20.8v7.6h-20.8zM998 496.2h19.5v7.8h-19.5zM1029.7 496.2h19.6v7.8h-19.6zM998 532.2h19.5v7.3h-19.5zM1029.7 532.2h19.6v7.3h-19.6zM987 506.5h6.8v23.2h-6.8zM1052.5 507.7h6.5v20.8h-6.5zM1007.4 335.6h7.5v20.8h-7.5zM1007.4 369.3h7.5v20.8h-7.5zM1007.4 400h7.5v21.8h-7.5zM1007.4 433.7h7.5v19.8h-7.5zM1019.3 325.7h6.3v21.8h-6.3zM1019.3 358.4h6.3v20.8h-6.3zM1019.3 390.1h6.3v20.8h-6.3zM1019.3 419.8h6.3v19.8h-6.3zM1025.2 452.5h37.6v5.9h-37.6zM1068.8 452.5h20.8v5.9h-20.8zM1136.5 370.3h7.5v19.8h-7.5zM1136.5 395h7.5v20.8h-7.5zM1136.5 420.8h7.5v21.8h-7.5zM1107.9 278.8h16.9v7.9h-16.9zM1135.6 278.8h21.8v7.9h-21.8zM1166.3 278.8h25.7v7.9h-25.7zM1197 278.8h21.8v7.9h-21.8zM1228.3 278.8h21.2v7.9h-21.2zM1258.4 278.8h22.8v7.9h-22.8zM1331.3 321.8h9v20.8h-9zM1331.3 350.5h9v19.8h-9zM1331.3 379.2h9v19.8h-9zM1331.3 408.9h9v19.8h-9zM1331.3 437.6h9v20.8h-9zM1331.3 466.9h9v19.5h-9zM1149 504h7.8v20.8h-7.8zM1149 529.2h7.8v20.1h-7.8zM1149 555.4h7.8v23.3h-7.8zM1169.7 526.6h28.2v7.3h-28.2zM1201.5 526.6h23.3v7.3h-23.3zM1232.1 526.6h20.8v7.3h-20.8zM1156.8 583.6h20.2v8.5h-20.2zM1188 583.6h20.1v8.5h-20.1zM1219.4 583.6h20.1v8.5h-20.1zM1248 583.6h20.3v8.5h-20.3zM1266.4 545.1h7.8v27.5h-7.8zM1310.4 510h19.6v8h-19.6z" fill="#b0b4b7"/>
<path d="M683.8 316.6H700.6M718.5 316.6H734.3M754 316.6H771M788.8 316.6H799.6M818.5 316.6H833.3M851 316.6H865.8M883.6 316.6H898.4M917.3 316.6H932M951 316.6H966M983.6 316.6H998.4M1038 316.6H1053M679.6 321.8V340.6M611 351.1H626M646.2 351.1H663M596.6 361.4V377.2M596.6 394V410.9M596.6 428.7V442.6M596.6 470.6V486.1M596.6 501.1V513M596.6 526.8V537.5M596.6 551.3V564.4M600 578.4H616.3M631.8 578.4H647.4M658.8 578.4H674.3M688.1 578.4H704.4M720.7 578.4H736.2M752.5 578.4H768.5M781.8 578.4H797.9M813.6 578.4H829.7M844.7 578.4H862.6M869.5 482.8V498.4M869.5 514.6V532.6M869.5 550V565.7M915.5 464.8H927.4M940 464.8H954.3M968.8 464.8H983.7M1090 468V485M1101.5 500H1119.5M1126.5 500H1143.3M1000 500.1H1015.5M1031.7 500.1H1047.3M1000 535.9H1015.5M1031.7 535.9H1047.3M990.4 508.5V527.7M1055.8 509.7V526.5M1011.1 337.6V354.4M1011.1 371.3V388.1M1011.1 402V419.8M1011.1 435.7V451.5M1022.4 327.7V345.5M1022.4 360.4V377.2M1022.4 392.1V408.9M1022.4 421.8V437.6M1027.2 455.4H1060.8M1070.8 455.4H1087.6M1140.2 372.3V388.1M1140.2 397V413.8M1140.2 422.8V440.6M1109.9 282.8H1122.8M1137.6 282.8H1155.4M1168.3 282.8H1190M1199 282.8H1216.8M1230.3 282.8H1247.5M1260.4 282.8H1279.2M1335.8 323.8V340.6M1335.8 352.5V368.3M1335.8 381.2V397M1335.8 410.9V426.7M1335.8 439.6V456.4M1335.8 468.9V484.4M1152.9 506V522.8M1152.9 531.2V547.3M1152.9 557.4V576.7M1171.7 530.2H1195.9M1203.5 530.2H1222.8M1234.1 530.2H1250.9M1158.8 587.9H1175M1190 587.9H1206.1M1221.4 587.9H1237.5M1250 587.9H1266.3M1270.3 547.1V570.6M1312.4 514H1328" stroke="#e8eaeb" stroke-width="1.800" fill="none"/>
<g stroke="#c6cacd" stroke-width="8" fill="none"><path d="M1300 282l17 14.500M1321 303l13.500 11.500M1077 308.500l15.500-14M1282 533l14-13"/></g>
<g stroke="#f4f6f7" stroke-width="2.500" fill="none"><path d="M1302 283.500l13 11.500M1323 304.500l10 8.500M1079 306.500l11.500-10M1284 531l10-9"/></g>
<rect x="649.8" y="182.2" width="122.6" height="110.5" fill="url(#cut)" rx="8"/>
<rect x="910" y="217" width="146" height="76" fill="url(#cut)" rx="5"/>
<circle cx="620.5" cy="210" r="10.7" fill="#7a6a48"/>
<circle cx="620.5" cy="210" r="9.5" fill="#cfd4c6"/>
<circle cx="624.4" cy="239.2" r="10.7" fill="#7a6a48"/>
<circle cx="624.4" cy="239.2" r="9.5" fill="#cfd4c6"/>
<circle cx="929.2" cy="186.1" r="10.7" fill="#7a6a48"/>
<circle cx="929.2" cy="186.1" r="9.5" fill="#cfd4c6"/>
<circle cx="1097.5" cy="187.3" r="11.2" fill="#7a6a48"/>
<circle cx="1097.5" cy="187.3" r="10" fill="#cfd4c6"/>
<circle cx="1343.2" cy="210.5" r="11.2" fill="#7a6a48"/>
<circle cx="1343.2" cy="210.5" r="10" fill="#cfd4c6"/>
<circle cx="1359.8" cy="242.8" r="10.2" fill="#7a6a48"/>
<circle cx="1359.8" cy="242.8" r="9" fill="#cfd4c6"/>
<path d="M891.500 220h30.500v14l-6 5v44l6 6h12l3-5h8v8h-43.500v-35l-10.500-10z" fill="#b4b1a8"/>
<rect x="906.4" y="292" width="43.2" height="15.5" fill="#c9c7c0"/>
<rect x="906.4" y="297" width="43.2" height="3" fill="#8e8b82"/>
<path d="M1070.700 228h-29.500v10l6 5v40l-6 6h-12l-3-5h-9v8h38.500v-32l15-10z" fill="#b4b1a8"/>
<rect x="1013.3" y="292" width="42.7" height="15.5" fill="#c9c7c0"/>
<rect x="1013.3" y="297" width="42.7" height="3" fill="#8e8b82"/>
<rect x="953.5" y="183.4" width="40.5" height="15.2" fill="#c2b89e" rx="1"/>
<rect x="967.5" y="186.4" width="20.5" height="9.2" fill="#8a7a52"/>
<rect x="953.5" y="196.1" width="40.5" height="2.5" fill="#e4e6e6"/>
<rect x="1027.2" y="183.4" width="40.6" height="15.2" fill="#c2b89e" rx="1"/>
<rect x="1041.2" y="186.4" width="20.6" height="9.2" fill="#8a7a52"/>
<rect x="1027.2" y="196.1" width="40.6" height="2.5" fill="#e4e6e6"/>
<rect x="1261.4" y="185.7" width="40.6" height="14.9" fill="#c2b89e" rx="1"/>
<rect x="1275.4" y="188.7" width="20.6" height="8.9" fill="#8a7a52"/>
<rect x="1261.4" y="198.1" width="40.6" height="2.5" fill="#e4e6e6"/>
<rect x="587.8" y="236.6" width="13.8" height="40.3" fill="#b9bab8" rx="2"/>
<rect x="592" y="240" width="5" height="32" fill="#ecedec" rx="1"/>
<rect x="583" y="290" width="39" height="40" fill="#c3a55f" rx="12"/>
<circle cx="601.6" cy="309.5" r="9.5" fill="#b9beb0"/>
<circle cx="590" cy="300" r="9" fill="#a8752c"/>
<circle cx="880.6" cy="269.9" r="19" fill="#c3a55f"/>
<circle cx="880.6" cy="269.9" r="10" fill="#b9beb0"/>
<circle cx="1078.7" cy="272.9" r="15" fill="#b99a50"/>
<circle cx="1078.7" cy="272.9" r="10" fill="#b9beb0"/>
<circle cx="1228.3" cy="181.8" r="11" fill="#c48c3c"/>
<circle cx="1228.3" cy="181.8" r="4.5" fill="#d8cba8"/>
<circle cx="1363.4" cy="310.5" r="22" fill="#c3a55f"/>
<circle cx="1363.4" cy="310.5" r="10" fill="#b9beb0"/>
<circle cx="606.1" cy="628.8" r="16" fill="#c3a55f"/>
<circle cx="606.1" cy="628.8" r="9" fill="#b9beb0"/>
<circle cx="640.9" cy="639.8" r="21" fill="#c3a55f"/>
<circle cx="640.9" cy="639.8" r="10" fill="#b9beb0"/>
<circle cx="630.6" cy="617.1" r="9" fill="#5c4c30"/>
<circle cx="630.6" cy="617.1" r="7" fill="#b9beb0"/>
<circle cx="593.1" cy="595.3" r="10" fill="#6b5425"/>
<circle cx="593.1" cy="595.3" r="5" fill="#c3a55f"/>
<circle cx="969.3" cy="622.7" r="22" fill="#c6a85e"/>
<circle cx="969.3" cy="622.7" r="9" fill="#aab09f"/>
<circle cx="1364.7" cy="624.4" r="20.5" fill="#c3a55f"/>
<circle cx="1364.7" cy="624.4" r="9.5" fill="#b9beb0"/>
<circle cx="1366.2" cy="548" r="10" fill="#6b5425"/>
<circle cx="1366.2" cy="548" r="5" fill="#c3a55f"/>
<rect x="958" y="572.6" width="16.2" height="15.1" fill="#c3a55f"/>
<circle cx="987.6" cy="579.9" r="8" fill="#c3a55f"/>
<circle cx="1008.9" cy="579.9" r="8" fill="#c3a55f"/>
<circle cx="1030.5" cy="579.9" r="8" fill="#c3a55f"/>
<circle cx="1051.8" cy="579.9" r="8" fill="#c3a55f"/>
<circle cx="1134.3" cy="648.9" r="7" fill="#c3a55f"/>
<circle cx="1160.4" cy="648.9" r="7" fill="#c3a55f"/>
<circle cx="1206.4" cy="646" r="6.5" fill="#c3a55f"/>
<circle cx="1228" cy="646" r="6.5" fill="#c3a55f"/>
<circle cx="1249.5" cy="646" r="6.5" fill="#c3a55f"/>
<circle cx="1271" cy="646" r="6.5" fill="#c3a55f"/>
<circle cx="1292.4" cy="646" r="6.5" fill="#c3a55f"/>
<circle cx="1313.6" cy="646" r="6.5" fill="#c3a55f"/>
<circle cx="1067.7" cy="622" r="6.3" fill="#c3a55f"/>
<circle cx="1089" cy="622" r="6.3" fill="#c3a55f"/>
<rect x="920.4" y="543.2" width="23.7" height="36" fill="#d98a3c"/>
<rect x="922.6" y="545.4" width="19.3" height="31.6" fill="#c9ccd0"/>
<rect x="922.6" y="560" width="19.3" height="2" fill="#d98a3c"/>
<rect x="931.5" y="545.4" width="1.5" height="31.6" fill="#9a9c9c"/>
<g font-family="Liberation Sans,sans-serif" fill="#c3a55f" font-size="9" font-weight="bold"><text x="916" y="538" font-size="11" font-weight="normal">BF</text><text transform="translate(1002.500 593.500) rotate(90)">MY</text><text transform="translate(1014 593.500) rotate(90)">RU</text><text transform="translate(1026 595) rotate(90)">A</text><text x="1001.500" y="636.300" font-size="11" font-weight="normal" letter-spacing=".6">PH IN</text></g>
<path d="M1004.500 610.500h3v3h-3zM1016 610.500h3v3h-3zM1004.500 616.500h3v3h-3zM1016 616.500h3v3h-3zM1027.500 616.500h3v3h-3zM1004.500 622.500h3v3h-3zM1010.500 622.500h3v3h-3zM1021.500 622.500h3v3h-3zM1027.500 622.500h3v3h-3z" fill="#e4e4e0"/>
<path d="M1086 598.800h11.500M1091.700 593v11.500M1351 433h10v9M1378 448v10h-10" stroke="#c3a55f" stroke-width="2" fill="none"/>
<rect x="1343" y="381.5" width="18" height="10" fill="#e6e6e2" rx="5"/>
<rect x="1347" y="385" width="10" height="3" fill="#a8a8a4" rx="1.5"/>
<rect x="1320" y="548" width="18" height="10" fill="#e6e6e2" rx="5"/>
<rect x="1324" y="551.5" width="10" height="3" fill="#a8a8a4" rx="1.5"/>
<rect x="1300" y="523" width="15" height="17" fill="#d98a3c"/>
<rect x="1301.5" y="524.5" width="11.5" height="14" fill="#d0d2d2"/>
<rect x="1340" y="523" width="14" height="17" fill="#d98a3c"/>
<rect x="1341.5" y="524.5" width="11" height="14" fill="#d0d2d2"/>
<rect x="1313" y="558" width="3" height="7" fill="#dcdcd8"/>
<rect x="1313" y="583" width="3" height="7" fill="#dcdcd8"/>
<rect x="1318.5" y="558" width="3" height="7" fill="#dcdcd8"/>
<rect x="1318.5" y="583" width="3" height="7" fill="#dcdcd8"/>
<rect x="1324" y="558" width="3" height="7" fill="#dcdcd8"/>
<rect x="1324" y="583" width="3" height="7" fill="#dcdcd8"/>
<rect x="1329.5" y="558" width="3" height="7" fill="#dcdcd8"/>
<rect x="1329.5" y="583" width="3" height="7" fill="#dcdcd8"/>
<rect x="1335" y="558" width="3" height="7" fill="#dcdcd8"/>
<rect x="1335" y="583" width="3" height="7" fill="#dcdcd8"/>
<rect x="1309" y="560" width="9" height="6" fill="#dcdcd8"/>
<rect x="1309" y="582" width="9" height="6" fill="#dcdcd8"/>
<rect x="1348" y="560" width="9" height="6" fill="#dcdcd8"/>
<rect x="1348" y="582" width="9" height="6" fill="#dcdcd8"/>
<g transform="rotate(35 1299 239.200)"><rect x="1280" y="229" width="38" height="20.500" rx="2" fill="#bdbdb8"/><rect x="1285" y="233" width="28" height="12.500" fill="#e6e6e2"/><rect x="1287" y="235" width="24" height="8.500" fill="#a9a9a4"/></g>
<rect x="1239.5" y="241.6" width="24" height="26" fill="#b39a58" rx="2"/>
<rect x="1244.5" y="264.6" width="14" height="5" fill="#d6d6d2"/>
<circle cx="1251.5" cy="254.6" r="8.5" fill="#d9be78"/>
<circle cx="1251.5" cy="254.6" r="6.5" fill="#2a3140"/>
<circle cx="1251.5" cy="254.6" r="1.8" fill="#d9a520"/>
<rect x="632.5" y="312.5" width="24" height="26" fill="#b39a58" rx="2"/>
<rect x="637.5" y="335.5" width="14" height="5" fill="#d6d6d2"/>
<circle cx="644.5" cy="325.5" r="8.5" fill="#d9be78"/>
<circle cx="644.5" cy="325.5" r="6.5" fill="#2a3140"/>
<circle cx="644.5" cy="325.5" r="1.8" fill="#d9a520"/>
<rect x="1350" y="476" width="24" height="29" fill="#c9c9c4" rx="2"/>
<circle cx="1361.8" cy="490.6" r="9" fill="#2a2620"/>
<circle cx="1361.800" cy="490.600" r="6" fill="none" stroke="#c3a55f" stroke-width="1.300"/>
<circle cx="1361.8" cy="490.6" r="1.5" fill="#c3a55f"/>
<rect x="1237" y="218" width="40" height="20" fill="#1c2122" rx="5"/>
<path d="M1239.5 207.5h3v3h-3zM1245.9 207.5h3v3h-3zM1252.3 207.5h3v3h-3zM1258.7 207.5h3v3h-3zM1271.5 207.5h3v3h-3z" fill="#e4e4e0"/>
<path d="M1239.5 213.9h3v3h-3zM1245.9 213.9h3v3h-3zM1258.7 213.9h3v3h-3zM1265.1 213.9h3v3h-3z" fill="#e4e4e0"/>
<path d="M1245.9 220.3h3v3h-3zM1252.3 220.3h3v3h-3zM1258.7 220.3h3v3h-3zM1265.1 220.3h3v3h-3z" fill="#e4e4e0"/>
<path d="M1239.5 226.7h3v3h-3zM1245.9 226.7h3v3h-3zM1265.1 226.7h3v3h-3z" fill="#e4e4e0"/>
<path d="M1245.9 233.1h3v3h-3zM1252.3 233.1h3v3h-3zM1265.1 233.1h3v3h-3zM1271.5 233.1h3v3h-3z" fill="#e4e4e0"/>
<rect x="1239" y="203" width="6" height="11" fill="#2f7ed0" rx="1"/>
<rect x="766.5" y="602.7" width="9" height="26.8" fill="#b9b6a8" rx="2"/>
<rect x="858.5" y="602.7" width="9" height="26.8" fill="#b9b6a8" rx="2"/>
<rect x="770.5" y="603.7" width="93" height="23.8" fill="#3c4250" rx="2"/>
<rect x="779.5" y="612.6" width="75" height="6" fill="#2b2f38" rx="1"/>
<path d="M780.5 604.7v6M780.5 620.5v6M784.6 604.7v6M784.6 620.5v6M788.6 604.7v6M788.6 620.5v6M792.7 604.7v6M792.7 620.5v6M796.7 604.7v6M796.7 620.5v6M800.8 604.7v6M800.8 620.5v6M804.8 604.7v6M804.8 620.5v6M808.9 604.7v6M808.9 620.5v6M812.9 604.7v6M812.9 620.5v6M817 604.7v6M817 620.5v6M821.1 604.7v6M821.1 620.5v6M825.1 604.7v6M825.1 620.5v6M829.2 604.7v6M829.2 620.5v6M833.2 604.7v6M833.2 620.5v6M837.3 604.7v6M837.3 620.5v6M841.3 604.7v6M841.3 620.5v6M845.4 604.7v6M845.4 620.5v6M849.4 604.7v6M849.4 620.5v6M853.5 604.7v6M853.5 620.5v6" stroke="#d2a63c" stroke-width="1.800" fill="none"/>
<path d="M780.5 627.5v3.500M784.6 627.5v3.500M788.6 627.5v3.500M792.7 627.5v3.500M796.7 627.5v3.500M800.8 627.5v3.500M804.8 627.5v3.500M808.9 627.5v3.500M812.9 627.5v3.500M817 627.5v3.500M821.1 627.5v3.500M825.1 627.5v3.500M829.2 627.5v3.500M833.2 627.5v3.500M837.3 627.5v3.500M841.3 627.5v3.500M845.4 627.5v3.500M849.4 627.5v3.500M853.5 627.5v3.500" stroke="#e0e0dc" stroke-width="1.800" fill="none"/>
<rect x="1224.8" y="608.5" width="9" height="24.7" fill="#b9b6a8" rx="2"/>
<rect x="1325.4" y="608.5" width="9" height="24.7" fill="#b9b6a8" rx="2"/>
<rect x="1228.8" y="609.5" width="101.6" height="21.7" fill="#4a5470" rx="2"/>
<rect x="1237.8" y="617.4" width="83.6" height="6" fill="#2b2f38" rx="1"/>
<path d="M1238.8 610.5v6M1238.8 624.2v6M1242.9 610.5v6M1242.9 624.2v6M1247 610.5v6M1247 624.2v6M1251 610.5v6M1251 624.2v6M1255.1 610.5v6M1255.1 624.2v6M1259.2 610.5v6M1259.2 624.2v6M1263.3 610.5v6M1263.3 624.2v6M1267.4 610.5v6M1267.4 624.2v6M1271.4 610.5v6M1271.4 624.2v6M1275.5 610.5v6M1275.5 624.2v6M1279.6 610.5v6M1279.6 624.2v6M1283.7 610.5v6M1283.7 624.2v6M1287.8 610.5v6M1287.8 624.2v6M1291.8 610.5v6M1291.8 624.2v6M1295.9 610.5v6M1295.9 624.2v6M1300 610.5v6M1300 624.2v6M1304.1 610.5v6M1304.1 624.2v6M1308.2 610.5v6M1308.2 624.2v6M1312.2 610.5v6M1312.2 624.2v6M1316.3 610.5v6M1316.3 624.2v6M1320.4 610.5v6M1320.4 624.2v6" stroke="#d2a63c" stroke-width="1.800" fill="none"/>
<path d="M1238.8 631.2v3.500M1242.9 631.2v3.500M1247 631.2v3.500M1251 631.2v3.500M1255.1 631.2v3.500M1259.2 631.2v3.500M1263.3 631.2v3.500M1267.4 631.2v3.500M1271.4 631.2v3.500M1275.5 631.2v3.500M1279.6 631.2v3.500M1283.7 631.2v3.500M1287.8 631.2v3.500M1291.8 631.2v3.500M1295.9 631.2v3.500M1300 631.2v3.500M1304.1 631.2v3.500M1308.2 631.2v3.500M1312.2 631.2v3.500M1316.3 631.2v3.500M1320.4 631.2v3.500" stroke="#e0e0dc" stroke-width="1.800" fill="none"/>
<rect x="784.8" y="204.5" width="23.7" height="12" fill="#6d7480" rx="2"/>
<rect x="787.8" y="207.5" width="17.7" height="6" fill="#3a3e46" rx="1"/>
<rect x="784.8" y="272.7" width="23.7" height="11" fill="#6d7480" rx="2"/>
<rect x="787.8" y="275.7" width="17.7" height="5" fill="#d9dadc" rx="1"/>
<rect x="786.8" y="283.7" width="19.7" height="3" fill="#9a9c9c"/>
<rect x="792.6" y="214.5" width="8" height="60.2" fill="#3a3d42" rx="1"/>
<path d="M783.8 221.5h8M801.5 221.5h8M783.8 225.9h8M801.5 225.9h8M783.8 230.3h8M801.5 230.3h8M783.8 234.6h8M801.5 234.6h8M783.8 239h8M801.5 239h8M783.8 243.4h8M801.5 243.4h8M783.8 247.8h8M801.5 247.8h8M783.8 252.2h8M801.5 252.2h8M783.8 256.6h8M801.5 256.6h8M783.8 260.9h8M801.5 260.9h8M783.8 265.3h8M801.5 265.3h8M783.8 269.7h8M801.5 269.7h8" stroke="#c9982e" stroke-width="2.200" fill="none"/>
<rect x="686.1" y="608" width="54.6" height="35.5" fill="#727a8c" rx="3"/>
<rect x="693" y="615" width="41" height="22" fill="#3a3f4a" rx="2"/>
<rect x="701" y="621" width="25" height="10" fill="#5e6472" rx="1"/>
<path d="M703 611v5M709 611v5M715 611v5M721 611v5M703 636v5M709 636v5M715 636v5M721 636v5" stroke="#d2a63c" stroke-width="2"/>
<path d="M696 643.500h6M706 643.500h4M713 643.500h4M720 643.500h4M728 643.500h6" stroke="#e0e0dc" stroke-width="2.500"/>
<rect x="1117.6" y="600" width="61.2" height="35.7" fill="#2a2c2a" rx="2"/>
<rect x="1119" y="602" width="58" height="4" fill="#6f7374"/>
<rect x="1119" y="606" width="6" height="26" fill="#cfa63a"/>
<rect x="1171" y="606" width="6" height="26" fill="#cfa63a"/>
<rect x="1131" y="606" width="27" height="8" fill="#cfa63a"/>
<rect x="1131" y="622" width="27" height="9" fill="#cfa63a"/>
<rect x="1139" y="604" width="4" height="29" fill="#cfa63a"/>
<rect x="1149" y="604" width="4" height="29" fill="#cfa63a"/>
<rect x="1127" y="614" width="41" height="8" fill="#23262a"/>
<rect x="1119" y="632" width="58" height="4" fill="#d6d6d2"/>
<rect x="816.5" y="226.3" width="49.5" height="54.5" fill="#bdb9a8" rx="4"/>
<rect x="852" y="231" width="14" height="31" fill="#b8a25e" rx="3"/>
<rect x="826" y="226" width="25" height="30" fill="#1d1d1b" rx="3"/>
<rect x="828.4" y="228.3" width="19.8" height="24.7" fill="#f0efe0" rx="2"/>
<rect x="829" y="262" width="35" height="17" fill="#c9c6b6" rx="2"/>
<ellipse cx="1076" cy="621" rx="25.600" ry="13.600" fill="none" stroke="#f20008" stroke-width="2.800"/>
</g>
<g font-family="Liberation Sans,sans-serif" font-size="28" fill="#000" fill-opacity=".085"><text transform="translate(670 787) rotate(-45)">XZZ@XZZHK</text><text transform="translate(1170 787) rotate(-45)">XZZ@XZZHK</text></g>
<rect x="836.5" y="690" width="246.5" height="146.5" fill="#f7a65c"/>
<rect x="841" y="694.5" width="237.5" height="137.5" fill="#2f332f"/>
<path d="M983 711H1078.500V832H1018L987 800V715z" fill="#3a3e3b"/><path d="M983 711.500H1078.500" stroke="#aeb4b4" stroke-width="1.500"/><path d="M987.500 713V800L1019 832" stroke="#6a706c" stroke-width="1.200" fill="none"/>
<rect x="1025" y="715" width="53.5" height="98" fill="#1e2224" rx="2"/>
<rect x="1025" y="715" width="37" height="13" fill="#c4c8c8"/>
<rect x="1025" y="800" width="37" height="13" fill="#d4d8d8"/>
<rect x="1027" y="732" width="14" height="25" fill="#c9a63c"/>
<rect x="1027" y="770" width="14" height="25" fill="#c9a63c"/>
<rect x="1048" y="731" width="14" height="7" fill="#d9c27a"/>
<rect x="1050" y="790" width="10" height="7" fill="#d9c27a"/>
<rect x="1067" y="715" width="11.5" height="98" fill="#3a3420"/>
<rect x="1068" y="728" width="10.5" height="28" fill="#d2ac3e"/>
<rect x="1068" y="768" width="10.5" height="32" fill="#d2ac3e"/>
<rect x="1066" y="800" width="12.5" height="13" fill="#c8cccc"/>
<path d="M936 709.500h31M951.500 695v30" stroke="#b79a52" stroke-width="5" fill="none"/>
<circle cx="885.3" cy="772" r="18.5" fill="#1c1f1c"/>
<circle cx="944.4" cy="772" r="18.5" fill="#1c1f1c"/>
<circle cx="885.3" cy="774" r="17" fill="#c9ab63"/>
<circle cx="944.4" cy="774" r="17" fill="#c9ab63"/>
<rect x="860" y="748.300" width="112.800" height="53.200" fill="none" stroke="#f5000a" stroke-width="4.500"/>
<path d="M1060 633.500L982 737" stroke="#f20008" stroke-width="4.400" fill="none"/>
<path d="M975.300 746.300l2.500-17.500 13 9.800z" fill="#f0000a"/>
</svg>
 </div></div>
</div>
<div id="status"><span>XZZ Schematics https://www.xzztools.com</span></div>
</body></html>
